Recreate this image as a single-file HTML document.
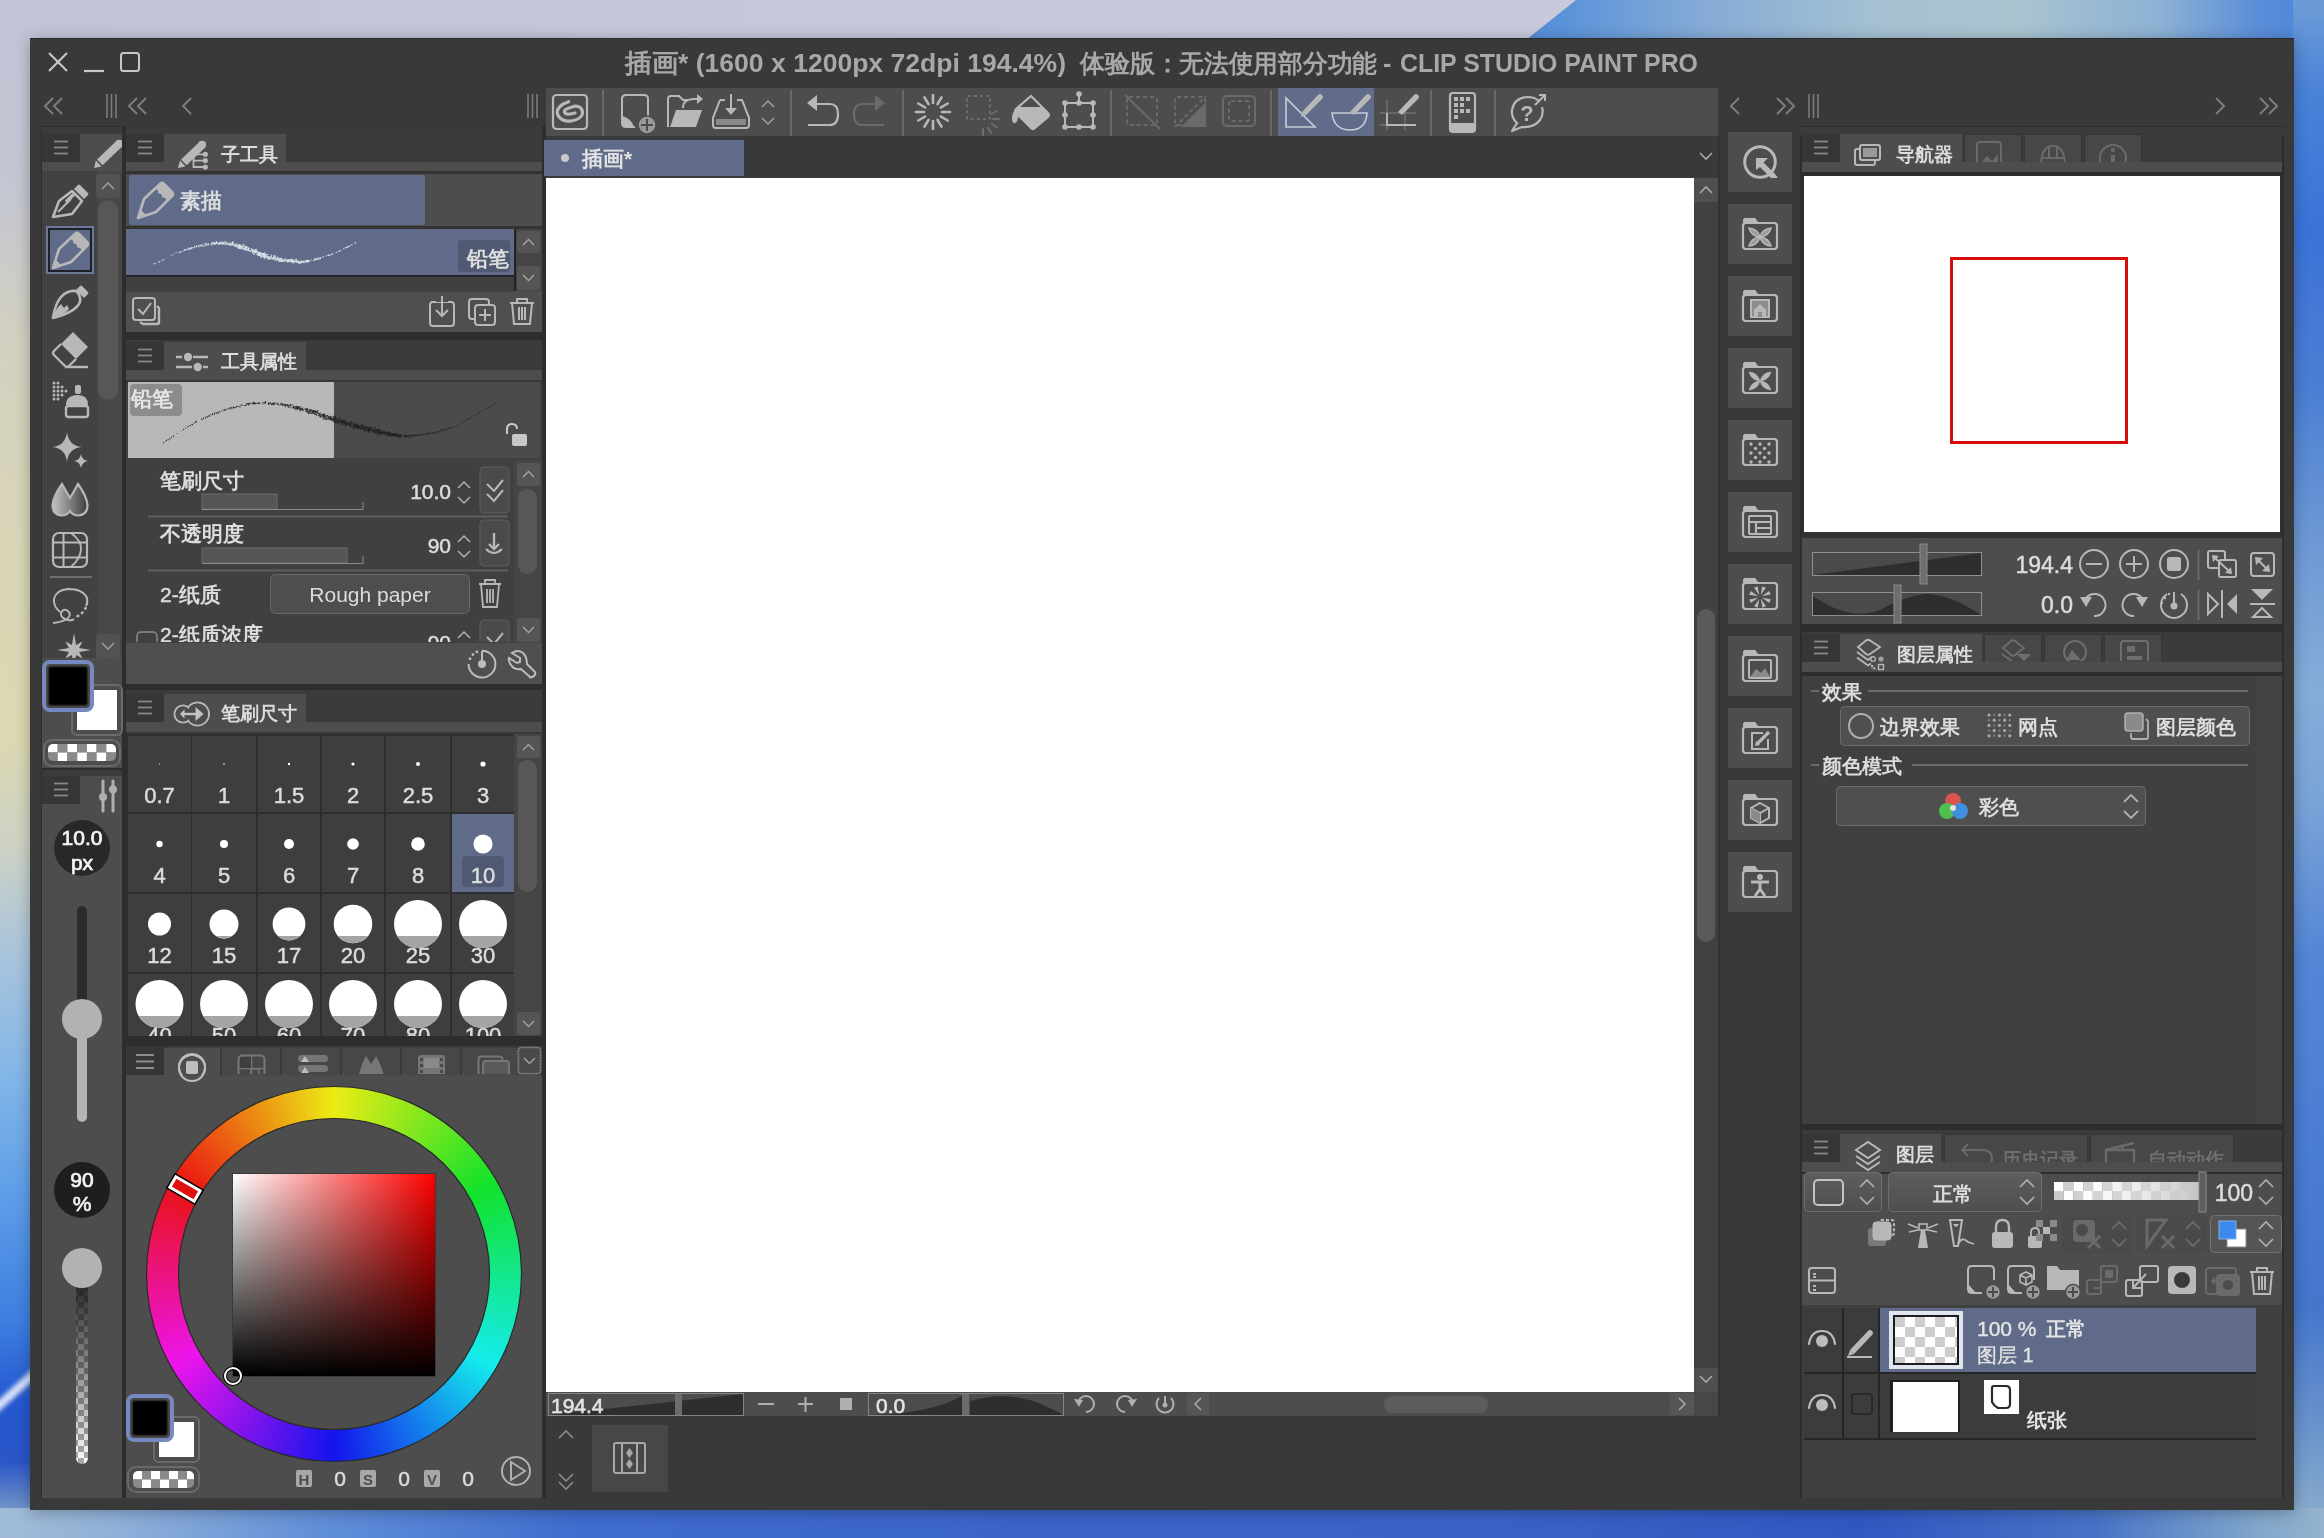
<!DOCTYPE html>
<html><head><meta charset="utf-8"><style>
html,body{margin:0;padding:0;width:2324px;height:1538px;overflow:hidden;background:#c3c7d8}
svg text{font-family:"Liberation Sans",sans-serif}
</style></head><body>

<div style="position:absolute;left:0;top:0;width:2324px;height:1538px;overflow:hidden;background:#c3c7d8">
 <div style="position:absolute;left:0;top:0;width:2324px;height:40px;background:linear-gradient(90deg,#c0c4d6 0%,#c6c9da 40%,#c8cadb 66%)"></div>
 <div style="position:absolute;left:1500px;top:0;width:824px;height:40px;clip-path:polygon(76px 0,824px 0,824px 40px,26px 40px);background:linear-gradient(90deg,#4f8ad8 0%,#5b93da 8%,#86acd6 25%,#a4c0d2 45%,#aac4d0 62%,#8db2d4 80%,#5a8ed8 92%,#4a84dc 100%)"></div>
 <div style="position:absolute;left:0;top:0;width:31px;height:1538px;background:linear-gradient(180deg,#c0c4d6 0%,#c4c6d2 12%,#d2d0c0 22%,#d9d6b8 35%,#dcd8b2 48%,#cdd2c4 55%,#a9c4dc 62%,#82b6e8 70%,#5c9ce8 78%,#3d7ee0 86%,#2658d0 91%,#2a56c8 95%,#6f90c8 98%,#9cb6d0 100%)"></div>
 <div style="position:absolute;left:-20px;top:1382px;width:80px;height:9px;background:rgba(240,244,255,0.85);transform:rotate(-42deg);filter:blur(2px)"></div>
 <div style="position:absolute;left:2293px;top:0;width:31px;height:1538px;background:linear-gradient(180deg,#6c9cd6 0%,#4a82d8 6%,#3c72d8 15%,#4a7ed4 25%,#6c98d4 35%,#86acd8 45%,#7aa4d8 52%,#5486d6 62%,#4a7cd4 75%,#4576cc 85%,#6f98cc 94%,#90b0cc 100%)"></div>
 <div style="position:absolute;left:0;top:1508px;width:2324px;height:30px;background:linear-gradient(90deg,#a2bcd6 0%,#90b0d8 5%,#5f8ed8 14%,#3f6cce 25%,#3a64c8 45%,#3a62c6 65%,#2f58c2 80%,#4672c6 90%,#80a6cc 97%,#94b2cc 100%)"></div>
 <div style="position:absolute;left:30px;top:38px;width:2264px;height:1472px;box-shadow:0 2px 14px rgba(0,0,0,0.28)"></div>
</div>

<svg width="2324" height="1538" style="position:absolute;left:0;top:0;will-change:transform" font-family="Liberation Sans, sans-serif">
<rect x="30" y="38" width="2264" height="1472" fill="#393939" />
<line x1="30" y1="38.5" x2="2294" y2="38.5" stroke="#2a2a2a" stroke-width="1" />
<line x1="49" y1="53" x2="67" y2="71" stroke="#c8c8c8" stroke-width="2.2" />
<line x1="67" y1="53" x2="49" y2="71" stroke="#c8c8c8" stroke-width="2.2" />
<line x1="84" y1="71" x2="104" y2="71" stroke="#c8c8c8" stroke-width="2.2" />
<rect x="121" y="53" width="18" height="18" rx="2.5" fill="none" stroke="#c8c8c8" stroke-width="2" />
<text x="625" y="71.5" font-size="26" fill="#a8a8a8" text-anchor="start" font-weight="bold" textLength="441" lengthAdjust="spacingAndGlyphs">插画* (1600 x 1200px 72dpi 194.4%)</text>
<text x="1080" y="72" font-size="25" fill="#a8a8a8" text-anchor="start" font-weight="bold" >体验版：</text>
<text x="1179" y="72" font-size="25" fill="#a8a8a8" text-anchor="start" font-weight="bold" textLength="198" lengthAdjust="spacingAndGlyphs">无法使用部分功能</text>
<text x="1383" y="71.5" font-size="25" fill="#a8a8a8" text-anchor="start" font-weight="bold" >-</text>
<text x="1400" y="71.5" font-size="25" fill="#a8a8a8" text-anchor="start" font-weight="bold" textLength="298" lengthAdjust="spacingAndGlyphs">CLIP STUDIO PAINT PRO</text>
<path d="M53,98 L45,106 L53,114 M62,98 L54,106 L62,114" fill="none" stroke="#7c7c7c" stroke-width="2" />
<line x1="107.0" y1="94" x2="107.0" y2="118" stroke="#7c7c7c" stroke-width="1.6" />
<line x1="111.5" y1="94" x2="111.5" y2="118" stroke="#7c7c7c" stroke-width="1.6" />
<line x1="116.0" y1="94" x2="116.0" y2="118" stroke="#7c7c7c" stroke-width="1.6" />
<path d="M137,98 L129,106 L137,114 M146,98 L138,106 L146,114" fill="none" stroke="#7c7c7c" stroke-width="2" />
<path d="M191,98 L183,106 L191,114" fill="none" stroke="#7c7c7c" stroke-width="2" />
<line x1="528.0" y1="94" x2="528.0" y2="118" stroke="#7c7c7c" stroke-width="1.6" />
<line x1="532.5" y1="94" x2="532.5" y2="118" stroke="#7c7c7c" stroke-width="1.6" />
<line x1="537.0" y1="94" x2="537.0" y2="118" stroke="#7c7c7c" stroke-width="1.6" />
<path d="M1739,98 L1731,106 L1739,114" fill="none" stroke="#7c7c7c" stroke-width="2" />
<path d="M1777,98 L1785,106 L1777,114 M1786,98 L1794,106 L1786,114" fill="none" stroke="#7c7c7c" stroke-width="2" />
<line x1="1809.0" y1="94" x2="1809.0" y2="118" stroke="#7c7c7c" stroke-width="1.6" />
<line x1="1813.5" y1="94" x2="1813.5" y2="118" stroke="#7c7c7c" stroke-width="1.6" />
<line x1="1818.0" y1="94" x2="1818.0" y2="118" stroke="#7c7c7c" stroke-width="1.6" />
<path d="M2216,98 L2224,106 L2216,114" fill="none" stroke="#7c7c7c" stroke-width="2" />
<path d="M2260,98 L2268,106 L2260,114 M2269,98 L2277,106 L2269,114" fill="none" stroke="#7c7c7c" stroke-width="2" />
<rect x="41" y="126" width="82" height="1372" fill="#2d2d2d" />
<rect x="42" y="127" width="80" height="35" fill="#3b3b3b" />
<rect x="42" y="134" width="38" height="28" fill="#363636" />
<rect x="42" y="162" width="80" height="10" fill="#4d4d4d" />
<line x1="54.0" y1="141.5" x2="68.0" y2="141.5" stroke="#888888" stroke-width="1.8" />
<line x1="54.0" y1="147.5" x2="68.0" y2="147.5" stroke="#888888" stroke-width="1.8" />
<line x1="54.0" y1="153.5" x2="68.0" y2="153.5" stroke="#888888" stroke-width="1.8" />
<rect x="80" y="134" width="42" height="38" fill="#4d4d4d" />
<clipPath id="cstriptab"><rect x="80" y="134" width="42" height="38"/></clipPath><g clip-path="url(#cstriptab)">
<line x1="99.8" y1="162.4" x2="119.1" y2="143.8" stroke="#b8b8b8" stroke-width="8.0"/>
<circle cx="119.1" cy="143.8" r="4.0" fill="#b8b8b8"/>
<path d="M94,168 L101.5,166.4 L95.9,160.6 Z" fill="#b8b8b8"/>
</g>
<rect x="42" y="171" width="80" height="487" fill="#424242" />
<rect x="97" y="171" width="25" height="487" fill="#474747" />
<rect x="96" y="174" width="24" height="24" rx="3" fill="#525252" stroke="none" stroke-width="2" />
<path d="M102,189 L108,183 L114,189" fill="none" stroke="#9a9a9a" stroke-width="1.6" />
<rect x="98" y="200" width="20" height="200" rx="10" fill="#575757" stroke="none" stroke-width="2" />
<rect x="96" y="634" width="24" height="24" rx="3" fill="#525252" stroke="none" stroke-width="2" />
<path d="M102,643 L108,649 L114,643" fill="none" stroke="#9a9a9a" stroke-width="1.6" />
<g transform="translate(52,181)"><path d="M22,8 L26,4 Q27,3 28,4 L36,12 Q37,13 36,14 L32,18 Z" fill="#b8b8b8"/><path d="M1,36 L7,20 L20,10 L30,20 L20,33 Z" fill="none" stroke="#b8b8b8" stroke-width="2.6" stroke-linejoin="round"/><path d="M6,31 L19,18" stroke="#b8b8b8" stroke-width="2"/><path d="M15,20 L21,14" stroke="#b8b8b8" stroke-width="3.5" stroke-linecap="round"/></g>
<rect x="46" y="226" width="48" height="48" fill="#6b7899" />
<rect x="48" y="228" width="44" height="44" fill="#1e2128" />
<rect x="50" y="230" width="40" height="40" fill="#5f6b88" />
<g transform="translate(52,232)"><path d="M1,36 L7,17 L23,2 Q25,0 27,2 L35,10 Q37,12 35,14 L19,30 Z" fill="none" stroke="#b8b8b8" stroke-width="2.6" stroke-linejoin="round"/><path d="M23,2 Q25,0 27,2 L35,10 Q37,12 35,14 L30,19 Q28,14 25,16 Q26,12 21,11 Q22,7 17,7 Z" fill="#b8b8b8"/><path d="M1,36 L4,28 L9,33 Z" fill="#b8b8b8"/></g>
<g transform="translate(52,282)"><path d="M24,8 L28,4 Q29,3 30,4 L36,10 Q37,11 36,12 L32,16 Z" fill="#b8b8b8"/><path d="M1,36 Q3,22 9,15 Q15,8 24,9 Q29,13 28,20 Q24,30 1,36 Z" fill="none" stroke="#b8b8b8" stroke-width="2.6" stroke-linejoin="round"/><path d="M1,36 Q4,26 9,22 L12,26 L15,23 L17,27 Q12,33 1,36 Z" fill="#b8b8b8"/></g>
<g transform="translate(52,332)"><path d="M21,0 L36,15 L24,27 L9,12 Z" fill="#b8b8b8"/><path d="M9,12 L2,19 Q0,21 2,23 L13,34 Q15,36 17,34 L24,27" fill="none" stroke="#b8b8b8" stroke-width="2.4" stroke-linejoin="round"/><path d="M13,35 L36,35" stroke="#b8b8b8" stroke-width="2.4"/></g>
<g transform="translate(52,381)"><circle cx="2" cy="2" r="1.5" fill="#b8b8b8"/><circle cx="6" cy="2" r="1.5" fill="#b8b8b8"/><circle cx="2" cy="6" r="1.5" fill="#b8b8b8"/><circle cx="6" cy="6" r="1.5" fill="#b8b8b8"/><circle cx="10" cy="6" r="1.5" fill="#b8b8b8"/><circle cx="2" cy="10" r="1.5" fill="#b8b8b8"/><circle cx="6" cy="10" r="1.5" fill="#b8b8b8"/><circle cx="10" cy="10" r="1.5" fill="#b8b8b8"/><circle cx="14" cy="10" r="1.5" fill="#b8b8b8"/><circle cx="2" cy="14" r="1.5" fill="#b8b8b8"/><circle cx="6" cy="14" r="1.5" fill="#b8b8b8"/><circle cx="10" cy="14" r="1.5" fill="#b8b8b8"/><circle cx="6" cy="18" r="1.5" fill="#b8b8b8"/><circle cx="2" cy="18" r="1.5" fill="#b8b8b8"/><rect x="23" y="4" width="6" height="9" rx="2" fill="#b8b8b8"/><path d="M14,24 Q14,14 26,14 Q36,14 36,24 Z" fill="#b8b8b8"/><rect x="14" y="25" width="22" height="11" rx="2.5" fill="none" stroke="#b8b8b8" stroke-width="2.4"/></g>
<path d="M67,432 Q68.5,445.5 81.5,447 Q68.5,448.5 67,462 Q65.5,448.5 52.5,447 Q65.5,445.5 67,432 Z" fill="#b8b8b8" stroke="none" stroke-width="2" />
<path d="M81,454 Q82,460 88,461 Q82,462 81,468 Q80,462 74,461 Q80,460 81,454 Z" fill="#b8b8b8" stroke="none" stroke-width="2" />
<defs><linearGradient id="blendg" x1="0" y1="0" x2="1" y2="0"><stop offset="0" stop-color="#c4c4c4"/><stop offset="1" stop-color="#3c3c3c"/></linearGradient></defs>
<path d="M62,484 Q53,497 52.5,505 Q52.5,515 62,515.5 Q67,515.5 70,511 Q73,515.5 78,515.5 Q87.5,515 87.5,505 Q87,497 78,484 Q73,493 70,498 Q67,493 62,484 Z" fill="url(#blendg)" stroke="#b8b8b8" stroke-width="2.2" />
<rect x="53" y="533" width="34" height="34" rx="6" fill="none" stroke="#b8b8b8" stroke-width="2.2" />
<path d="M53,542.5 L87,542.5 M53,557.5 L87,557.5 M63.5,533 L63.5,567 M71,533 Q82,541 81,550 Q80,559 71,567" fill="none" stroke="#b8b8b8" stroke-width="2" />
<line x1="50" y1="577" x2="92" y2="577" stroke="#6e6e6e" stroke-width="2" />
<path d="M53,623 Q62,622 67,619 Q72,615 68,611 Q63,608 61,613 Q60,618 68,620 Q72,621 74,619" fill="none" stroke="#b8b8b8" stroke-width="2" />
<path d="M60,612 Q53,606 54,599 Q56,590 68,589 Q83,589 87,598 Q88,603 86,606" fill="none" stroke="#b8b8b8" stroke-width="2" />
<path d="M86,607 Q84,613 76,617" fill="none" stroke="#b8b8b8" stroke-width="2.4" stroke-dasharray="3,2.5"/>
<clipPath id="clipstar"><rect x="42" y="630" width="55" height="28"/></clipPath>
<g clip-path="url(#clipstar)">
<g transform="translate(56,632)"><path d="M18.0,1.0 L20.1,12.9 L26.5,9.5 L23.1,15.9 L35.0,18.0 L23.1,20.1 L26.5,26.5 L20.1,23.1 L18.0,35.0 L15.9,23.1 L9.5,26.5 L12.9,20.1 L1.0,18.0 L12.9,15.9 L9.5,9.5 L15.9,12.9 Z" fill="#b8b8b8"/></g>
</g>
<rect x="42" y="658" width="80" height="110" fill="#4d4d4d" />
<rect x="72" y="685" width="50" height="50" rx="5" fill="none" stroke="#6a6a6a" stroke-width="2" />
<rect x="77" y="690" width="40" height="40" fill="#ffffff" />
<rect x="44" y="662" width="48" height="48" rx="6" fill="#4a4a4a" stroke="#7589c0" stroke-width="4" />
<rect x="48.5" y="666.5" width="39" height="39" rx="3" fill="#000000" stroke="#2c2c2c" stroke-width="1.5" />
<rect x="44" y="740" width="76" height="26" rx="8" fill="none" stroke="#6a6a6a" stroke-width="2" />
<clipPath id="cliptr1"><rect x="48" y="744" width="68" height="17" rx="5"/></clipPath><g clip-path="url(#cliptr1)">
<rect x="48.0" y="744.0" width="9.72" height="8.5" fill="#ffffff"/>
<rect x="48.0" y="752.5" width="9.72" height="8.5" fill="#8a8a8a"/>
<rect x="57.7" y="744.0" width="9.72" height="8.5" fill="#8a8a8a"/>
<rect x="57.7" y="752.5" width="9.72" height="8.5" fill="#ffffff"/>
<rect x="67.4" y="744.0" width="9.72" height="8.5" fill="#ffffff"/>
<rect x="67.4" y="752.5" width="9.72" height="8.5" fill="#8a8a8a"/>
<rect x="77.2" y="744.0" width="9.72" height="8.5" fill="#8a8a8a"/>
<rect x="77.2" y="752.5" width="9.72" height="8.5" fill="#ffffff"/>
<rect x="86.9" y="744.0" width="9.72" height="8.5" fill="#ffffff"/>
<rect x="86.9" y="752.5" width="9.72" height="8.5" fill="#8a8a8a"/>
<rect x="96.6" y="744.0" width="9.72" height="8.5" fill="#8a8a8a"/>
<rect x="96.6" y="752.5" width="9.72" height="8.5" fill="#ffffff"/>
<rect x="106.3" y="744.0" width="9.72" height="8.5" fill="#ffffff"/>
<rect x="106.3" y="752.5" width="9.72" height="8.5" fill="#8a8a8a"/>
</g>
<rect x="42" y="768" width="80" height="4" fill="#2d2d2d" />
<rect x="42" y="770" width="80" height="34" fill="#3b3b3b" />
<rect x="42" y="776" width="38" height="28" fill="#363636" />
<rect x="42" y="804" width="80" height="10" fill="#4d4d4d" />
<line x1="54.0" y1="783.5" x2="68.0" y2="783.5" stroke="#888888" stroke-width="1.8" />
<line x1="54.0" y1="789.5" x2="68.0" y2="789.5" stroke="#888888" stroke-width="1.8" />
<line x1="54.0" y1="795.5" x2="68.0" y2="795.5" stroke="#888888" stroke-width="1.8" />
<rect x="80" y="776" width="42" height="38" fill="#4d4d4d" />
<path d="M103,781 L103,811 M113,781 L113,811" fill="none" stroke="#b0b0b0" stroke-width="3" stroke-linecap="round"/>
<circle cx="103" cy="797" r="4" fill="#b0b0b0" stroke="none" stroke-width="2" />
<circle cx="113" cy="789.5" r="4" fill="#b0b0b0" stroke="none" stroke-width="2" />
<rect x="42" y="814" width="80" height="684" fill="#4d4d4d" />
<circle cx="82" cy="848" r="28" fill="#282828" stroke="none" stroke-width="2" />
<text x="82" y="845" font-size="21" fill="#f4f4f4" text-anchor="middle" font-weight="normal" stroke="#f4f4f4" stroke-width="0.7">10.0</text>
<text x="82" y="870" font-size="21" fill="#f4f4f4" text-anchor="middle" font-weight="normal" stroke="#f4f4f4" stroke-width="0.7">px</text>
<rect x="77" y="906" width="10" height="112" rx="5" fill="#2b2b2b" stroke="none" stroke-width="2" />
<rect x="77" y="1020" width="10" height="102" rx="5" fill="#b4b4b4" stroke="none" stroke-width="2" />
<circle cx="82" cy="1019" r="20" fill="#b2b2b2" stroke="none" stroke-width="2" />
<circle cx="82" cy="1190" r="28" fill="#1e1e1e" stroke="none" stroke-width="2" />
<text x="82" y="1187" font-size="21" fill="#f4f4f4" text-anchor="middle" font-weight="normal" stroke="#f4f4f4" stroke-width="0.7">90</text>
<text x="82" y="1211" font-size="21" fill="#f4f4f4" text-anchor="middle" font-weight="normal" stroke="#f4f4f4" stroke-width="0.7">%</text>
<defs><pattern id="chk6" width="12" height="12" patternUnits="userSpaceOnUse"><rect width="12" height="12" fill="#ffffff"/><rect width="6" height="6" fill="#aaaaaa"/><rect x="6" y="6" width="6" height="6" fill="#aaaaaa"/></pattern><linearGradient id="fadeblk" x1="0" y1="0" x2="0" y2="1"><stop offset="0" stop-color="#1a1a1a" stop-opacity="1"/><stop offset="1" stop-color="#1a1a1a" stop-opacity="0"/></linearGradient></defs>
<rect x="76" y="1270" width="12" height="194" rx="6" fill="url(#chk6)" stroke="none" stroke-width="2" />
<rect x="76" y="1270" width="12" height="194" rx="6" fill="url(#fadeblk)" stroke="none" stroke-width="2" />
<circle cx="82" cy="1268" r="20" fill="#b2b2b2" stroke="none" stroke-width="2" />
<rect x="123" y="126" width="4" height="1372" fill="#2d2d2d" />
<rect x="542" y="126" width="4" height="1372" fill="#2d2d2d" />
<rect x="126" y="127" width="416" height="35" fill="#3b3b3b" />
<rect x="126" y="134" width="38" height="28" fill="#363636" />
<rect x="126" y="162" width="416" height="10" fill="#4d4d4d" />
<line x1="138.0" y1="141.5" x2="152.0" y2="141.5" stroke="#888888" stroke-width="1.8" />
<line x1="138.0" y1="147.5" x2="152.0" y2="147.5" stroke="#888888" stroke-width="1.8" />
<line x1="138.0" y1="153.5" x2="152.0" y2="153.5" stroke="#888888" stroke-width="1.8" />
<rect x="164" y="134" width="122" height="38" fill="#4d4d4d" />
<line x1="183.8" y1="162.4" x2="202.1" y2="144.8" stroke="#b8b8b8" stroke-width="8.0"/>
<circle cx="202.1" cy="144.8" r="4.0" fill="#b8b8b8"/>
<path d="M178,168 L185.5,166.4 L179.9,160.6 Z" fill="#b8b8b8"/>
<path d="M193.5,155 L193.5,167 L204,167 M193.5,160.6 L204,160.6 M193.5,154.3 L204,154.3" fill="none" stroke="#b8b8b8" stroke-width="1.8" />
<circle cx="205.3" cy="154.3" r="2.6" fill="#b8b8b8" stroke="none" stroke-width="2" />
<circle cx="205.3" cy="160.6" r="2.6" fill="#b8b8b8" stroke="none" stroke-width="2" />
<circle cx="205.3" cy="167" r="2.6" fill="#b8b8b8" stroke="none" stroke-width="2" />
<text x="221" y="161" font-size="19" fill="#dcdcdc" text-anchor="start" font-weight="bold" >子工具</text>
<rect x="126" y="171" width="416" height="121" fill="#4d4d4d" />
<rect x="126" y="171" width="416" height="3" fill="#333333" />
<rect x="129" y="175" width="296" height="50" rx="2" fill="#5f6b88" stroke="none" stroke-width="2" />
<g transform="translate(137,182)"><path d="M1,36 L7,17 L23,2 Q25,0 27,2 L35,10 Q37,12 35,14 L19,30 Z" fill="none" stroke="#b8b8b8" stroke-width="2.6" stroke-linejoin="round"/><path d="M23,2 Q25,0 27,2 L35,10 Q37,12 35,14 L30,19 Q28,14 25,16 Q26,12 21,11 Q22,7 17,7 Z" fill="#b8b8b8"/><path d="M1,36 L4,28 L9,33 Z" fill="#b8b8b8"/></g>
<text x="180" y="208" font-size="21" fill="#dcdcdc" text-anchor="start" font-weight="bold" >素描</text>
<rect x="126" y="226" width="416" height="3" fill="#333333" />
<rect x="126" y="229" width="388" height="47" fill="#5f6b88" />
<rect x="126" y="275" width="388" height="2" fill="#23262e" />
<rect x="514" y="229" width="2" height="62" fill="#222222" />
<rect x="126" y="277" width="388" height="15" fill="#404040" />
<rect x="516" y="229" width="26" height="62" fill="#454545" />
<rect x="517" y="231" width="23" height="22" rx="3" fill="#555555" stroke="none" stroke-width="2" />
<path d="M523,245 L528.5,239.5 L534,245" fill="none" stroke="#a0a0a0" stroke-width="1.5" />
<rect x="517" y="266" width="23" height="24" rx="3" fill="#555555" stroke="none" stroke-width="2" />
<path d="M523,275 L528.5,280.5 L534,275" fill="none" stroke="#a0a0a0" stroke-width="1.5" />
<g fill="#e4e8f0" opacity="0.9"><circle cx="229.7" cy="243.2" r="0.67"/><circle cx="275.0" cy="258.2" r="0.39"/><circle cx="158.2" cy="262.1" r="0.34"/><circle cx="354.9" cy="243.0" r="0.41"/><circle cx="304.8" cy="260.7" r="0.38"/><circle cx="276.2" cy="259.0" r="0.83"/><circle cx="262.9" cy="255.2" r="0.39"/><circle cx="294.2" cy="260.2" r="0.65"/><circle cx="239.6" cy="248.5" r="0.61"/><circle cx="288.8" cy="261.2" r="0.83"/><circle cx="287.6" cy="261.5" r="0.79"/><circle cx="256.3" cy="251.9" r="0.86"/><circle cx="313.9" cy="260.2" r="0.38"/><circle cx="341.3" cy="250.3" r="0.42"/><circle cx="275.0" cy="258.0" r="0.56"/><circle cx="245.8" cy="249.5" r="0.67"/><circle cx="269.4" cy="258.7" r="0.86"/><circle cx="307.8" cy="260.7" r="0.76"/><circle cx="281.3" cy="260.8" r="0.88"/><circle cx="320.7" cy="258.8" r="0.53"/><circle cx="287.7" cy="261.1" r="0.67"/><circle cx="237.1" cy="247.6" r="0.38"/><circle cx="307.9" cy="261.4" r="0.67"/><circle cx="252.3" cy="250.7" r="0.43"/><circle cx="238.8" cy="246.5" r="0.37"/><circle cx="274.1" cy="255.9" r="0.37"/><circle cx="289.0" cy="260.0" r="0.89"/><circle cx="261.0" cy="257.0" r="0.90"/><circle cx="241.0" cy="248.2" r="0.37"/><circle cx="221.0" cy="243.5" r="0.54"/><circle cx="273.6" cy="258.4" r="0.83"/><circle cx="241.3" cy="247.2" r="0.88"/><circle cx="317.6" cy="258.6" r="0.51"/><circle cx="277.4" cy="259.8" r="0.68"/><circle cx="267.9" cy="254.6" r="0.63"/><circle cx="255.0" cy="249.9" r="0.75"/><circle cx="229.7" cy="243.3" r="0.63"/><circle cx="265.3" cy="259.5" r="0.36"/><circle cx="253.3" cy="250.9" r="0.69"/><circle cx="276.3" cy="258.6" r="0.38"/><circle cx="275.3" cy="256.8" r="0.54"/><circle cx="286.5" cy="260.8" r="0.76"/><circle cx="162.6" cy="260.2" r="0.64"/><circle cx="232.2" cy="245.1" r="0.60"/><circle cx="271.1" cy="257.1" r="0.52"/><circle cx="248.0" cy="250.0" r="0.68"/><circle cx="240.5" cy="245.4" r="0.36"/><circle cx="268.2" cy="258.4" r="0.75"/><circle cx="241.3" cy="247.3" r="0.48"/><circle cx="219.5" cy="244.3" r="0.55"/><circle cx="285.2" cy="261.0" r="0.53"/><circle cx="303.9" cy="262.0" r="0.52"/><circle cx="307.9" cy="261.4" r="0.60"/><circle cx="315.2" cy="260.0" r="0.49"/><circle cx="226.6" cy="244.3" r="0.44"/><circle cx="300.3" cy="262.4" r="0.74"/><circle cx="218.0" cy="242.8" r="0.65"/><circle cx="300.3" cy="263.1" r="0.49"/><circle cx="205.1" cy="244.3" r="0.44"/><circle cx="245.6" cy="250.1" r="0.58"/><circle cx="254.2" cy="249.1" r="0.44"/><circle cx="154.9" cy="263.8" r="0.60"/><circle cx="313.9" cy="260.5" r="0.72"/><circle cx="328.6" cy="255.4" r="0.36"/><circle cx="292.0" cy="261.9" r="0.63"/><circle cx="237.9" cy="244.7" r="0.54"/><circle cx="228.0" cy="244.8" r="0.50"/><circle cx="300.3" cy="262.2" r="0.34"/><circle cx="320.3" cy="257.8" r="0.67"/><circle cx="318.8" cy="257.6" r="0.53"/><circle cx="158.2" cy="262.0" r="0.36"/><circle cx="280.3" cy="258.9" r="0.64"/><circle cx="252.6" cy="252.5" r="0.54"/><circle cx="232.4" cy="244.1" r="0.82"/><circle cx="258.8" cy="253.9" r="0.46"/><circle cx="264.2" cy="254.6" r="0.80"/><circle cx="215.0" cy="243.6" r="0.72"/><circle cx="302.0" cy="260.3" r="0.32"/><circle cx="276.2" cy="259.0" r="0.50"/><circle cx="235.0" cy="245.0" r="0.64"/><circle cx="254.1" cy="249.3" r="0.35"/><circle cx="178.2" cy="252.7" r="0.33"/><circle cx="203.7" cy="246.4" r="0.71"/><circle cx="190.1" cy="249.0" r="0.51"/><circle cx="241.5" cy="246.6" r="0.71"/><circle cx="269.5" cy="258.3" r="0.55"/><circle cx="219.5" cy="242.8" r="0.61"/><circle cx="287.7" cy="261.1" r="0.56"/><circle cx="188.3" cy="249.2" r="0.55"/><circle cx="296.8" cy="262.4" r="0.53"/><circle cx="299.4" cy="261.3" r="0.51"/><circle cx="261.1" cy="253.7" r="0.74"/><circle cx="253.4" cy="250.7" r="0.48"/><circle cx="264.3" cy="254.4" r="0.73"/><circle cx="184.9" cy="249.6" r="0.67"/><circle cx="331.3" cy="254.6" r="0.42"/><circle cx="319.1" cy="258.6" r="0.48"/><circle cx="201.7" cy="244.9" r="0.69"/><circle cx="279.9" cy="260.9" r="0.72"/><circle cx="291.2" cy="260.1" r="0.65"/><circle cx="196.6" cy="246.5" r="0.36"/><circle cx="295.9" cy="261.6" r="0.36"/><circle cx="191.8" cy="248.8" r="0.37"/><circle cx="164.2" cy="259.4" r="0.59"/><circle cx="201.9" cy="245.8" r="0.70"/><circle cx="336.1" cy="252.2" r="0.49"/><circle cx="298.5" cy="263.0" r="0.59"/><circle cx="287.7" cy="261.1" r="0.41"/><circle cx="293.1" cy="261.6" r="0.52"/><circle cx="267.4" cy="256.5" r="0.81"/><circle cx="229.5" cy="244.3" r="0.68"/><circle cx="293.0" cy="261.9" r="0.55"/><circle cx="248.6" cy="248.3" r="0.58"/><circle cx="190.0" cy="248.7" r="0.51"/><circle cx="345.0" cy="248.0" r="0.31"/><circle cx="283.9" cy="261.0" r="0.77"/><circle cx="281.7" cy="258.6" r="0.70"/><circle cx="317.7" cy="258.9" r="0.35"/><circle cx="193.2" cy="247.5" r="0.53"/><circle cx="256.2" cy="249.6" r="0.75"/><circle cx="219.5" cy="242.9" r="0.62"/><circle cx="241.2" cy="247.6" r="0.48"/><circle cx="283.9" cy="261.0" r="0.74"/><circle cx="253.4" cy="250.9" r="0.82"/><circle cx="269.8" cy="257.2" r="0.36"/><circle cx="258.5" cy="254.5" r="0.56"/><circle cx="216.5" cy="242.7" r="0.71"/><circle cx="208.5" cy="244.4" r="0.79"/><circle cx="259.3" cy="252.7" r="0.81"/><circle cx="302.0" cy="261.4" r="0.59"/><circle cx="259.0" cy="253.3" r="0.57"/><circle cx="291.3" cy="259.4" r="0.87"/><circle cx="257.9" cy="253.4" r="0.74"/><circle cx="282.7" cy="260.7" r="0.88"/><circle cx="307.9" cy="261.2" r="0.42"/><circle cx="219.5" cy="243.5" r="0.68"/><circle cx="309.1" cy="261.3" r="0.69"/><circle cx="241.5" cy="246.5" r="0.58"/><circle cx="290.0" cy="261.3" r="0.81"/><circle cx="238.8" cy="246.5" r="0.55"/><circle cx="269.8" cy="257.2" r="0.53"/><circle cx="255.2" cy="251.9" r="0.62"/><circle cx="224.1" cy="241.5" r="0.54"/><circle cx="265.4" cy="254.5" r="0.42"/><circle cx="236.4" cy="245.3" r="0.84"/><circle cx="321.8" cy="257.5" r="0.32"/><circle cx="332.4" cy="253.6" r="0.57"/><circle cx="238.6" cy="247.4" r="0.72"/><circle cx="278.8" cy="259.5" r="0.76"/><circle cx="339.9" cy="250.6" r="0.52"/><circle cx="263.6" cy="256.7" r="0.54"/><circle cx="288.8" cy="261.6" r="0.72"/><circle cx="267.1" cy="257.4" r="0.70"/><circle cx="218.0" cy="243.9" r="0.77"/><circle cx="278.6" cy="261.0" r="0.43"/><circle cx="243.4" cy="249.3" r="0.75"/><circle cx="271.4" cy="256.0" r="0.60"/><circle cx="241.5" cy="246.5" r="0.45"/><circle cx="185.0" cy="249.8" r="0.52"/><circle cx="291.2" cy="259.7" r="0.54"/><circle cx="234.0" cy="243.5" r="0.37"/><circle cx="260.2" cy="256.1" r="0.49"/><circle cx="295.0" cy="261.1" r="0.55"/><circle cx="264.8" cy="256.9" r="0.77"/><circle cx="246.1" cy="248.6" r="0.50"/><circle cx="194.9" cy="246.8" r="0.34"/><circle cx="296.8" cy="261.6" r="0.43"/><circle cx="253.6" cy="250.5" r="0.76"/><circle cx="301.2" cy="261.8" r="0.39"/><circle cx="252.0" cy="248.9" r="0.46"/><circle cx="264.1" cy="254.9" r="0.49"/><circle cx="296.8" cy="261.5" r="0.35"/><circle cx="299.4" cy="263.2" r="0.52"/><circle cx="266.6" cy="254.5" r="0.67"/><circle cx="275.9" cy="260.4" r="0.51"/><circle cx="309.0" cy="260.9" r="0.52"/><circle cx="272.3" cy="257.9" r="0.77"/><circle cx="280.2" cy="259.4" r="0.62"/><circle cx="263.1" cy="254.6" r="0.64"/><circle cx="171.0" cy="255.8" r="0.47"/><circle cx="277.8" cy="257.7" r="0.88"/><circle cx="316.5" cy="259.5" r="0.34"/><circle cx="298.6" cy="261.6" r="0.51"/><circle cx="228.2" cy="243.6" r="0.38"/><circle cx="264.7" cy="257.0" r="0.83"/><circle cx="285.4" cy="260.0" r="0.42"/><circle cx="307.7" cy="260.2" r="0.63"/><circle cx="291.2" cy="259.9" r="0.53"/><circle cx="300.3" cy="263.1" r="0.54"/><circle cx="294.1" cy="260.8" r="0.60"/><circle cx="198.4" cy="246.3" r="0.39"/><circle cx="213.4" cy="243.4" r="0.56"/><circle cx="285.4" cy="259.4" r="0.71"/><circle cx="240.2" cy="246.4" r="0.61"/><circle cx="294.1" cy="261.0" r="0.82"/><circle cx="288.8" cy="261.2" r="0.55"/><circle cx="248.8" cy="247.7" r="0.47"/><circle cx="154.8" cy="263.6" r="0.32"/><circle cx="296.8" cy="262.2" r="0.43"/><circle cx="223.8" cy="243.9" r="0.42"/><circle cx="252.3" cy="250.8" r="0.41"/><circle cx="214.9" cy="243.3" r="0.56"/><circle cx="181.8" cy="251.6" r="0.45"/><circle cx="286.5" cy="260.7" r="0.38"/><circle cx="252.4" cy="250.5" r="0.88"/><circle cx="225.3" cy="243.4" r="0.39"/><circle cx="258.5" cy="254.5" r="0.54"/><circle cx="203.6" cy="245.6" r="0.33"/><circle cx="290.0" cy="260.8" r="0.61"/><circle cx="330.2" cy="255.5" r="0.39"/><circle cx="231.0" cy="244.1" r="0.69"/><circle cx="244.4" cy="249.9" r="0.40"/><circle cx="282.6" cy="261.3" r="0.35"/><circle cx="167.4" cy="257.4" r="0.30"/><circle cx="215.0" cy="243.4" r="0.64"/><circle cx="319.1" cy="258.6" r="0.37"/><circle cx="344.9" cy="247.9" r="0.61"/><circle cx="332.6" cy="254.0" r="0.28"/><circle cx="240.7" cy="244.8" r="0.40"/><circle cx="239.3" cy="244.8" r="0.82"/><circle cx="200.0" cy="245.3" r="0.62"/><circle cx="328.7" cy="255.6" r="0.34"/><circle cx="291.1" cy="261.0" r="0.65"/><circle cx="327.0" cy="255.2" r="0.42"/><circle cx="253.2" cy="251.4" r="0.61"/><circle cx="234.6" cy="246.8" r="0.44"/><circle cx="289.0" cy="259.7" r="0.56"/><circle cx="260.3" cy="253.1" r="0.43"/><circle cx="287.6" cy="261.7" r="0.77"/><circle cx="282.8" cy="260.1" r="0.40"/><circle cx="229.4" cy="244.7" r="0.82"/><circle cx="311.2" cy="259.9" r="0.50"/><circle cx="317.7" cy="258.9" r="0.45"/><circle cx="184.9" cy="249.6" r="0.46"/><circle cx="337.6" cy="252.3" r="0.30"/><circle cx="188.4" cy="249.3" r="0.57"/><circle cx="229.5" cy="244.5" r="0.69"/><circle cx="269.7" cy="257.5" r="0.36"/><circle cx="228.1" cy="244.3" r="0.64"/><circle cx="253.3" cy="251.0" r="0.78"/><circle cx="272.2" cy="258.2" r="0.45"/><circle cx="216.4" cy="242.2" r="0.36"/><circle cx="303.0" cy="261.9" r="0.78"/><circle cx="222.4" cy="243.2" r="0.79"/><circle cx="189.8" cy="248.1" r="0.66"/><circle cx="273.6" cy="258.3" r="0.70"/><circle cx="294.0" cy="262.0" r="0.66"/><circle cx="256.4" cy="251.7" r="0.41"/><circle cx="303.8" cy="260.7" r="0.41"/><circle cx="265.4" cy="254.8" r="0.61"/><circle cx="289.9" cy="261.7" r="0.62"/><circle cx="185.1" cy="250.2" r="0.52"/><circle cx="291.2" cy="260.0" r="0.68"/><circle cx="225.3" cy="243.9" r="0.52"/><circle cx="354.9" cy="243.0" r="0.27"/><circle cx="225.2" cy="244.1" r="0.42"/><circle cx="328.6" cy="255.3" r="0.68"/><circle cx="274.1" cy="255.9" r="0.86"/><circle cx="264.7" cy="253.1" r="0.85"/><circle cx="336.4" cy="252.8" r="0.45"/><circle cx="296.1" cy="259.4" r="0.82"/><circle cx="238.4" cy="248.1" r="0.86"/><circle cx="218.0" cy="243.9" r="0.47"/><circle cx="262.5" cy="256.4" r="0.70"/><circle cx="172.8" cy="254.9" r="0.45"/><circle cx="245.2" cy="247.2" r="0.76"/><circle cx="292.1" cy="261.1" r="0.51"/><circle cx="252.1" cy="251.2" r="0.39"/><circle cx="211.8" cy="243.6" r="0.79"/><circle cx="347.5" cy="246.7" r="0.58"/><circle cx="248.2" cy="249.5" r="0.60"/><circle cx="262.5" cy="256.2" r="0.65"/><circle cx="247.1" cy="249.2" r="0.60"/><circle cx="315.0" cy="259.3" r="0.65"/><circle cx="238.9" cy="246.3" r="0.36"/><circle cx="205.3" cy="245.7" r="0.56"/><circle cx="263.8" cy="255.9" r="0.46"/><circle cx="295.0" cy="261.8" r="0.58"/><circle cx="347.7" cy="247.1" r="0.26"/><circle cx="219.5" cy="241.0" r="0.33"/><circle cx="254.3" cy="251.4" r="0.65"/><circle cx="193.3" cy="247.6" r="0.43"/><circle cx="230.9" cy="244.6" r="0.49"/><circle cx="174.4" cy="253.8" r="0.45"/><circle cx="275.2" cy="257.4" r="0.79"/><circle cx="231.3" cy="242.6" r="0.42"/><circle cx="294.0" cy="261.7" r="0.78"/><circle cx="266.5" cy="254.9" r="0.50"/><circle cx="215.0" cy="244.2" r="0.77"/><circle cx="320.5" cy="258.2" r="0.48"/><circle cx="279.9" cy="261.2" r="0.68"/><circle cx="253.7" cy="250.3" r="0.64"/><circle cx="215.0" cy="243.6" r="0.81"/><circle cx="264.5" cy="257.7" r="0.57"/><circle cx="246.7" cy="246.5" r="0.60"/><circle cx="338.8" cy="251.5" r="0.32"/><circle cx="241.7" cy="246.0" r="0.82"/><circle cx="303.0" cy="261.7" r="0.77"/><circle cx="273.3" cy="259.6" r="0.65"/><circle cx="259.7" cy="254.4" r="0.50"/><circle cx="287.7" cy="261.1" r="0.72"/><circle cx="248.4" cy="248.8" r="0.63"/><circle cx="317.9" cy="259.5" r="0.37"/><circle cx="325.9" cy="256.2" r="0.35"/><circle cx="249.2" cy="249.9" r="0.50"/><circle cx="336.1" cy="252.3" r="0.64"/><circle cx="241.6" cy="246.3" r="0.42"/><circle cx="230.9" cy="244.7" r="0.88"/><circle cx="188.3" cy="249.0" r="0.32"/><circle cx="263.7" cy="256.5" r="0.76"/><circle cx="304.8" cy="260.8" r="0.31"/><circle cx="236.6" cy="244.3" r="0.88"/><circle cx="185.0" cy="249.9" r="0.40"/><circle cx="264.6" cy="257.4" r="0.38"/><circle cx="229.5" cy="244.4" r="0.83"/><circle cx="216.5" cy="243.0" r="0.82"/><circle cx="282.8" cy="259.6" r="0.38"/><circle cx="294.1" cy="261.1" r="0.43"/><circle cx="219.5" cy="243.6" r="0.35"/><circle cx="339.8" cy="250.4" r="0.47"/><circle cx="249.0" cy="250.3" r="0.89"/><circle cx="236.2" cy="246.1" r="0.42"/><circle cx="208.5" cy="244.4" r="0.75"/><circle cx="186.7" cy="249.8" r="0.37"/><circle cx="332.9" cy="254.8" r="0.36"/><circle cx="246.2" cy="248.3" r="0.87"/><circle cx="259.9" cy="253.9" r="0.36"/><circle cx="245.3" cy="247.1" r="0.76"/><circle cx="296.9" cy="260.9" r="0.61"/><circle cx="255.4" cy="251.5" r="0.64"/><circle cx="303.9" cy="261.9" r="0.76"/><circle cx="307.0" cy="262.1" r="0.38"/><circle cx="341.3" cy="250.3" r="0.36"/><circle cx="222.5" cy="242.7" r="0.36"/><circle cx="347.4" cy="246.7" r="0.29"/><circle cx="159.6" cy="261.6" r="0.59"/><circle cx="298.5" cy="262.9" r="0.59"/><circle cx="295.0" cy="261.5" r="0.38"/><circle cx="265.2" cy="255.4" r="0.68"/><circle cx="242.6" cy="247.5" r="0.63"/><circle cx="248.5" cy="248.7" r="0.68"/><circle cx="348.9" cy="246.5" r="0.60"/><circle cx="309.0" cy="261.2" r="0.75"/><circle cx="235.2" cy="244.6" r="0.42"/><circle cx="260.8" cy="254.4" r="0.70"/><circle cx="236.5" cy="244.7" r="0.88"/><circle cx="256.7" cy="251.1" r="0.83"/><circle cx="351.1" cy="245.2" r="0.44"/><circle cx="255.3" cy="251.7" r="0.58"/><circle cx="305.8" cy="261.3" r="0.67"/><circle cx="180.0" cy="252.1" r="0.70"/><circle cx="248.6" cy="248.3" r="0.47"/><circle cx="265.9" cy="257.3" r="0.83"/><circle cx="287.8" cy="260.1" r="0.55"/><circle cx="240.4" cy="245.6" r="0.55"/><circle cx="278.9" cy="259.2" r="0.83"/><circle cx="269.7" cy="257.8" r="0.55"/><circle cx="273.5" cy="258.8" r="0.43"/><circle cx="188.2" cy="248.8" r="0.30"/><circle cx="264.7" cy="256.9" r="0.86"/><circle cx="263.9" cy="255.5" r="0.81"/><circle cx="322.9" cy="256.5" r="0.47"/><circle cx="282.5" cy="261.4" r="0.56"/><circle cx="258.2" cy="255.3" r="0.84"/><circle cx="237.4" cy="246.5" r="0.68"/><circle cx="190.1" cy="249.3" r="0.30"/><circle cx="245.5" cy="250.3" r="0.45"/><circle cx="235.0" cy="245.3" r="0.56"/><circle cx="262.3" cy="253.4" r="0.71"/><circle cx="254.8" cy="252.6" r="0.40"/><circle cx="347.6" cy="247.0" r="0.42"/><circle cx="293.1" cy="261.0" r="0.87"/><circle cx="183.5" cy="251.0" r="0.46"/><circle cx="317.8" cy="258.9" r="0.65"/><circle cx="244.1" cy="246.5" r="0.84"/><circle cx="222.4" cy="243.6" r="0.53"/><circle cx="191.5" cy="247.9" r="0.71"/><circle cx="262.9" cy="255.1" r="0.67"/><circle cx="189.9" cy="248.5" r="0.67"/><circle cx="264.6" cy="257.4" r="0.51"/><circle cx="348.8" cy="246.2" r="0.32"/><circle cx="239.2" cy="245.3" r="0.84"/><circle cx="205.0" cy="243.8" r="0.48"/><circle cx="295.0" cy="261.3" r="0.82"/><circle cx="307.9" cy="261.2" r="0.32"/><circle cx="254.5" cy="250.9" r="0.52"/><circle cx="221.0" cy="243.4" r="0.75"/><circle cx="331.2" cy="254.3" r="0.31"/><circle cx="323.1" cy="257.0" r="0.36"/><circle cx="171.0" cy="255.9" r="0.47"/><circle cx="249.9" cy="251.0" r="0.38"/><circle cx="252.1" cy="248.7" r="0.56"/><circle cx="216.5" cy="243.1" r="0.67"/><circle cx="244.8" cy="248.8" r="0.41"/><circle cx="226.9" cy="242.5" r="0.47"/><circle cx="285.2" cy="260.8" r="0.47"/><circle cx="281.6" cy="259.3" r="0.76"/><circle cx="251.5" cy="249.9" r="0.65"/><circle cx="271.2" cy="256.7" r="0.38"/><circle cx="297.7" cy="261.2" r="0.77"/><circle cx="260.1" cy="253.4" r="0.84"/><circle cx="284.1" cy="259.8" r="0.47"/><circle cx="301.2" cy="262.4" r="0.81"/><circle cx="258.9" cy="253.6" r="0.45"/><circle cx="287.8" cy="259.9" r="0.67"/><circle cx="198.5" cy="246.9" r="0.54"/><circle cx="306.7" cy="260.6" r="0.71"/><circle cx="256.0" cy="252.6" r="0.62"/><circle cx="269.7" cy="257.6" r="0.40"/><circle cx="294.1" cy="261.0" r="0.63"/><circle cx="239.7" cy="248.2" r="0.65"/><circle cx="352.0" cy="244.4" r="0.55"/><circle cx="292.1" cy="261.2" r="0.71"/><circle cx="291.1" cy="261.2" r="0.54"/><circle cx="259.2" cy="253.0" r="0.73"/><circle cx="267.4" cy="256.3" r="0.56"/><circle cx="198.2" cy="245.7" r="0.63"/><circle cx="216.5" cy="242.9" r="0.52"/><circle cx="221.0" cy="242.2" r="0.38"/><circle cx="178.3" cy="252.8" r="0.48"/><circle cx="222.5" cy="242.6" r="0.38"/><circle cx="265.0" cy="256.0" r="0.86"/><circle cx="310.0" cy="260.3" r="0.32"/><circle cx="236.3" cy="245.5" r="0.52"/><circle cx="332.7" cy="254.5" r="0.46"/><circle cx="254.3" cy="253.7" r="0.49"/><circle cx="340.1" cy="250.9" r="0.46"/><circle cx="222.4" cy="244.0" r="0.45"/><circle cx="350.0" cy="245.8" r="0.59"/><circle cx="194.7" cy="246.2" r="0.62"/><circle cx="293.1" cy="261.5" r="0.86"/><circle cx="242.3" cy="248.4" r="0.77"/><circle cx="213.3" cy="243.1" r="0.57"/><circle cx="248.6" cy="248.4" r="0.83"/><circle cx="292.3" cy="259.9" r="0.58"/><circle cx="299.4" cy="261.8" r="0.45"/><circle cx="265.3" cy="255.0" r="0.38"/><circle cx="214.9" cy="242.8" r="0.64"/><circle cx="223.9" cy="243.2" r="0.83"/><circle cx="306.7" cy="260.7" r="0.64"/><circle cx="247.9" cy="250.3" r="0.76"/><circle cx="326.0" cy="256.5" r="0.36"/><circle cx="211.9" cy="244.6" r="0.55"/><circle cx="291.1" cy="260.9" r="0.43"/><circle cx="265.2" cy="255.2" r="0.44"/><circle cx="206.7" cy="243.6" r="0.61"/><circle cx="315.1" cy="259.7" r="0.32"/><circle cx="296.8" cy="261.8" r="0.53"/><circle cx="256.3" cy="254.4" r="0.49"/><circle cx="286.5" cy="260.5" r="0.35"/><circle cx="236.4" cy="245.4" r="0.37"/><circle cx="263.1" cy="254.6" r="0.53"/><circle cx="344.0" cy="249.3" r="0.40"/><circle cx="300.3" cy="262.6" r="0.54"/><circle cx="281.6" cy="259.4" r="0.60"/><circle cx="299.4" cy="262.3" r="0.50"/><circle cx="228.2" cy="243.4" r="0.51"/><circle cx="268.5" cy="257.2" r="0.65"/><circle cx="271.1" cy="257.5" r="0.36"/><circle cx="244.9" cy="248.2" r="0.46"/><circle cx="268.6" cy="256.8" r="0.68"/><circle cx="279.9" cy="261.2" r="0.75"/><circle cx="263.1" cy="254.4" r="0.38"/><circle cx="298.6" cy="262.1" r="0.58"/><circle cx="195.1" cy="247.6" r="0.58"/><circle cx="255.4" cy="251.4" r="0.42"/><circle cx="355.7" cy="242.7" r="0.60"/><circle cx="201.9" cy="245.8" r="0.54"/><circle cx="258.8" cy="253.8" r="0.58"/><circle cx="158.4" cy="262.5" r="0.43"/><circle cx="154.8" cy="263.5" r="0.58"/><circle cx="176.1" cy="252.6" r="0.56"/><circle cx="240.4" cy="245.8" r="0.52"/><circle cx="205.2" cy="244.7" r="0.61"/><circle cx="191.6" cy="248.1" r="0.73"/><circle cx="221.0" cy="243.0" r="0.37"/><circle cx="292.3" cy="259.8" r="0.62"/><circle cx="276.3" cy="258.4" r="0.40"/><circle cx="281.9" cy="257.2" r="0.35"/><circle cx="185.0" cy="249.9" r="0.58"/><circle cx="327.1" cy="255.4" r="0.51"/><circle cx="250.0" cy="250.6" r="0.61"/><circle cx="272.1" cy="258.8" r="0.76"/><circle cx="232.3" cy="244.7" r="0.61"/><circle cx="232.5" cy="243.8" r="0.76"/><circle cx="338.9" cy="251.7" r="0.45"/><circle cx="222.5" cy="242.9" r="0.45"/><circle cx="269.7" cy="257.6" r="0.69"/><circle cx="229.5" cy="244.2" r="0.44"/><circle cx="260.6" cy="255.0" r="0.49"/><circle cx="315.0" cy="259.2" r="0.48"/><circle cx="172.7" cy="254.8" r="0.57"/><circle cx="293.2" cy="260.5" r="0.49"/><circle cx="225.2" cy="244.3" r="0.46"/><circle cx="221.0" cy="242.1" r="0.70"/><circle cx="196.5" cy="246.1" r="0.65"/><circle cx="259.3" cy="252.8" r="0.59"/><circle cx="222.4" cy="243.7" r="0.54"/><circle cx="277.7" cy="258.5" r="0.46"/><circle cx="316.1" cy="258.3" r="0.64"/><circle cx="287.7" cy="261.2" r="0.78"/><circle cx="319.1" cy="258.5" r="0.33"/><circle cx="270.8" cy="258.5" r="0.82"/><circle cx="320.4" cy="258.0" r="0.47"/><circle cx="208.5" cy="244.3" r="0.51"/><circle cx="240.9" cy="248.8" r="0.59"/><circle cx="328.6" cy="255.4" r="0.67"/><circle cx="241.3" cy="247.2" r="0.56"/><circle cx="346.4" cy="247.6" r="0.59"/><circle cx="230.9" cy="244.6" r="0.47"/><circle cx="331.3" cy="254.5" r="0.40"/><circle cx="239.6" cy="248.7" r="0.47"/><circle cx="265.3" cy="254.9" r="0.63"/><circle cx="239.0" cy="245.9" r="0.81"/><circle cx="329.9" cy="254.9" r="0.30"/><circle cx="232.7" cy="242.9" r="0.46"/><circle cx="211.9" cy="244.9" r="0.76"/><circle cx="266.3" cy="255.8" r="0.41"/><circle cx="253.2" cy="253.7" r="0.50"/><circle cx="237.4" cy="246.6" r="0.87"/><circle cx="222.4" cy="243.7" r="0.68"/><circle cx="196.6" cy="246.3" r="0.71"/><circle cx="251.7" cy="249.4" r="0.68"/><circle cx="232.1" cy="245.6" r="0.42"/><circle cx="267.9" cy="259.3" r="0.54"/><circle cx="214.9" cy="243.4" r="0.48"/><circle cx="200.0" cy="245.4" r="0.49"/><circle cx="243.5" cy="248.8" r="0.51"/><circle cx="259.7" cy="254.4" r="0.77"/><circle cx="259.4" cy="252.6" r="0.42"/><circle cx="215.0" cy="243.6" r="0.51"/><circle cx="263.2" cy="254.2" r="0.82"/><circle cx="249.6" cy="248.8" r="0.36"/><circle cx="264.7" cy="256.9" r="0.61"/><circle cx="261.3" cy="253.3" r="0.74"/><circle cx="219.5" cy="243.2" r="0.83"/><circle cx="200.1" cy="245.9" r="0.67"/><circle cx="233.8" cy="244.5" r="0.39"/><circle cx="264.6" cy="257.2" r="0.83"/><circle cx="347.5" cy="246.7" r="0.27"/><circle cx="248.8" cy="250.8" r="0.60"/><circle cx="292.0" cy="262.1" r="0.78"/><circle cx="355.6" cy="242.5" r="0.44"/><circle cx="188.0" cy="248.1" r="0.68"/><circle cx="191.8" cy="248.7" r="0.42"/><circle cx="280.0" cy="260.5" r="0.37"/><circle cx="223.9" cy="243.1" r="0.60"/><circle cx="331.2" cy="254.4" r="0.35"/><circle cx="286.5" cy="260.5" r="0.77"/><circle cx="285.5" cy="259.0" r="0.36"/><circle cx="221.1" cy="241.1" r="0.44"/><circle cx="269.9" cy="256.6" r="0.42"/><circle cx="305.7" cy="260.8" r="0.62"/><circle cx="206.9" cy="244.5" r="0.66"/><circle cx="299.4" cy="262.2" r="0.44"/><circle cx="213.3" cy="242.9" r="0.76"/><circle cx="255.6" cy="251.0" r="0.73"/><circle cx="242.4" cy="248.1" r="0.53"/><circle cx="295.0" cy="261.7" r="0.37"/><circle cx="328.5" cy="255.1" r="0.57"/><circle cx="271.6" cy="255.2" r="0.59"/><circle cx="225.2" cy="244.5" r="0.39"/><circle cx="246.4" cy="247.5" r="0.87"/><circle cx="279.0" cy="258.7" r="0.60"/><circle cx="280.4" cy="258.4" r="0.62"/><circle cx="263.2" cy="254.3" r="0.62"/><circle cx="303.9" cy="262.1" r="0.45"/><circle cx="307.0" cy="262.3" r="0.33"/><circle cx="260.5" cy="252.5" r="0.46"/><circle cx="233.5" cy="245.4" r="0.42"/><circle cx="267.3" cy="256.6" r="0.45"/><circle cx="222.4" cy="243.1" r="0.83"/><circle cx="257.4" cy="252.1" r="0.71"/><circle cx="301.2" cy="261.6" r="0.65"/><circle cx="153.9" cy="263.8" r="0.25"/><circle cx="297.7" cy="262.1" r="0.49"/><circle cx="239.1" cy="245.4" r="0.62"/><circle cx="308.9" cy="260.5" r="0.53"/><circle cx="244.6" cy="249.2" r="0.55"/><circle cx="263.7" cy="256.3" r="0.54"/><circle cx="155.9" cy="263.2" r="0.28"/><circle cx="306.9" cy="261.4" r="0.57"/><circle cx="229.6" cy="243.7" r="0.38"/><circle cx="293.2" cy="260.2" r="0.46"/><circle cx="355.0" cy="243.2" r="0.33"/><circle cx="309.1" cy="261.3" r="0.67"/><circle cx="269.6" cy="258.0" r="0.74"/><circle cx="180.1" cy="252.2" r="0.67"/><circle cx="304.9" cy="262.4" r="0.60"/><circle cx="346.3" cy="247.5" r="0.35"/><circle cx="240.0" cy="247.1" r="0.79"/><circle cx="193.3" cy="247.7" r="0.63"/><circle cx="250.8" cy="251.5" r="0.73"/><circle cx="305.7" cy="260.8" r="0.32"/><circle cx="233.8" cy="244.2" r="0.72"/><circle cx="313.9" cy="260.3" r="0.62"/><circle cx="328.6" cy="255.3" r="0.48"/><circle cx="292.2" cy="260.5" r="0.79"/><circle cx="248.7" cy="248.2" r="0.48"/><circle cx="313.9" cy="260.5" r="0.29"/><circle cx="279.0" cy="258.6" r="0.66"/><circle cx="258.8" cy="253.8" r="0.88"/><circle cx="314.9" cy="258.8" r="0.68"/><circle cx="213.3" cy="242.6" r="0.73"/><circle cx="304.0" cy="262.7" r="0.50"/><circle cx="223.9" cy="243.1" r="0.68"/><circle cx="223.9" cy="243.2" r="0.77"/><circle cx="247.7" cy="247.3" r="0.52"/><circle cx="320.4" cy="257.9" r="0.52"/><circle cx="255.5" cy="251.1" r="0.70"/><circle cx="263.1" cy="254.6" r="0.84"/><circle cx="293.9" cy="263.7" r="0.49"/><circle cx="221.0" cy="242.8" r="0.66"/><circle cx="225.5" cy="241.9" r="0.72"/><circle cx="263.2" cy="254.2" r="0.60"/><circle cx="278.7" cy="260.3" r="0.76"/><circle cx="348.9" cy="246.6" r="0.61"/><circle cx="280.0" cy="260.4" r="0.67"/><circle cx="307.0" cy="262.3" r="0.59"/><circle cx="269.7" cy="257.7" r="0.52"/><circle cx="274.7" cy="259.4" r="0.49"/><circle cx="330.1" cy="255.2" r="0.60"/><circle cx="257.9" cy="253.3" r="0.64"/><circle cx="213.3" cy="242.7" r="0.74"/><circle cx="295.0" cy="261.6" r="0.77"/><circle cx="158.1" cy="261.9" r="0.47"/><circle cx="259.4" cy="255.2" r="0.84"/><circle cx="274.8" cy="258.9" r="0.52"/><circle cx="301.2" cy="260.9" r="0.52"/><circle cx="188.5" cy="249.7" r="0.72"/><circle cx="185.0" cy="250.0" r="0.33"/><circle cx="264.4" cy="258.1" r="0.82"/><circle cx="271.3" cy="256.5" r="0.80"/><circle cx="269.4" cy="258.9" r="0.69"/><circle cx="243.4" cy="244.7" r="0.88"/><circle cx="154.1" cy="264.3" r="0.31"/><circle cx="226.7" cy="243.7" r="0.43"/><circle cx="295.1" cy="261.0" r="0.43"/><circle cx="346.2" cy="247.2" r="0.56"/><circle cx="223.8" cy="243.7" r="0.74"/><circle cx="253.2" cy="251.2" r="0.74"/><circle cx="267.2" cy="257.0" r="0.52"/><circle cx="303.9" cy="261.9" r="0.35"/><circle cx="245.8" cy="249.4" r="0.84"/><circle cx="260.6" cy="255.0" r="0.70"/><circle cx="236.2" cy="246.1" r="0.84"/><circle cx="181.8" cy="251.6" r="0.63"/><circle cx="246.5" cy="247.3" r="0.39"/><circle cx="216.5" cy="243.0" r="0.38"/><circle cx="296.8" cy="261.6" r="0.79"/><circle cx="308.0" cy="261.6" r="0.71"/><circle cx="285.5" cy="259.3" r="0.66"/><circle cx="254.0" cy="252.0" r="0.49"/><circle cx="256.9" cy="252.9" r="0.42"/><circle cx="343.7" cy="248.6" r="0.60"/><circle cx="226.9" cy="242.9" r="0.81"/><circle cx="338.7" cy="251.4" r="0.58"/><circle cx="316.5" cy="259.5" r="0.64"/><circle cx="252.5" cy="250.3" r="0.48"/><circle cx="253.4" cy="250.8" r="0.76"/><circle cx="191.6" cy="248.1" r="0.73"/><circle cx="229.6" cy="243.9" r="0.79"/><circle cx="301.2" cy="262.6" r="0.66"/><circle cx="239.0" cy="246.0" r="0.81"/><circle cx="198.5" cy="246.7" r="0.33"/><circle cx="332.4" cy="253.7" r="0.39"/><circle cx="183.4" cy="250.6" r="0.40"/><circle cx="287.7" cy="260.9" r="0.89"/><circle cx="276.0" cy="259.9" r="0.74"/><circle cx="251.0" cy="248.3" r="0.49"/><circle cx="211.7" cy="243.1" r="0.68"/><circle cx="242.7" cy="247.1" r="0.67"/><circle cx="265.1" cy="255.5" r="0.49"/><circle cx="284.1" cy="259.8" r="0.47"/><circle cx="281.3" cy="260.7" r="0.88"/><circle cx="273.7" cy="257.9" r="0.87"/><circle cx="263.9" cy="255.7" r="0.46"/><circle cx="263.4" cy="253.5" r="0.67"/><circle cx="258.5" cy="252.0" r="0.79"/><circle cx="301.1" cy="260.6" r="0.39"/><circle cx="286.7" cy="259.0" r="0.35"/><circle cx="216.4" cy="241.9" r="0.81"/><circle cx="248.5" cy="248.7" r="0.57"/><circle cx="255.8" cy="250.6" r="0.66"/><circle cx="349.8" cy="245.4" r="0.36"/><circle cx="287.8" cy="260.4" r="0.68"/><circle cx="292.1" cy="261.5" r="0.87"/><circle cx="273.7" cy="257.9" r="0.49"/><circle cx="257.6" cy="254.0" r="0.81"/><circle cx="287.7" cy="261.1" r="0.83"/><circle cx="213.4" cy="243.8" r="0.56"/><circle cx="287.6" cy="261.3" r="0.51"/><circle cx="291.1" cy="260.5" r="0.78"/><circle cx="186.6" cy="249.3" r="0.54"/><circle cx="219.5" cy="243.8" r="0.59"/><circle cx="273.5" cy="258.5" r="0.56"/><circle cx="328.6" cy="255.4" r="0.27"/><circle cx="339.9" cy="250.7" r="0.42"/><circle cx="196.7" cy="246.9" r="0.38"/><circle cx="247.8" cy="250.5" r="0.72"/><circle cx="246.6" cy="246.9" r="0.79"/><circle cx="275.4" cy="256.3" r="0.69"/><circle cx="241.6" cy="246.1" r="0.67"/><circle cx="260.3" cy="252.9" r="0.76"/><circle cx="222.5" cy="242.6" r="0.35"/><circle cx="232.9" cy="242.2" r="0.89"/><circle cx="190.0" cy="248.7" r="0.32"/><circle cx="276.5" cy="257.4" r="0.35"/><circle cx="306.8" cy="260.9" r="0.72"/><circle cx="207.0" cy="245.6" r="0.50"/><circle cx="210.1" cy="243.8" r="0.35"/><circle cx="200.0" cy="245.5" r="0.70"/><circle cx="231.0" cy="243.9" r="0.65"/><circle cx="252.8" cy="252.1" r="0.87"/><circle cx="245.6" cy="246.0" r="0.48"/><circle cx="216.5" cy="243.3" r="0.74"/><circle cx="241.0" cy="248.4" r="0.56"/><circle cx="244.1" cy="246.5" r="0.41"/><circle cx="311.2" cy="260.1" r="0.37"/><circle cx="226.7" cy="243.8" r="0.80"/><circle cx="205.0" cy="243.8" r="0.55"/><circle cx="261.0" cy="254.0" r="0.57"/><circle cx="220.9" cy="243.7" r="0.62"/><circle cx="232.7" cy="242.9" r="0.85"/><circle cx="222.4" cy="243.6" r="0.76"/><circle cx="268.2" cy="258.4" r="0.41"/><circle cx="347.7" cy="247.1" r="0.63"/><circle cx="298.6" cy="262.3" r="0.71"/><circle cx="186.7" cy="249.7" r="0.29"/><circle cx="297.7" cy="261.1" r="0.81"/><circle cx="176.1" cy="252.6" r="0.41"/><circle cx="240.0" cy="247.2" r="0.78"/><circle cx="254.1" cy="254.1" r="0.82"/><circle cx="286.5" cy="260.5" r="0.46"/><circle cx="284.2" cy="259.2" r="0.66"/><circle cx="240.3" cy="246.1" r="0.46"/><circle cx="323.1" cy="257.1" r="0.70"/><circle cx="261.6" cy="255.3" r="0.72"/><circle cx="244.8" cy="248.6" r="0.81"/><circle cx="234.8" cy="245.9" r="0.85"/><circle cx="240.0" cy="247.1" r="0.59"/><circle cx="203.4" cy="244.7" r="0.37"/><circle cx="263.2" cy="254.3" r="0.47"/><circle cx="241.1" cy="247.9" r="0.53"/><circle cx="319.2" cy="258.9" r="0.66"/><circle cx="268.4" cy="257.6" r="0.49"/><circle cx="355.0" cy="243.1" r="0.24"/><circle cx="255.0" cy="252.4" r="0.82"/><circle cx="236.4" cy="245.2" r="0.39"/><circle cx="161.2" cy="261.0" r="0.51"/></g>
<rect x="458" y="240" width="52" height="32" rx="4" fill="#4f5a72" stroke="none" stroke-width="2" />
<text x="488" y="266" font-size="21" fill="#dcdcdc" text-anchor="middle" font-weight="bold" >铅笔</text>
<rect x="126" y="292" width="416" height="40" fill="#4f4f4f" />
<rect x="133" y="298" width="22" height="22" rx="3" fill="none" stroke="#b8b8b8" stroke-width="2" />
<path d="M138,309 L143,314 L151,303" fill="none" stroke="#b8b8b8" stroke-width="2" />
<path d="M157,306 L159,308 L159,322 Q159,324 157,324 L143,324 L140,322" fill="none" stroke="#b8b8b8" stroke-width="2.4" />
<rect x="430" y="302" width="24" height="24" rx="3" fill="none" stroke="#b8b8b8" stroke-width="2" />
<path d="M442,296 L442,316 M436,310 L442,316 L448,310" fill="none" stroke="#b8b8b8" stroke-width="2" />
<rect x="436" y="296" width="12" height="6" fill="#4f4f4f" />
<path d="M442,296 L442,316" fill="none" stroke="#b8b8b8" stroke-width="2" />
<rect x="469" y="299" width="20" height="20" rx="3" fill="none" stroke="#b8b8b8" stroke-width="2" />
<rect x="475" y="305" width="20" height="20" rx="3" fill="#4f4f4f" stroke="#b8b8b8" stroke-width="2" />
<path d="M485,309 L485,321 M479,315 L491,315" fill="none" stroke="#b8b8b8" stroke-width="2" />
<path d="M510,303 L534,303 M517,303 L517,299 L527,299 L527,303 M512,303 L514,324 L530,324 L532,303 M519,307 L519,320 M522,307 L522,320 M525,307 L525,320" fill="none" stroke="#b8b8b8" stroke-width="2" />
<rect x="126" y="332" width="416" height="8" fill="#393939" />
<rect x="126" y="332" width="416" height="8" fill="#2d2d2d" />
<rect x="126" y="340" width="416" height="30" fill="#3b3b3b" />
<rect x="126" y="342" width="38" height="28" fill="#363636" />
<rect x="126" y="370" width="416" height="10" fill="#4d4d4d" />
<line x1="138.0" y1="349.5" x2="152.0" y2="349.5" stroke="#888888" stroke-width="1.8" />
<line x1="138.0" y1="355.5" x2="152.0" y2="355.5" stroke="#888888" stroke-width="1.8" />
<line x1="138.0" y1="361.5" x2="152.0" y2="361.5" stroke="#888888" stroke-width="1.8" />
<rect x="164" y="342" width="142" height="38" fill="#4d4d4d" />
<path d="M176,357 L182,357 M193,357 L208,357 M176,367 L192,367 M203,367 L208,367" fill="none" stroke="#b8b8b8" stroke-width="2.4" />
<circle cx="188" cy="357" r="4.2" fill="#b8b8b8" stroke="none" stroke-width="2" />
<circle cx="197.7" cy="367" r="4.2" fill="#b8b8b8" stroke="none" stroke-width="2" />
<text x="221" y="368" font-size="19" fill="#dcdcdc" text-anchor="start" font-weight="bold" >工具属性</text>
<rect x="126" y="384" width="416" height="300" fill="#404040" />
<rect x="128" y="382" width="206" height="76" fill="#b8b8b8" />
<rect x="334" y="382" width="206" height="76" fill="#4b4b4b" />
<g fill="#1c1c1c" opacity="0.85"><circle cx="358.1" cy="426.7" r="0.87"/><circle cx="379.8" cy="429.9" r="0.86"/><circle cx="187.6" cy="426.4" r="0.51"/><circle cx="416.0" cy="435.7" r="0.35"/><circle cx="331.6" cy="418.5" r="0.67"/><circle cx="173.4" cy="436.5" r="0.32"/><circle cx="294.7" cy="408.3" r="0.44"/><circle cx="390.1" cy="433.2" r="0.43"/><circle cx="356.5" cy="426.5" r="0.83"/><circle cx="274.8" cy="403.6" r="0.43"/><circle cx="476.6" cy="414.6" r="0.62"/><circle cx="344.4" cy="421.9" r="0.72"/><circle cx="273.1" cy="404.4" r="0.80"/><circle cx="412.4" cy="435.4" r="0.45"/><circle cx="312.2" cy="412.4" r="0.39"/><circle cx="299.3" cy="408.5" r="0.68"/><circle cx="165.2" cy="441.5" r="0.35"/><circle cx="394.4" cy="434.3" r="0.61"/><circle cx="302.8" cy="407.4" r="0.38"/><circle cx="465.4" cy="420.8" r="0.26"/><circle cx="380.8" cy="432.3" r="0.78"/><circle cx="312.4" cy="411.9" r="0.67"/><circle cx="169.8" cy="438.7" r="0.60"/><circle cx="270.1" cy="403.3" r="0.68"/><circle cx="430.2" cy="433.8" r="0.44"/><circle cx="341.2" cy="421.2" r="0.78"/><circle cx="236.6" cy="406.6" r="0.66"/><circle cx="196.0" cy="421.5" r="0.64"/><circle cx="228.3" cy="408.6" r="0.67"/><circle cx="307.7" cy="411.9" r="0.86"/><circle cx="344.3" cy="422.2" r="0.45"/><circle cx="221.6" cy="411.4" r="0.34"/><circle cx="370.3" cy="430.7" r="0.38"/><circle cx="481.9" cy="411.4" r="0.45"/><circle cx="319.5" cy="414.7" r="0.80"/><circle cx="328.0" cy="419.2" r="0.58"/><circle cx="209.1" cy="415.9" r="0.47"/><circle cx="397.4" cy="435.5" r="0.41"/><circle cx="377.6" cy="433.1" r="0.78"/><circle cx="236.5" cy="406.4" r="0.47"/><circle cx="254.0" cy="403.7" r="0.50"/><circle cx="495.1" cy="403.5" r="0.55"/><circle cx="468.0" cy="418.9" r="0.54"/><circle cx="333.0" cy="419.5" r="0.51"/><circle cx="319.3" cy="415.3" r="0.89"/><circle cx="452.4" cy="427.3" r="0.52"/><circle cx="336.4" cy="419.8" r="0.50"/><circle cx="387.5" cy="433.9" r="0.83"/><circle cx="312.2" cy="412.5" r="0.73"/><circle cx="366.3" cy="426.7" r="0.77"/><circle cx="312.4" cy="411.8" r="0.62"/><circle cx="385.2" cy="432.2" r="0.73"/><circle cx="297.7" cy="408.9" r="0.67"/><circle cx="171.4" cy="437.4" r="0.45"/><circle cx="287.4" cy="405.0" r="0.77"/><circle cx="363.0" cy="426.8" r="0.79"/><circle cx="309.9" cy="410.0" r="0.81"/><circle cx="310.0" cy="409.8" r="0.81"/><circle cx="404.5" cy="435.5" r="0.80"/><circle cx="340.6" cy="417.8" r="0.64"/><circle cx="259.6" cy="403.8" r="0.52"/><circle cx="371.0" cy="427.5" r="0.75"/><circle cx="377.7" cy="432.5" r="0.67"/><circle cx="365.3" cy="430.8" r="0.58"/><circle cx="358.0" cy="427.1" r="0.75"/><circle cx="187.7" cy="426.6" r="0.31"/><circle cx="325.7" cy="415.9" r="0.73"/><circle cx="359.8" cy="426.5" r="0.37"/><circle cx="331.6" cy="418.6" r="0.42"/><circle cx="303.7" cy="409.6" r="0.45"/><circle cx="268.5" cy="403.8" r="0.49"/><circle cx="356.4" cy="426.8" r="0.67"/><circle cx="282.6" cy="404.7" r="0.54"/><circle cx="295.0" cy="407.0" r="0.58"/><circle cx="239.7" cy="406.1" r="0.30"/><circle cx="356.8" cy="425.3" r="0.40"/><circle cx="344.4" cy="421.7" r="0.88"/><circle cx="394.0" cy="436.0" r="0.58"/><circle cx="393.3" cy="434.2" r="0.43"/><circle cx="353.8" cy="424.5" r="0.66"/><circle cx="450.2" cy="428.4" r="0.41"/><circle cx="412.4" cy="435.6" r="0.30"/><circle cx="236.4" cy="406.0" r="0.34"/><circle cx="359.8" cy="426.5" r="0.84"/><circle cx="315.5" cy="412.3" r="0.51"/><circle cx="462.7" cy="422.2" r="0.41"/><circle cx="452.5" cy="427.4" r="0.37"/><circle cx="473.7" cy="415.9" r="0.45"/><circle cx="323.0" cy="414.0" r="0.62"/><circle cx="295.9" cy="409.7" r="0.61"/><circle cx="242.6" cy="404.8" r="0.42"/><circle cx="387.7" cy="432.8" r="0.80"/><circle cx="173.2" cy="436.1" r="0.59"/><circle cx="387.6" cy="433.3" r="0.49"/><circle cx="291.7" cy="407.8" r="0.50"/><circle cx="354.1" cy="429.4" r="0.61"/><circle cx="361.6" cy="425.9" r="0.41"/><circle cx="383.8" cy="431.7" r="0.52"/><circle cx="342.8" cy="421.6" r="0.64"/><circle cx="329.8" cy="418.9" r="0.55"/><circle cx="380.9" cy="431.9" r="0.49"/><circle cx="328.6" cy="417.3" r="0.85"/><circle cx="410.6" cy="435.8" r="0.68"/><circle cx="324.0" cy="415.9" r="0.67"/><circle cx="373.7" cy="429.7" r="0.85"/><circle cx="317.0" cy="412.6" r="0.57"/><circle cx="399.6" cy="436.1" r="0.77"/><circle cx="214.5" cy="413.9" r="0.62"/><circle cx="370.6" cy="429.0" r="0.78"/><circle cx="419.9" cy="435.2" r="0.36"/><circle cx="333.7" cy="417.6" r="0.53"/><circle cx="255.3" cy="403.1" r="0.57"/><circle cx="392.0" cy="435.1" r="0.80"/><circle cx="388.7" cy="434.1" r="0.71"/><circle cx="185.7" cy="428.1" r="0.64"/><circle cx="372.7" cy="427.0" r="0.38"/><circle cx="398.4" cy="436.0" r="0.84"/><circle cx="373.1" cy="432.3" r="0.42"/><circle cx="297.9" cy="408.1" r="0.69"/><circle cx="321.1" cy="414.7" r="0.44"/><circle cx="357.9" cy="427.5" r="0.56"/><circle cx="218.0" cy="412.4" r="0.29"/><circle cx="350.4" cy="424.5" r="0.42"/><circle cx="324.8" cy="413.4" r="0.52"/><circle cx="354.4" cy="422.3" r="0.56"/><circle cx="209.1" cy="415.9" r="0.55"/><circle cx="253.9" cy="403.0" r="0.71"/><circle cx="346.1" cy="422.0" r="0.69"/><circle cx="290.6" cy="405.4" r="0.75"/><circle cx="339.5" cy="420.8" r="0.42"/><circle cx="282.8" cy="403.8" r="0.42"/><circle cx="374.7" cy="432.4" r="0.71"/><circle cx="226.7" cy="409.3" r="0.33"/><circle cx="353.6" cy="425.0" r="0.48"/><circle cx="405.9" cy="435.6" r="0.71"/><circle cx="190.0" cy="425.6" r="0.54"/><circle cx="207.4" cy="417.1" r="0.54"/><circle cx="279.3" cy="405.7" r="0.38"/><circle cx="462.5" cy="421.9" r="0.31"/><circle cx="358.6" cy="424.7" r="0.54"/><circle cx="282.7" cy="404.1" r="0.51"/><circle cx="316.2" cy="415.0" r="0.43"/><circle cx="396.5" cy="434.5" r="0.58"/><circle cx="399.7" cy="434.8" r="0.60"/><circle cx="352.5" cy="423.1" r="0.57"/><circle cx="231.7" cy="407.6" r="0.29"/><circle cx="271.5" cy="404.7" r="0.55"/><circle cx="383.5" cy="433.3" r="0.35"/><circle cx="331.2" cy="419.9" r="0.59"/><circle cx="330.5" cy="416.8" r="0.40"/><circle cx="255.4" cy="403.6" r="0.47"/><circle cx="407.5" cy="436.6" r="0.39"/><circle cx="287.4" cy="405.4" r="0.49"/><circle cx="282.6" cy="405.1" r="0.58"/><circle cx="192.3" cy="424.5" r="0.63"/><circle cx="369.0" cy="429.0" r="0.72"/><circle cx="331.4" cy="419.1" r="0.72"/><circle cx="298.0" cy="407.5" r="0.72"/><circle cx="377.9" cy="432.0" r="0.36"/><circle cx="281.0" cy="404.8" r="0.37"/><circle cx="319.2" cy="415.7" r="0.52"/><circle cx="331.7" cy="418.3" r="0.51"/><circle cx="378.0" cy="431.5" r="0.48"/><circle cx="366.0" cy="428.1" r="0.87"/><circle cx="362.0" cy="424.4" r="0.35"/><circle cx="212.8" cy="414.7" r="0.59"/><circle cx="320.5" cy="416.5" r="0.89"/><circle cx="339.3" cy="421.6" r="0.54"/><circle cx="230.3" cy="409.2" r="0.49"/><circle cx="434.5" cy="433.0" r="0.30"/><circle cx="284.1" cy="405.7" r="0.36"/><circle cx="288.8" cy="406.0" r="0.56"/><circle cx="300.8" cy="408.7" r="0.88"/><circle cx="264.0" cy="403.1" r="0.54"/><circle cx="319.7" cy="414.0" r="0.52"/><circle cx="236.6" cy="406.6" r="0.52"/><circle cx="425.8" cy="433.3" r="0.39"/><circle cx="177.1" cy="433.5" r="0.45"/><circle cx="335.1" cy="418.4" r="0.69"/><circle cx="376.6" cy="430.8" r="0.85"/><circle cx="301.4" cy="406.8" r="0.47"/><circle cx="241.2" cy="405.8" r="0.42"/><circle cx="226.8" cy="409.5" r="0.41"/><circle cx="246.8" cy="403.5" r="0.33"/><circle cx="285.7" cy="405.9" r="0.64"/><circle cx="285.7" cy="405.6" r="0.37"/><circle cx="371.8" cy="431.1" r="0.51"/><circle cx="313.7" cy="412.8" r="0.40"/><circle cx="322.8" cy="414.7" r="0.66"/><circle cx="414.2" cy="436.5" r="0.61"/><circle cx="383.8" cy="431.7" r="0.80"/><circle cx="364.4" cy="427.8" r="0.88"/><circle cx="376.5" cy="431.0" r="0.80"/><circle cx="315.5" cy="412.2" r="0.42"/><circle cx="214.5" cy="413.8" r="0.55"/><circle cx="296.3" cy="407.9" r="0.38"/><circle cx="383.7" cy="432.5" r="0.38"/><circle cx="246.9" cy="404.3" r="0.45"/><circle cx="401.9" cy="437.1" r="0.44"/><circle cx="324.2" cy="415.4" r="0.55"/><circle cx="306.2" cy="411.5" r="0.80"/><circle cx="376.4" cy="431.4" r="0.40"/><circle cx="342.2" cy="423.2" r="0.60"/><circle cx="436.8" cy="432.7" r="0.63"/><circle cx="241.1" cy="405.1" r="0.49"/><circle cx="324.7" cy="419.1" r="0.59"/><circle cx="384.8" cy="434.2" r="0.88"/><circle cx="353.7" cy="424.9" r="0.41"/><circle cx="393.2" cy="434.5" r="0.89"/><circle cx="192.2" cy="424.4" r="0.48"/><circle cx="332.9" cy="420.0" r="0.47"/><circle cx="293.6" cy="406.1" r="0.46"/><circle cx="347.7" cy="422.3" r="0.48"/><circle cx="309.0" cy="412.5" r="0.49"/><circle cx="476.7" cy="414.7" r="0.49"/><circle cx="320.2" cy="412.5" r="0.43"/><circle cx="396.4" cy="435.2" r="0.43"/><circle cx="233.4" cy="407.4" r="0.59"/><circle cx="416.0" cy="435.7" r="0.45"/><circle cx="368.4" cy="431.7" r="0.82"/><circle cx="358.0" cy="427.2" r="0.36"/><circle cx="339.8" cy="419.9" r="0.67"/><circle cx="265.5" cy="402.6" r="0.32"/><circle cx="302.2" cy="409.4" r="0.56"/><circle cx="331.8" cy="418.1" r="0.89"/><circle cx="393.4" cy="433.9" r="0.86"/><circle cx="370.6" cy="429.2" r="0.79"/><circle cx="312.8" cy="410.9" r="0.68"/><circle cx="367.6" cy="428.2" r="0.39"/><circle cx="226.7" cy="409.3" r="0.43"/><circle cx="350.3" cy="424.8" r="0.52"/><circle cx="430.0" cy="432.7" r="0.41"/><circle cx="374.6" cy="432.7" r="0.72"/><circle cx="450.1" cy="428.2" r="0.64"/><circle cx="368.7" cy="430.7" r="0.69"/><circle cx="274.9" cy="402.6" r="0.58"/><circle cx="414.2" cy="435.7" r="0.56"/><circle cx="317.0" cy="417.3" r="0.35"/><circle cx="316.4" cy="414.3" r="0.84"/><circle cx="419.9" cy="435.7" r="0.58"/><circle cx="316.2" cy="414.9" r="0.65"/><circle cx="374.7" cy="432.1" r="0.56"/><circle cx="410.7" cy="436.0" r="0.43"/><circle cx="357.8" cy="428.0" r="0.84"/><circle cx="259.6" cy="402.4" r="0.40"/><circle cx="212.5" cy="413.9" r="0.50"/><circle cx="395.1" cy="436.2" r="0.57"/><circle cx="324.5" cy="414.6" r="0.64"/><circle cx="417.9" cy="435.0" r="0.58"/><circle cx="457.4" cy="425.1" r="0.34"/><circle cx="190.2" cy="425.8" r="0.49"/><circle cx="265.5" cy="403.5" r="0.39"/><circle cx="353.8" cy="424.3" r="0.75"/><circle cx="212.5" cy="413.9" r="0.47"/><circle cx="396.2" cy="436.1" r="0.80"/><circle cx="361.2" cy="427.3" r="0.86"/><circle cx="281.1" cy="403.9" r="0.57"/><circle cx="233.2" cy="406.7" r="0.36"/><circle cx="256.8" cy="403.5" r="0.58"/><circle cx="236.6" cy="406.7" r="0.62"/><circle cx="379.2" cy="432.7" r="0.74"/><circle cx="427.9" cy="433.0" r="0.72"/><circle cx="357.9" cy="427.5" r="0.41"/><circle cx="214.4" cy="413.6" r="0.35"/><circle cx="314.3" cy="410.9" r="0.76"/><circle cx="225.1" cy="410.1" r="0.45"/><circle cx="344.3" cy="422.2" r="0.68"/><circle cx="313.6" cy="413.0" r="0.73"/><circle cx="335.3" cy="423.1" r="0.39"/><circle cx="383.7" cy="432.1" r="0.75"/><circle cx="297.8" cy="408.5" r="0.54"/><circle cx="379.2" cy="432.8" r="0.86"/><circle cx="315.3" cy="412.7" r="0.73"/><circle cx="388.5" cy="434.9" r="0.67"/><circle cx="298.2" cy="406.8" r="0.64"/><circle cx="205.6" cy="417.9" r="0.44"/><circle cx="282.7" cy="404.5" r="0.47"/><circle cx="231.7" cy="407.7" r="0.49"/><circle cx="479.2" cy="412.7" r="0.61"/><circle cx="230.1" cy="408.3" r="0.43"/><circle cx="391.7" cy="436.1" r="0.55"/><circle cx="177.2" cy="433.7" r="0.34"/><circle cx="328.9" cy="416.3" r="0.38"/><circle cx="277.8" cy="404.6" r="0.82"/><circle cx="327.2" cy="416.4" r="0.50"/><circle cx="447.8" cy="428.8" r="0.56"/><circle cx="337.5" cy="421.8" r="0.78"/><circle cx="325.4" cy="416.9" r="0.68"/><circle cx="415.9" cy="434.9" r="0.32"/><circle cx="183.4" cy="429.4" r="0.55"/><circle cx="320.5" cy="416.7" r="0.85"/><circle cx="315.7" cy="411.5" r="0.90"/><circle cx="382.2" cy="433.0" r="0.78"/><circle cx="322.7" cy="415.1" r="0.88"/><circle cx="489.2" cy="407.1" r="0.34"/><circle cx="331.2" cy="419.8" r="0.51"/><circle cx="365.7" cy="429.4" r="0.60"/><circle cx="219.8" cy="411.8" r="0.43"/><circle cx="414.2" cy="435.9" r="0.31"/><circle cx="395.3" cy="434.9" r="0.87"/><circle cx="353.3" cy="426.2" r="0.86"/><circle cx="436.7" cy="432.3" r="0.29"/><circle cx="265.5" cy="402.6" r="0.66"/><circle cx="313.7" cy="413.0" r="0.78"/><circle cx="253.8" cy="402.0" r="0.62"/><circle cx="228.4" cy="408.7" r="0.32"/><circle cx="361.4" cy="426.8" r="0.61"/><circle cx="350.1" cy="425.6" r="0.88"/><circle cx="284.3" cy="404.4" r="0.62"/><circle cx="378.0" cy="431.2" r="0.42"/><circle cx="333.2" cy="419.0" r="0.77"/><circle cx="322.6" cy="415.4" r="0.63"/><circle cx="355.0" cy="426.1" r="0.63"/><circle cx="196.2" cy="421.9" r="0.41"/><circle cx="309.2" cy="412.0" r="0.60"/><circle cx="362.7" cy="428.2" r="0.86"/><circle cx="314.4" cy="410.8" r="0.87"/><circle cx="443.3" cy="430.2" r="0.70"/><circle cx="299.1" cy="409.2" r="0.39"/><circle cx="326.2" cy="419.6" r="0.75"/><circle cx="341.8" cy="419.3" r="0.51"/><circle cx="345.1" cy="425.2" r="0.81"/><circle cx="249.7" cy="403.6" r="0.55"/><circle cx="273.2" cy="404.1" r="0.54"/><circle cx="210.9" cy="415.3" r="0.33"/><circle cx="457.3" cy="425.0" r="0.37"/><circle cx="293.4" cy="407.0" r="0.49"/><circle cx="395.5" cy="433.8" r="0.69"/><circle cx="316.9" cy="413.0" r="0.49"/><circle cx="405.9" cy="435.8" r="0.53"/><circle cx="414.2" cy="435.7" r="0.33"/><circle cx="379.3" cy="432.5" r="0.66"/><circle cx="169.9" cy="438.9" r="0.42"/><circle cx="404.5" cy="436.5" r="0.34"/><circle cx="351.5" cy="426.7" r="0.69"/><circle cx="356.1" cy="427.9" r="0.47"/><circle cx="443.3" cy="430.4" r="0.57"/><circle cx="230.1" cy="408.5" r="0.31"/><circle cx="330.6" cy="416.4" r="0.75"/><circle cx="216.0" cy="412.4" r="0.54"/><circle cx="398.3" cy="436.8" r="0.47"/><circle cx="299.1" cy="409.1" r="0.35"/><circle cx="382.7" cy="430.1" r="0.61"/><circle cx="255.3" cy="403.2" r="0.39"/><circle cx="290.3" cy="406.6" r="0.39"/><circle cx="311.0" cy="411.4" r="0.39"/><circle cx="324.4" cy="414.7" r="0.45"/><circle cx="249.7" cy="403.4" r="0.51"/><circle cx="369.3" cy="428.0" r="0.85"/><circle cx="252.6" cy="403.8" r="0.42"/><circle cx="335.7" cy="416.8" r="0.66"/><circle cx="364.4" cy="427.8" r="0.58"/><circle cx="387.5" cy="433.9" r="0.41"/><circle cx="289.0" cy="405.2" r="0.53"/><circle cx="410.7" cy="435.8" r="0.61"/><circle cx="448.0" cy="429.3" r="0.32"/><circle cx="385.0" cy="432.7" r="0.70"/><circle cx="398.4" cy="436.1" r="0.64"/><circle cx="205.5" cy="417.7" r="0.52"/><circle cx="376.5" cy="431.1" r="0.49"/><circle cx="321.1" cy="414.8" r="0.39"/><circle cx="374.9" cy="431.4" r="0.58"/><circle cx="404.5" cy="436.7" r="0.41"/><circle cx="438.9" cy="431.7" r="0.62"/><circle cx="414.1" cy="435.3" r="0.50"/><circle cx="279.5" cy="404.2" r="0.34"/><circle cx="347.3" cy="423.5" r="0.63"/><circle cx="432.3" cy="433.2" r="0.70"/><circle cx="329.5" cy="419.8" r="0.41"/><circle cx="342.1" cy="423.5" r="0.40"/><circle cx="481.8" cy="411.2" r="0.35"/><circle cx="345.8" cy="422.8" r="0.89"/><circle cx="323.9" cy="416.4" r="0.86"/><circle cx="314.8" cy="414.4" r="0.70"/><circle cx="423.8" cy="434.0" r="0.53"/><circle cx="249.9" cy="404.8" r="0.31"/><circle cx="436.5" cy="431.6" r="0.68"/><circle cx="348.7" cy="424.5" r="0.63"/><circle cx="295.0" cy="407.0" r="0.61"/><circle cx="383.8" cy="431.9" r="0.68"/><circle cx="248.4" cy="404.4" r="0.62"/><circle cx="235.2" cy="407.6" r="0.72"/><circle cx="247.0" cy="404.5" r="0.49"/><circle cx="356.4" cy="426.9" r="0.82"/><circle cx="258.2" cy="403.1" r="0.57"/><circle cx="287.4" cy="405.1" r="0.53"/><circle cx="207.2" cy="416.6" r="0.58"/><circle cx="306.8" cy="409.7" r="0.68"/><circle cx="361.9" cy="425.0" r="0.86"/><circle cx="295.0" cy="407.1" r="0.53"/><circle cx="406.0" cy="436.6" r="0.52"/><circle cx="468.3" cy="419.4" r="0.30"/><circle cx="362.7" cy="428.1" r="0.35"/><circle cx="438.7" cy="430.9" r="0.41"/><circle cx="400.8" cy="435.6" r="0.76"/><circle cx="367.6" cy="428.1" r="0.54"/><circle cx="378.3" cy="429.8" r="0.69"/><circle cx="389.9" cy="434.0" r="0.44"/><circle cx="335.5" cy="422.4" r="0.77"/><circle cx="397.4" cy="435.6" r="0.36"/><circle cx="342.8" cy="421.5" r="0.46"/><circle cx="465.4" cy="420.7" r="0.60"/><circle cx="282.6" cy="405.2" r="0.53"/><circle cx="361.6" cy="426.0" r="0.48"/><circle cx="293.2" cy="407.9" r="0.67"/><circle cx="379.4" cy="432.0" r="0.63"/><circle cx="325.7" cy="415.8" r="0.56"/><circle cx="352.9" cy="427.7" r="0.77"/><circle cx="327.1" cy="416.8" r="0.49"/><circle cx="397.4" cy="435.4" r="0.42"/><circle cx="209.3" cy="416.4" r="0.31"/><circle cx="328.5" cy="417.7" r="0.59"/><circle cx="391.3" cy="433.2" r="0.36"/><circle cx="389.9" cy="434.2" r="0.77"/><circle cx="357.8" cy="427.8" r="0.74"/><circle cx="399.7" cy="435.0" r="0.66"/><circle cx="181.7" cy="431.4" r="0.32"/><circle cx="214.2" cy="413.0" r="0.41"/><circle cx="233.4" cy="407.3" r="0.38"/><circle cx="165.2" cy="441.6" r="0.39"/><circle cx="299.5" cy="407.9" r="0.44"/><circle cx="445.4" cy="429.2" r="0.65"/><circle cx="370.4" cy="430.2" r="0.60"/><circle cx="320.6" cy="416.3" r="0.36"/><circle cx="328.5" cy="417.7" r="0.82"/><circle cx="369.3" cy="427.7" r="0.77"/><circle cx="404.6" cy="437.3" r="0.53"/><circle cx="364.5" cy="427.3" r="0.71"/><circle cx="409.0" cy="435.8" r="0.40"/><circle cx="305.6" cy="408.7" r="0.49"/><circle cx="368.9" cy="429.7" r="0.64"/><circle cx="397.5" cy="435.1" r="0.53"/><circle cx="231.7" cy="407.6" r="0.34"/><circle cx="296.6" cy="406.8" r="0.35"/><circle cx="253.9" cy="403.2" r="0.30"/><circle cx="345.6" cy="423.5" r="0.88"/><circle cx="396.5" cy="434.6" r="0.39"/><circle cx="254.0" cy="404.5" r="0.30"/><circle cx="210.7" cy="414.6" r="0.46"/><circle cx="391.2" cy="433.3" r="0.60"/><circle cx="423.8" cy="434.0" r="0.37"/><circle cx="324.3" cy="415.0" r="0.59"/><circle cx="394.2" cy="435.1" r="0.80"/><circle cx="218.1" cy="412.6" r="0.50"/><circle cx="278.0" cy="403.5" r="0.37"/><circle cx="378.2" cy="430.3" r="0.57"/><circle cx="303.5" cy="410.4" r="0.52"/><circle cx="367.8" cy="427.5" r="0.42"/><circle cx="338.9" cy="422.8" r="0.85"/><circle cx="359.4" cy="428.2" r="0.37"/><circle cx="339.9" cy="419.7" r="0.43"/><circle cx="293.5" cy="406.9" r="0.59"/><circle cx="218.0" cy="412.2" r="0.39"/><circle cx="228.3" cy="408.6" r="0.41"/><circle cx="432.3" cy="433.0" r="0.44"/><circle cx="441.1" cy="431.1" r="0.31"/><circle cx="307.9" cy="411.1" r="0.60"/><circle cx="233.6" cy="408.1" r="0.66"/><circle cx="305.4" cy="409.3" r="0.83"/><circle cx="210.7" cy="414.7" r="0.36"/><circle cx="296.5" cy="407.2" r="0.63"/><circle cx="308.8" cy="413.1" r="0.63"/><circle cx="398.6" cy="435.0" r="0.68"/><circle cx="356.7" cy="425.8" r="0.57"/><circle cx="323.7" cy="416.9" r="0.83"/><circle cx="300.7" cy="409.2" r="0.55"/><circle cx="355.2" cy="425.3" r="0.60"/><circle cx="378.0" cy="431.2" r="0.37"/><circle cx="238.1" cy="406.2" r="0.31"/><circle cx="223.0" cy="409.7" r="0.54"/><circle cx="296.5" cy="407.2" r="0.60"/><circle cx="258.2" cy="403.0" r="0.45"/><circle cx="371.0" cy="427.5" r="0.81"/><circle cx="356.6" cy="426.3" r="0.82"/><circle cx="264.0" cy="402.5" r="0.60"/><circle cx="238.1" cy="406.3" r="0.67"/><circle cx="313.6" cy="413.1" r="0.87"/><circle cx="317.6" cy="410.8" r="0.82"/><circle cx="493.4" cy="404.8" r="0.51"/><circle cx="328.0" cy="419.0" r="0.50"/><circle cx="262.5" cy="401.9" r="0.49"/><circle cx="288.7" cy="406.8" r="0.67"/><circle cx="325.9" cy="415.4" r="0.51"/><circle cx="194.1" cy="422.9" r="0.58"/><circle cx="364.2" cy="428.5" r="0.67"/><circle cx="337.3" cy="422.1" r="0.85"/><circle cx="386.4" cy="432.9" r="0.69"/><circle cx="258.2" cy="403.6" r="0.73"/><circle cx="201.7" cy="418.9" r="0.48"/><circle cx="201.8" cy="419.1" r="0.35"/><circle cx="484.5" cy="409.9" r="0.42"/><circle cx="192.0" cy="424.2" r="0.30"/><circle cx="268.5" cy="403.7" r="0.43"/><circle cx="214.4" cy="413.6" r="0.31"/><circle cx="491.3" cy="405.8" r="0.55"/><circle cx="388.1" cy="431.2" r="0.49"/><circle cx="261.0" cy="403.0" r="0.38"/><circle cx="374.9" cy="431.4" r="0.62"/><circle cx="171.4" cy="437.4" r="0.56"/><circle cx="377.5" cy="433.7" r="0.75"/><circle cx="421.7" cy="434.2" r="0.56"/><circle cx="295.1" cy="406.7" r="0.37"/><circle cx="289.0" cy="405.4" r="0.38"/><circle cx="285.8" cy="405.3" r="0.53"/><circle cx="449.7" cy="427.4" r="0.58"/><circle cx="351.9" cy="425.3" r="0.53"/><circle cx="318.3" cy="413.4" r="0.82"/><circle cx="388.5" cy="435.0" r="0.51"/><circle cx="254.0" cy="404.2" r="0.40"/><circle cx="166.6" cy="440.7" r="0.35"/><circle cx="281.0" cy="404.7" r="0.63"/><circle cx="294.7" cy="408.2" r="0.75"/><circle cx="273.2" cy="403.8" r="0.61"/><circle cx="372.0" cy="430.0" r="0.75"/><circle cx="334.3" cy="420.8" r="0.73"/><circle cx="223.1" cy="410.1" r="0.35"/><circle cx="330.3" cy="417.4" r="0.76"/><circle cx="309.5" cy="411.0" r="0.61"/><circle cx="340.8" cy="422.2" r="0.66"/><circle cx="355.3" cy="425.0" r="0.71"/><circle cx="302.4" cy="408.7" r="0.68"/><circle cx="360.8" cy="429.1" r="0.42"/><circle cx="327.3" cy="416.2" r="0.41"/><circle cx="430.1" cy="433.3" r="0.29"/><circle cx="336.3" cy="420.0" r="0.50"/><circle cx="258.2" cy="403.3" r="0.48"/><circle cx="419.9" cy="435.4" r="0.62"/><circle cx="357.9" cy="427.4" r="0.36"/><circle cx="281.1" cy="404.1" r="0.56"/><circle cx="288.6" cy="407.5" r="0.60"/><circle cx="334.4" cy="420.7" r="0.75"/><circle cx="332.7" cy="420.6" r="0.65"/><circle cx="384.7" cy="434.4" r="0.37"/><circle cx="338.0" cy="420.1" r="0.71"/><circle cx="306.8" cy="409.8" r="0.69"/><circle cx="356.9" cy="425.2" r="0.72"/><circle cx="428.0" cy="433.6" r="0.60"/><circle cx="281.2" cy="403.3" r="0.64"/><circle cx="357.5" cy="428.9" r="0.47"/><circle cx="334.5" cy="420.4" r="0.64"/><circle cx="376.4" cy="431.4" r="0.87"/><circle cx="327.5" cy="415.5" r="0.66"/><circle cx="486.8" cy="408.3" r="0.60"/><circle cx="225.2" cy="410.5" r="0.61"/><circle cx="363.3" cy="425.8" r="0.82"/><circle cx="252.5" cy="403.4" r="0.52"/><circle cx="356.8" cy="425.3" r="0.79"/><circle cx="395.7" cy="433.2" r="0.38"/><circle cx="323.2" cy="418.7" r="0.77"/><circle cx="307.1" cy="408.9" r="0.77"/><circle cx="342.9" cy="421.2" r="0.83"/><circle cx="375.3" cy="429.5" r="0.88"/><circle cx="335.4" cy="417.6" r="0.66"/><circle cx="203.6" cy="418.3" r="0.65"/><circle cx="303.9" cy="409.0" r="0.45"/><circle cx="430.1" cy="433.4" r="0.41"/><circle cx="299.4" cy="408.3" r="0.72"/><circle cx="349.1" cy="423.2" r="0.84"/><circle cx="333.3" cy="418.5" r="0.55"/><circle cx="163.0" cy="443.1" r="0.27"/><circle cx="253.9" cy="403.1" r="0.73"/><circle cx="310.3" cy="413.3" r="0.49"/><circle cx="298.2" cy="407.0" r="0.41"/><circle cx="341.4" cy="420.5" r="0.50"/><circle cx="251.2" cy="403.8" r="0.49"/><circle cx="385.1" cy="432.5" r="0.65"/><circle cx="405.9" cy="435.5" r="0.34"/><circle cx="412.5" cy="437.1" r="0.51"/><circle cx="164.0" cy="442.3" r="0.49"/><circle cx="378.7" cy="435.3" r="0.80"/><circle cx="166.5" cy="440.6" r="0.57"/><circle cx="419.9" cy="435.5" r="0.36"/><circle cx="481.8" cy="411.2" r="0.28"/><circle cx="324.1" cy="415.6" r="0.64"/><circle cx="328.9" cy="416.3" r="0.61"/><circle cx="300.3" cy="410.6" r="0.78"/><circle cx="285.8" cy="404.9" r="0.46"/><circle cx="493.4" cy="404.7" r="0.47"/><circle cx="341.3" cy="420.7" r="0.64"/><circle cx="312.9" cy="410.6" r="0.43"/><circle cx="190.1" cy="425.8" r="0.26"/><circle cx="367.1" cy="430.1" r="0.54"/><circle cx="282.7" cy="404.3" r="0.44"/><circle cx="399.5" cy="436.8" r="0.58"/><circle cx="216.5" cy="413.6" r="0.51"/><circle cx="297.7" cy="408.7" r="0.74"/><circle cx="202.1" cy="419.6" r="0.53"/><circle cx="205.2" cy="417.0" r="0.44"/><circle cx="397.4" cy="435.2" r="0.46"/><circle cx="214.4" cy="413.5" r="0.49"/><circle cx="265.5" cy="401.8" r="0.73"/><circle cx="334.4" cy="420.5" r="0.78"/><circle cx="248.5" cy="405.1" r="0.51"/><circle cx="409.0" cy="435.6" r="0.45"/><circle cx="473.7" cy="415.9" r="0.58"/><circle cx="434.7" cy="433.5" r="0.60"/><circle cx="219.7" cy="411.6" r="0.66"/><circle cx="368.5" cy="431.4" r="0.37"/><circle cx="309.6" cy="410.8" r="0.47"/><circle cx="339.2" cy="421.8" r="0.56"/><circle cx="292.3" cy="404.6" r="0.67"/><circle cx="382.0" cy="433.9" r="0.86"/><circle cx="190.1" cy="425.7" r="0.33"/><circle cx="379.5" cy="431.6" r="0.76"/><circle cx="357.1" cy="424.3" r="0.59"/><circle cx="270.1" cy="403.4" r="0.42"/><circle cx="239.9" cy="406.9" r="0.71"/><circle cx="309.3" cy="411.7" r="0.58"/><circle cx="295.0" cy="407.2" r="0.44"/><circle cx="408.9" cy="435.3" r="0.76"/><circle cx="201.7" cy="418.9" r="0.52"/><circle cx="310.9" cy="411.8" r="0.51"/><circle cx="299.7" cy="407.2" r="0.62"/><circle cx="367.6" cy="428.3" r="0.61"/><circle cx="440.9" cy="430.3" r="0.68"/><circle cx="357.8" cy="427.7" r="0.67"/><circle cx="388.8" cy="433.6" r="0.58"/><circle cx="256.7" cy="402.9" r="0.31"/><circle cx="369.0" cy="429.1" r="0.36"/><circle cx="183.7" cy="429.7" r="0.51"/><circle cx="311.4" cy="410.1" r="0.85"/><circle cx="371.8" cy="431.0" r="0.47"/><circle cx="484.5" cy="410.0" r="0.49"/><circle cx="296.2" cy="408.4" r="0.84"/><circle cx="355.1" cy="425.8" r="0.81"/><circle cx="296.6" cy="406.9" r="0.69"/><circle cx="379.5" cy="431.5" r="0.53"/><circle cx="471.1" cy="417.8" r="0.51"/><circle cx="332.2" cy="416.7" r="0.49"/><circle cx="221.5" cy="410.9" r="0.32"/><circle cx="351.3" cy="421.6" r="0.69"/><circle cx="400.8" cy="434.8" r="0.84"/><circle cx="336.7" cy="418.8" r="0.55"/><circle cx="383.5" cy="433.3" r="0.67"/><circle cx="244.2" cy="405.5" r="0.62"/><circle cx="345.9" cy="422.7" r="0.67"/><circle cx="350.2" cy="425.2" r="0.75"/><circle cx="309.4" cy="411.5" r="0.42"/><circle cx="393.2" cy="434.8" r="0.56"/><circle cx="246.8" cy="403.5" r="0.63"/><circle cx="276.4" cy="403.2" r="0.46"/><circle cx="163.9" cy="442.2" r="0.45"/><circle cx="389.3" cy="431.4" r="0.48"/><circle cx="378.3" cy="429.9" r="0.59"/><circle cx="350.5" cy="424.3" r="0.65"/><circle cx="354.7" cy="427.0" r="0.85"/><circle cx="355.6" cy="424.0" r="0.70"/><circle cx="321.0" cy="415.0" r="0.50"/><circle cx="369.0" cy="429.3" r="0.44"/><circle cx="310.9" cy="411.8" r="0.73"/><circle cx="364.9" cy="426.1" r="0.53"/><circle cx="309.5" cy="411.2" r="0.76"/><circle cx="367.9" cy="426.8" r="0.36"/><circle cx="342.2" cy="423.4" r="0.82"/><circle cx="407.5" cy="436.5" r="0.57"/><circle cx="434.6" cy="433.3" r="0.43"/><circle cx="366.4" cy="426.4" r="0.54"/><circle cx="317.6" cy="410.8" r="0.42"/><circle cx="368.4" cy="431.8" r="0.43"/><circle cx="268.5" cy="403.6" r="0.77"/><circle cx="336.3" cy="420.1" r="0.48"/><circle cx="314.1" cy="411.5" r="0.89"/><circle cx="268.5" cy="404.2" r="0.64"/><circle cx="290.6" cy="405.1" r="0.74"/><circle cx="417.9" cy="434.9" r="0.58"/><circle cx="449.9" cy="427.9" r="0.51"/><circle cx="254.0" cy="403.7" r="0.32"/><circle cx="163.1" cy="443.2" r="0.37"/><circle cx="289.0" cy="405.4" r="0.64"/><circle cx="367.4" cy="429.2" r="0.52"/><circle cx="351.1" cy="422.3" r="0.67"/><circle cx="361.3" cy="427.3" r="0.66"/><circle cx="394.1" cy="435.4" r="0.83"/><circle cx="396.3" cy="435.7" r="0.35"/><circle cx="412.3" cy="434.8" r="0.64"/><circle cx="315.7" cy="411.6" r="0.41"/><circle cx="383.7" cy="432.4" r="0.50"/><circle cx="312.8" cy="410.9" r="0.86"/><circle cx="329.8" cy="418.9" r="0.89"/><circle cx="262.5" cy="404.6" r="0.39"/><circle cx="378.1" cy="430.6" r="0.73"/><circle cx="293.4" cy="407.3" r="0.67"/><circle cx="273.2" cy="403.6" r="0.53"/><circle cx="412.4" cy="436.5" r="0.37"/><circle cx="423.8" cy="434.4" r="0.34"/><circle cx="302.1" cy="409.8" r="0.89"/><circle cx="311.8" cy="413.6" r="0.73"/><circle cx="265.5" cy="401.6" r="0.51"/><circle cx="259.6" cy="403.1" r="0.38"/><circle cx="367.1" cy="430.3" r="0.64"/><circle cx="298.0" cy="407.7" r="0.41"/><circle cx="325.3" cy="417.2" r="0.39"/><circle cx="341.0" cy="421.6" r="0.50"/><circle cx="400.6" cy="437.3" r="0.82"/><circle cx="430.2" cy="433.6" r="0.50"/><circle cx="409.1" cy="437.4" r="0.53"/><circle cx="344.2" cy="422.6" r="0.55"/><circle cx="409.1" cy="437.1" r="0.65"/><circle cx="323.7" cy="417.0" r="0.58"/><circle cx="313.7" cy="412.8" r="0.67"/><circle cx="166.4" cy="440.4" r="0.59"/><circle cx="368.8" cy="430.1" r="0.73"/><circle cx="354.3" cy="428.5" r="0.60"/><circle cx="336.3" cy="420.1" r="0.87"/><circle cx="346.0" cy="422.2" r="0.72"/><circle cx="335.0" cy="418.9" r="0.87"/><circle cx="495.3" cy="404.0" r="0.25"/><circle cx="219.8" cy="411.7" r="0.41"/><circle cx="395.4" cy="434.6" r="0.40"/><circle cx="287.4" cy="405.2" r="0.41"/><circle cx="251.1" cy="403.7" r="0.37"/><circle cx="356.8" cy="425.5" r="0.42"/><circle cx="396.5" cy="434.4" r="0.73"/><circle cx="378.3" cy="429.7" r="0.50"/><circle cx="322.8" cy="414.6" r="0.85"/><circle cx="325.2" cy="417.4" r="0.79"/><circle cx="359.4" cy="428.1" r="0.67"/><circle cx="388.7" cy="434.1" r="0.48"/><circle cx="287.5" cy="404.8" r="0.56"/><circle cx="428.1" cy="434.2" r="0.56"/><circle cx="293.6" cy="406.1" r="0.44"/><circle cx="317.7" cy="415.2" r="0.39"/><circle cx="363.8" cy="430.3" r="0.68"/><circle cx="317.3" cy="411.7" r="0.66"/><circle cx="345.5" cy="423.9" r="0.62"/><circle cx="270.1" cy="403.9" r="0.53"/><circle cx="396.4" cy="435.0" r="0.47"/><circle cx="359.9" cy="426.3" r="0.65"/><circle cx="299.7" cy="407.1" r="0.69"/><circle cx="407.4" cy="436.2" r="0.49"/><circle cx="343.2" cy="420.3" r="0.48"/><circle cx="285.9" cy="404.7" r="0.82"/><circle cx="252.5" cy="403.4" r="0.52"/><circle cx="328.9" cy="416.6" r="0.48"/><circle cx="262.5" cy="403.2" r="0.37"/><circle cx="379.4" cy="431.8" r="0.55"/><circle cx="270.1" cy="403.5" r="0.41"/><circle cx="374.2" cy="427.3" r="0.57"/><circle cx="493.2" cy="404.4" r="0.48"/><circle cx="246.8" cy="403.8" r="0.49"/><circle cx="373.4" cy="430.9" r="0.89"/><circle cx="428.0" cy="434.0" r="0.58"/><circle cx="212.5" cy="414.0" r="0.59"/><circle cx="375.7" cy="427.6" r="0.59"/><circle cx="359.2" cy="428.7" r="0.39"/><circle cx="252.5" cy="403.3" r="0.73"/><circle cx="373.3" cy="431.3" r="0.41"/><circle cx="369.0" cy="429.3" r="0.59"/><circle cx="330.0" cy="418.2" r="0.78"/><circle cx="376.1" cy="433.2" r="0.59"/><circle cx="335.1" cy="418.4" r="0.53"/><circle cx="331.3" cy="419.4" r="0.88"/><circle cx="390.8" cy="435.2" r="0.80"/><circle cx="309.1" cy="412.3" r="0.84"/><circle cx="436.8" cy="432.6" r="0.45"/><circle cx="329.8" cy="418.8" r="0.65"/><circle cx="402.0" cy="435.1" r="0.45"/><circle cx="390.3" cy="432.6" r="0.57"/><circle cx="265.5" cy="403.3" r="0.41"/><circle cx="412.3" cy="435.0" r="0.54"/><circle cx="367.1" cy="430.3" r="0.65"/><circle cx="344.2" cy="422.6" r="0.51"/><circle cx="341.9" cy="424.2" r="0.50"/><circle cx="369.0" cy="429.2" r="0.69"/><circle cx="314.0" cy="412.1" r="0.78"/><circle cx="317.0" cy="412.6" r="0.80"/><circle cx="299.3" cy="408.5" r="0.42"/><circle cx="406.0" cy="436.7" r="0.81"/><circle cx="322.5" cy="415.7" r="0.82"/><circle cx="285.5" cy="406.8" r="0.50"/><circle cx="336.1" cy="420.7" r="0.57"/><circle cx="242.7" cy="405.4" r="0.35"/><circle cx="355.3" cy="425.0" r="0.88"/><circle cx="365.2" cy="431.5" r="0.50"/><circle cx="383.9" cy="431.6" r="0.58"/><circle cx="370.0" cy="432.0" r="0.76"/><circle cx="372.0" cy="430.3" r="0.43"/><circle cx="314.1" cy="411.5" r="0.88"/><circle cx="196.2" cy="422.0" r="0.43"/><circle cx="404.5" cy="436.8" r="0.40"/><circle cx="235.1" cy="407.4" r="0.60"/><circle cx="328.5" cy="417.6" r="0.71"/><circle cx="339.7" cy="420.3" r="0.37"/><circle cx="445.6" cy="429.9" r="0.58"/><circle cx="231.8" cy="408.1" r="0.50"/><circle cx="380.5" cy="434.1" r="0.76"/><circle cx="252.6" cy="403.7" r="0.36"/><circle cx="381.0" cy="431.5" r="0.80"/><circle cx="299.7" cy="406.9" r="0.51"/><circle cx="326.6" cy="418.4" r="0.90"/><circle cx="245.7" cy="405.6" r="0.74"/><circle cx="285.9" cy="404.6" r="0.44"/><circle cx="325.1" cy="417.9" r="0.66"/><circle cx="398.3" cy="437.4" r="0.60"/><circle cx="336.1" cy="420.7" r="0.47"/><circle cx="400.7" cy="435.9" r="0.63"/><circle cx="387.2" cy="435.2" r="0.69"/><circle cx="382.3" cy="432.4" r="0.64"/><circle cx="278.0" cy="403.2" r="0.59"/><circle cx="192.4" cy="424.8" r="0.51"/><circle cx="489.1" cy="407.0" r="0.41"/><circle cx="359.9" cy="426.1" r="0.69"/><circle cx="334.0" cy="421.8" r="0.78"/><circle cx="376.8" cy="429.9" r="0.75"/><circle cx="270.1" cy="402.7" r="0.41"/><circle cx="443.3" cy="430.3" r="0.37"/><circle cx="393.1" cy="435.2" r="0.36"/><circle cx="264.0" cy="402.5" r="0.61"/><circle cx="373.7" cy="429.6" r="0.44"/><circle cx="363.9" cy="429.8" r="0.78"/><circle cx="387.8" cy="432.3" r="0.35"/><circle cx="290.5" cy="405.6" r="0.56"/><circle cx="218.3" cy="413.1" r="0.56"/><circle cx="346.8" cy="425.2" r="0.73"/><circle cx="404.5" cy="435.7" r="0.51"/><circle cx="462.5" cy="421.9" r="0.64"/><circle cx="254.0" cy="403.8" r="0.45"/><circle cx="370.8" cy="428.3" r="0.50"/><circle cx="381.1" cy="430.8" r="0.38"/><circle cx="416.0" cy="435.1" r="0.75"/><circle cx="383.7" cy="432.3" r="0.41"/><circle cx="343.5" cy="424.7" r="0.54"/><circle cx="331.7" cy="418.4" r="0.59"/><circle cx="282.6" cy="404.9" r="0.42"/><circle cx="306.6" cy="410.3" r="0.89"/><circle cx="209.1" cy="415.9" r="0.64"/><circle cx="322.2" cy="416.5" r="0.63"/><circle cx="209.1" cy="416.1" r="0.49"/><circle cx="168.0" cy="439.6" r="0.55"/><circle cx="264.0" cy="403.9" r="0.49"/><circle cx="443.3" cy="430.2" r="0.38"/><circle cx="403.2" cy="436.5" r="0.50"/><circle cx="365.4" cy="430.5" r="0.46"/><circle cx="333.4" cy="418.3" r="0.53"/><circle cx="334.1" cy="416.3" r="0.73"/><circle cx="338.7" cy="418.2" r="0.80"/><circle cx="337.6" cy="421.3" r="0.50"/><circle cx="274.7" cy="404.6" r="0.51"/><circle cx="332.8" cy="420.2" r="0.88"/><circle cx="337.8" cy="420.8" r="0.55"/><circle cx="328.7" cy="417.0" r="0.57"/><circle cx="350.8" cy="423.1" r="0.50"/><circle cx="369.3" cy="427.8" r="0.54"/><circle cx="360.9" cy="428.6" r="0.46"/><circle cx="334.8" cy="419.3" r="0.42"/><circle cx="330.1" cy="418.0" r="0.77"/><circle cx="391.9" cy="435.5" r="0.88"/><circle cx="270.2" cy="402.2" r="0.38"/><circle cx="249.8" cy="404.0" r="0.44"/><circle cx="249.7" cy="403.6" r="0.71"/><circle cx="274.8" cy="403.7" r="0.67"/><circle cx="196.4" cy="422.3" r="0.49"/><circle cx="343.1" cy="420.7" r="0.79"/><circle cx="394.3" cy="434.7" r="0.82"/><circle cx="306.3" cy="411.3" r="0.36"/><circle cx="359.5" cy="427.6" r="0.61"/><circle cx="380.7" cy="433.1" r="0.73"/><circle cx="307.1" cy="408.7" r="0.75"/><circle cx="361.0" cy="428.2" r="0.61"/><circle cx="341.7" cy="424.8" r="0.46"/><circle cx="396.5" cy="434.1" r="0.80"/><circle cx="339.3" cy="421.5" r="0.67"/><circle cx="330.0" cy="418.2" r="0.86"/><circle cx="194.5" cy="423.6" r="0.27"/><circle cx="331.2" cy="419.7" r="0.54"/><circle cx="284.1" cy="405.3" r="0.74"/><circle cx="350.1" cy="425.4" r="0.56"/><circle cx="356.6" cy="426.0" r="0.78"/><circle cx="323.8" cy="416.5" r="0.66"/><circle cx="457.4" cy="425.1" r="0.53"/><circle cx="398.4" cy="436.2" r="0.60"/><circle cx="396.4" cy="434.7" r="0.73"/><circle cx="319.3" cy="415.3" r="0.51"/><circle cx="290.2" cy="407.3" r="0.48"/><circle cx="369.3" cy="427.8" r="0.67"/><circle cx="334.0" cy="416.6" r="0.84"/><circle cx="249.6" cy="402.7" r="0.44"/><circle cx="253.9" cy="402.6" r="0.35"/><circle cx="187.9" cy="426.9" r="0.57"/><circle cx="396.5" cy="434.6" r="0.36"/><circle cx="300.9" cy="408.4" r="0.37"/><circle cx="287.2" cy="406.1" r="0.52"/><circle cx="329.8" cy="413.8" r="0.41"/><circle cx="248.3" cy="403.9" r="0.70"/><circle cx="296.7" cy="406.6" r="0.84"/><circle cx="434.4" cy="432.5" r="0.53"/><circle cx="230.0" cy="407.9" r="0.52"/><circle cx="294.8" cy="408.0" r="0.57"/><circle cx="212.4" cy="413.8" r="0.43"/><circle cx="329.6" cy="419.4" r="0.44"/><circle cx="373.7" cy="429.6" r="0.78"/><circle cx="297.9" cy="408.1" r="0.39"/><circle cx="361.2" cy="427.6" r="0.54"/><circle cx="409.0" cy="435.8" r="0.55"/><circle cx="320.8" cy="415.7" r="0.67"/><circle cx="421.9" cy="435.0" r="0.60"/><circle cx="459.9" cy="423.4" r="0.40"/><circle cx="312.3" cy="412.3" r="0.38"/><circle cx="223.5" cy="411.2" r="0.33"/><circle cx="224.9" cy="409.5" r="0.70"/><circle cx="259.6" cy="403.0" r="0.40"/><circle cx="190.1" cy="425.7" r="0.43"/><circle cx="386.1" cy="434.3" r="0.42"/><circle cx="388.7" cy="434.3" r="0.85"/><circle cx="405.9" cy="435.8" r="0.67"/><circle cx="218.0" cy="412.3" r="0.60"/><circle cx="299.3" cy="408.7" r="0.76"/><circle cx="336.5" cy="419.4" r="0.48"/><circle cx="335.0" cy="418.9" r="0.65"/><circle cx="342.5" cy="422.5" r="0.73"/><circle cx="308.2" cy="410.1" r="0.64"/><circle cx="284.3" cy="404.6" r="0.74"/><circle cx="268.6" cy="403.1" r="0.45"/><circle cx="344.0" cy="423.2" r="0.48"/><circle cx="242.7" cy="405.5" r="0.38"/><circle cx="319.8" cy="413.9" r="0.81"/><circle cx="380.6" cy="433.3" r="0.53"/><circle cx="336.6" cy="419.1" r="0.38"/><circle cx="368.6" cy="431.0" r="0.81"/><circle cx="363.3" cy="425.6" r="0.79"/><circle cx="298.1" cy="407.2" r="0.86"/><circle cx="339.5" cy="420.8" r="0.45"/><circle cx="476.5" cy="414.4" r="0.58"/><circle cx="358.2" cy="426.2" r="0.69"/><circle cx="407.4" cy="435.9" r="0.59"/><circle cx="271.6" cy="403.8" r="0.66"/><circle cx="333.1" cy="419.2" r="0.44"/><circle cx="350.2" cy="425.3" r="0.85"/><circle cx="389.7" cy="434.8" r="0.79"/><circle cx="307.0" cy="409.1" r="0.55"/><circle cx="416.0" cy="435.3" r="0.57"/><circle cx="205.6" cy="417.8" r="0.50"/><circle cx="389.7" cy="434.8" r="0.84"/><circle cx="196.1" cy="421.8" r="0.62"/><circle cx="368.8" cy="430.1" r="0.67"/><circle cx="395.4" cy="434.4" r="0.47"/><circle cx="265.5" cy="403.0" r="0.41"/><circle cx="345.0" cy="419.9" r="0.63"/><circle cx="302.2" cy="409.3" r="0.78"/><circle cx="321.3" cy="414.2" r="0.43"/><circle cx="452.3" cy="427.2" r="0.28"/><circle cx="309.4" cy="411.5" r="0.36"/><circle cx="255.4" cy="403.7" r="0.63"/><circle cx="276.4" cy="403.6" r="0.33"/><circle cx="168.2" cy="440.0" r="0.41"/><circle cx="287.1" cy="406.8" r="0.36"/><circle cx="361.2" cy="427.3" r="0.59"/><circle cx="373.3" cy="431.3" r="0.54"/><circle cx="347.1" cy="424.3" r="0.37"/><circle cx="426.0" cy="434.7" r="0.71"/><circle cx="350.8" cy="423.3" r="0.76"/><circle cx="350.3" cy="424.9" r="0.74"/><circle cx="327.6" cy="415.3" r="0.45"/><circle cx="307.7" cy="411.6" r="0.48"/><circle cx="273.2" cy="403.8" r="0.68"/><circle cx="203.5" cy="418.1" r="0.64"/><circle cx="331.6" cy="418.5" r="0.68"/><circle cx="392.2" cy="434.1" r="0.51"/><circle cx="229.9" cy="407.8" r="0.61"/><circle cx="214.6" cy="414.0" r="0.40"/><circle cx="421.8" cy="434.7" r="0.69"/><circle cx="394.1" cy="435.4" r="0.60"/><circle cx="370.4" cy="430.0" r="0.45"/><circle cx="378.4" cy="429.4" r="0.86"/><circle cx="389.0" cy="432.8" r="0.89"/><circle cx="489.2" cy="407.1" r="0.54"/><circle cx="337.2" cy="422.7" r="0.63"/><circle cx="246.8" cy="403.7" r="0.57"/><circle cx="248.3" cy="403.8" r="0.52"/><circle cx="360.8" cy="429.1" r="0.80"/><circle cx="443.2" cy="429.9" r="0.41"/><circle cx="308.7" cy="413.6" r="0.77"/><circle cx="468.0" cy="418.8" r="0.58"/><circle cx="302.4" cy="408.8" r="0.69"/><circle cx="436.7" cy="432.3" r="0.66"/><circle cx="348.8" cy="424.3" r="0.58"/><circle cx="390.0" cy="433.5" r="0.54"/><circle cx="383.6" cy="432.9" r="0.70"/><circle cx="334.8" cy="424.5" r="0.39"/><circle cx="293.4" cy="406.9" r="0.78"/><circle cx="436.6" cy="431.9" r="0.61"/><circle cx="366.1" cy="427.7" r="0.67"/><circle cx="387.8" cy="432.3" r="0.49"/><circle cx="386.4" cy="432.8" r="0.41"/><circle cx="231.7" cy="407.8" r="0.66"/><circle cx="268.6" cy="403.0" r="0.53"/><circle cx="289.1" cy="404.6" r="0.45"/><circle cx="344.1" cy="422.9" r="0.89"/><circle cx="253.9" cy="403.5" r="0.34"/><circle cx="173.4" cy="436.4" r="0.60"/><circle cx="455.0" cy="426.6" r="0.50"/><circle cx="273.2" cy="403.8" r="0.75"/><circle cx="241.1" cy="405.1" r="0.60"/><circle cx="282.8" cy="403.8" r="0.41"/><circle cx="359.7" cy="426.8" r="0.76"/><circle cx="192.3" cy="424.6" r="0.54"/><circle cx="470.9" cy="417.4" r="0.38"/><circle cx="407.5" cy="436.6" r="0.42"/><circle cx="233.3" cy="407.0" r="0.53"/><circle cx="273.2" cy="403.4" r="0.78"/></g>
<rect x="130" y="384" width="52" height="32" rx="4" fill="#8c8c8c" stroke="none" stroke-width="2" />
<text x="152" y="406" font-size="21" fill="#e4e4e4" text-anchor="middle" font-weight="bold" >铅笔</text>
<path d="M507,434 L507,429 Q507,424 512,424 Q517,424 517,429" fill="none" stroke="#c8c8c8" stroke-width="2" />
<rect x="512" y="434" width="15" height="12" rx="2" fill="#c8c8c8" stroke="none" stroke-width="2" />
<rect x="128" y="460" width="386" height="184" fill="#404040" />
<text x="160" y="488" font-size="21" fill="#dcdcdc" text-anchor="start" font-weight="bold" >笔刷尺寸</text>
<rect x="202" y="494" width="75" height="15" fill="#555555" stroke="#6a6a6a" stroke-width="1"/>
<path d="M202,509.5 L363,509.5 L363,502" fill="none" stroke="#8a8a8a" stroke-width="1" />
<text x="451" y="499" font-size="21" fill="#dcdcdc" text-anchor="end" font-weight="normal" stroke="#dcdcdc" stroke-width="0.5">10.0</text>
<path d="M458,488 L464,482 L470,488 M458,497 L464,503 L470,497" fill="none" stroke="#b0b0b0" stroke-width="1.5" />
<rect x="480" y="467" width="29" height="46" rx="4" fill="#4a4a4a" stroke="#5e5e5e" stroke-width="1" />
<path d="M487,484 L494,491 L503,480 M487,494 L494,501 L503,490" fill="none" stroke="#b8b8b8" stroke-width="2" />
<line x1="148" y1="516.5" x2="508" y2="516.5" stroke="#5e5e5e" stroke-width="2" />
<text x="160" y="541" font-size="21" fill="#dcdcdc" text-anchor="start" font-weight="bold" >不透明度</text>
<rect x="202" y="548" width="145" height="15" fill="#555555" stroke="#6a6a6a" stroke-width="1"/>
<path d="M202,563.5 L363,563.5 L363,556" fill="none" stroke="#8a8a8a" stroke-width="1" />
<text x="451" y="553" font-size="21" fill="#dcdcdc" text-anchor="end" font-weight="normal" stroke="#dcdcdc" stroke-width="0.5">90</text>
<path d="M458,542 L464,536 L470,542 M458,551 L464,557 L470,551" fill="none" stroke="#b0b0b0" stroke-width="1.5" />
<rect x="480" y="520" width="29" height="46" rx="4" fill="#4a4a4a" stroke="#5e5e5e" stroke-width="1" />
<path d="M494,533 L494,549 M489,544 L494,549 L499,544" fill="none" stroke="#b8b8b8" stroke-width="2.4" />
<path d="M486,549 Q494,557 502,549" fill="none" stroke="#b8b8b8" stroke-width="2" />
<line x1="148" y1="570.5" x2="508" y2="570.5" stroke="#5e5e5e" stroke-width="2" />
<text x="160" y="602" font-size="21" fill="#dcdcdc" text-anchor="start" font-weight="bold" ><tspan font-weight="normal" stroke="#dcdcdc" stroke-width="0.5">2-</tspan>纸质</text>
<rect x="270.5" y="574.5" width="199" height="39" rx="5" fill="#4e4e4e" stroke="#676767" stroke-width="1" />
<text x="370" y="602" font-size="21" fill="#dcdcdc" text-anchor="middle" font-weight="normal" >Rough paper</text>
<path d="M479,584 L501,584 M485,584 L485,580 L495,580 L495,584 M481,584 L483,607 L497,607 L499,584 M487,589 L487,603 M490,589 L490,603 M493,589 L493,603" fill="none" stroke="#b8b8b8" stroke-width="1.8" />
<clipPath id="cliprow4"><rect x="128" y="616" width="386" height="26"/></clipPath><g clip-path="url(#cliprow4)">
<text x="160" y="642" font-size="21" fill="#dcdcdc" text-anchor="start" font-weight="bold" ><tspan font-weight="normal" stroke="#dcdcdc" stroke-width="0.5">2-</tspan>纸质浓度</text>
<rect x="137" y="632" width="20" height="20" rx="4" fill="none" stroke="#8a8a8a" stroke-width="1.5" />
<text x="451" y="650" font-size="21" fill="#dcdcdc" text-anchor="end" font-weight="normal" stroke="#dcdcdc" stroke-width="0.5">90</text>
<path d="M458,638 L464,632 L470,638" fill="none" stroke="#b0b0b0" stroke-width="1.5" />
<rect x="480" y="620" width="29" height="46" rx="4" fill="#4a4a4a" stroke="#5e5e5e" stroke-width="1" />
<path d="M487,637 L494,644 L503,633" fill="none" stroke="#b8b8b8" stroke-width="2" />
</g>
<rect x="514" y="460" width="28" height="184" fill="#454545" />
<rect x="517" y="463" width="23" height="23" rx="3" fill="#555555" stroke="none" stroke-width="2" />
<path d="M523,477 L528.5,471.5 L534,477" fill="none" stroke="#a0a0a0" stroke-width="1.5" />
<rect x="518" y="489" width="19" height="85" rx="9.5" fill="#575757" stroke="none" stroke-width="2" />
<rect x="517" y="618" width="23" height="24" rx="3" fill="#555555" stroke="none" stroke-width="2" />
<path d="M523,627 L528.5,632.5 L534,627" fill="none" stroke="#a0a0a0" stroke-width="1.5" />
<rect x="126" y="643" width="416" height="41" fill="#4f4f4f" />
<path d="M482,650.7 A13.4,13.4 0 1 1 468.6,664" fill="none" stroke="#bdbdbd" stroke-width="2" />
<circle cx="470" cy="658.8" r="1.4" fill="#bdbdbd" stroke="none" stroke-width="2" />
<circle cx="472.9" cy="654.6" r="1.4" fill="#bdbdbd" stroke="none" stroke-width="2" />
<circle cx="476.9" cy="651.9" r="1.4" fill="#bdbdbd" stroke="none" stroke-width="2" />
<line x1="482" y1="651" x2="482" y2="662" stroke="#bdbdbd" stroke-width="2" />
<circle cx="482" cy="664" r="4" fill="#bdbdbd" stroke="none" stroke-width="2" />
<path d="M512,653 Q518,649 523,653 Q527,657 527,664 L535,672 Q536,674 534,676 L532,677 Q530,678 529,676 L521,669 Q514,670 511,665 Q508,661 509,658 L517,663 L520,662 L520,658 Z" fill="none" stroke="#bdbdbd" stroke-width="2" />
<rect x="126" y="684" width="416" height="6" fill="#2d2d2d" />
<rect x="126" y="690" width="416" height="32" fill="#3b3b3b" />
<rect x="126" y="694" width="38" height="28" fill="#363636" />
<rect x="126" y="722" width="416" height="10" fill="#4d4d4d" />
<line x1="138.0" y1="701.5" x2="152.0" y2="701.5" stroke="#888888" stroke-width="1.8" />
<line x1="138.0" y1="707.5" x2="152.0" y2="707.5" stroke="#888888" stroke-width="1.8" />
<line x1="138.0" y1="713.5" x2="152.0" y2="713.5" stroke="#888888" stroke-width="1.8" />
<rect x="164" y="694" width="142" height="38" fill="#4d4d4d" />
<circle cx="183" cy="714" r="8.5" fill="none" stroke="#b8b8b8" stroke-width="2" />
<circle cx="197.5" cy="714" r="11.5" fill="none" stroke="#b8b8b8" stroke-width="2" />
<circle cx="183" cy="714" r="7.5" fill="#4d4d4d" stroke="none" stroke-width="2" />
<circle cx="197.5" cy="714" r="10.5" fill="#4d4d4d" stroke="none" stroke-width="2" />
<line x1="182" y1="714" x2="197" y2="714" stroke="#c4c4c4" stroke-width="2.4" />
<path d="M180,714 L184.5,709.5 L184.5,718.5 Z" fill="#c4c4c4" stroke="none" stroke-width="2" />
<path d="M203.5,714 L195.5,707 L195.5,721 Z" fill="#c4c4c4" stroke="none" stroke-width="2" />
<text x="221" y="720" font-size="19" fill="#dcdcdc" text-anchor="start" font-weight="bold" >笔刷尺寸</text>
<rect x="126" y="734" width="416" height="302" fill="#2e2e2e" />
<clipPath id="clipbs"><rect x="126" y="734" width="390" height="302"/></clipPath><g clip-path="url(#clipbs)">
<rect x="128" y="736" width="63" height="76" fill="#3e3e3e" />
<circle cx="159.5" cy="764" r="0.6" fill="#ffffff" stroke="none" stroke-width="2" />
<text x="159.5" y="803" font-size="22" fill="#dcdcdc" text-anchor="middle" font-weight="normal" stroke="#dcdcdc" stroke-width="0.5">0.7</text>
<rect x="192" y="736" width="64" height="76" fill="#3e3e3e" />
<circle cx="224.0" cy="764" r="0.8" fill="#ffffff" stroke="none" stroke-width="2" />
<text x="224.0" y="803" font-size="22" fill="#dcdcdc" text-anchor="middle" font-weight="normal" stroke="#dcdcdc" stroke-width="0.5">1</text>
<rect x="258" y="736" width="62" height="76" fill="#3e3e3e" />
<circle cx="289.0" cy="764" r="1.2" fill="#ffffff" stroke="none" stroke-width="2" />
<text x="289.0" y="803" font-size="22" fill="#dcdcdc" text-anchor="middle" font-weight="normal" stroke="#dcdcdc" stroke-width="0.5">1.5</text>
<rect x="322" y="736" width="62" height="76" fill="#3e3e3e" />
<circle cx="353.0" cy="764" r="1.6" fill="#ffffff" stroke="none" stroke-width="2" />
<text x="353.0" y="803" font-size="22" fill="#dcdcdc" text-anchor="middle" font-weight="normal" stroke="#dcdcdc" stroke-width="0.5">2</text>
<rect x="386" y="736" width="64" height="76" fill="#3e3e3e" />
<circle cx="418.0" cy="764" r="2" fill="#ffffff" stroke="none" stroke-width="2" />
<text x="418.0" y="803" font-size="22" fill="#dcdcdc" text-anchor="middle" font-weight="normal" stroke="#dcdcdc" stroke-width="0.5">2.5</text>
<rect x="452" y="736" width="62" height="76" fill="#3e3e3e" />
<circle cx="483.0" cy="764" r="2.6" fill="#ffffff" stroke="none" stroke-width="2" />
<text x="483.0" y="803" font-size="22" fill="#dcdcdc" text-anchor="middle" font-weight="normal" stroke="#dcdcdc" stroke-width="0.5">3</text>
<rect x="128" y="814" width="63" height="78" fill="#3e3e3e" />
<circle cx="159.5" cy="844" r="3.2" fill="#ffffff" stroke="none" stroke-width="2" />
<text x="159.5" y="883" font-size="22" fill="#dcdcdc" text-anchor="middle" font-weight="normal" stroke="#dcdcdc" stroke-width="0.5">4</text>
<rect x="192" y="814" width="64" height="78" fill="#3e3e3e" />
<circle cx="224.0" cy="844" r="4" fill="#ffffff" stroke="none" stroke-width="2" />
<text x="224.0" y="883" font-size="22" fill="#dcdcdc" text-anchor="middle" font-weight="normal" stroke="#dcdcdc" stroke-width="0.5">5</text>
<rect x="258" y="814" width="62" height="78" fill="#3e3e3e" />
<circle cx="289.0" cy="844" r="5" fill="#ffffff" stroke="none" stroke-width="2" />
<text x="289.0" y="883" font-size="22" fill="#dcdcdc" text-anchor="middle" font-weight="normal" stroke="#dcdcdc" stroke-width="0.5">6</text>
<rect x="322" y="814" width="62" height="78" fill="#3e3e3e" />
<circle cx="353.0" cy="844" r="5.8" fill="#ffffff" stroke="none" stroke-width="2" />
<text x="353.0" y="883" font-size="22" fill="#dcdcdc" text-anchor="middle" font-weight="normal" stroke="#dcdcdc" stroke-width="0.5">7</text>
<rect x="386" y="814" width="64" height="78" fill="#3e3e3e" />
<circle cx="418.0" cy="844" r="6.8" fill="#ffffff" stroke="none" stroke-width="2" />
<text x="418.0" y="883" font-size="22" fill="#dcdcdc" text-anchor="middle" font-weight="normal" stroke="#dcdcdc" stroke-width="0.5">8</text>
<rect x="452" y="814" width="62" height="78" fill="#5f6b88" />
<circle cx="483.0" cy="844" r="9.6" fill="#ffffff" stroke="none" stroke-width="2" />
<rect x="462.0" y="856" width="42" height="31" rx="4" fill="#4f5a72" stroke="none" stroke-width="2" />
<text x="483.0" y="883" font-size="22" fill="#dcdcdc" text-anchor="middle" font-weight="normal" stroke="#dcdcdc" stroke-width="0.5">10</text>
<rect x="128" y="894" width="63" height="78" fill="#3e3e3e" />
<circle cx="159.5" cy="924" r="11.5" fill="#ffffff" stroke="none" stroke-width="2" />
<clipPath id="cg20"><rect x="128" y="936" width="63" height="40"/></clipPath>
<circle cx="159.5" cy="924" r="11.5" fill="#a4a4a4" stroke="none" stroke-width="0" clip-path="url(#cg20)"/>
<text x="159.5" y="963" font-size="22" fill="#dcdcdc" text-anchor="middle" font-weight="normal" stroke="#dcdcdc" stroke-width="0.5">12</text>
<rect x="192" y="894" width="64" height="78" fill="#3e3e3e" />
<circle cx="224.0" cy="924" r="14.5" fill="#ffffff" stroke="none" stroke-width="2" />
<clipPath id="cg21"><rect x="192" y="936" width="64" height="40"/></clipPath>
<circle cx="224.0" cy="924" r="14.5" fill="#a4a4a4" stroke="none" stroke-width="0" clip-path="url(#cg21)"/>
<text x="224.0" y="963" font-size="22" fill="#dcdcdc" text-anchor="middle" font-weight="normal" stroke="#dcdcdc" stroke-width="0.5">15</text>
<rect x="258" y="894" width="62" height="78" fill="#3e3e3e" />
<circle cx="289.0" cy="924" r="16.4" fill="#ffffff" stroke="none" stroke-width="2" />
<clipPath id="cg22"><rect x="258" y="936" width="62" height="40"/></clipPath>
<circle cx="289.0" cy="924" r="16.4" fill="#a4a4a4" stroke="none" stroke-width="0" clip-path="url(#cg22)"/>
<text x="289.0" y="963" font-size="22" fill="#dcdcdc" text-anchor="middle" font-weight="normal" stroke="#dcdcdc" stroke-width="0.5">17</text>
<rect x="322" y="894" width="62" height="78" fill="#3e3e3e" />
<circle cx="353.0" cy="924" r="19.3" fill="#ffffff" stroke="none" stroke-width="2" />
<clipPath id="cg23"><rect x="322" y="936" width="62" height="40"/></clipPath>
<circle cx="353.0" cy="924" r="19.3" fill="#a4a4a4" stroke="none" stroke-width="0" clip-path="url(#cg23)"/>
<text x="353.0" y="963" font-size="22" fill="#dcdcdc" text-anchor="middle" font-weight="normal" stroke="#dcdcdc" stroke-width="0.5">20</text>
<rect x="386" y="894" width="64" height="78" fill="#3e3e3e" />
<circle cx="418.0" cy="924" r="24" fill="#ffffff" stroke="none" stroke-width="2" />
<clipPath id="cg24"><rect x="386" y="936" width="64" height="40"/></clipPath>
<circle cx="418.0" cy="924" r="24" fill="#a4a4a4" stroke="none" stroke-width="0" clip-path="url(#cg24)"/>
<text x="418.0" y="963" font-size="22" fill="#dcdcdc" text-anchor="middle" font-weight="normal" stroke="#dcdcdc" stroke-width="0.5">25</text>
<rect x="452" y="894" width="62" height="78" fill="#3e3e3e" />
<circle cx="483.0" cy="924" r="24" fill="#ffffff" stroke="none" stroke-width="2" />
<clipPath id="cg25"><rect x="452" y="936" width="62" height="40"/></clipPath>
<circle cx="483.0" cy="924" r="24" fill="#a4a4a4" stroke="none" stroke-width="0" clip-path="url(#cg25)"/>
<text x="483.0" y="963" font-size="22" fill="#dcdcdc" text-anchor="middle" font-weight="normal" stroke="#dcdcdc" stroke-width="0.5">30</text>
<rect x="128" y="974" width="63" height="62" fill="#3e3e3e" />
<circle cx="159.5" cy="1004" r="24" fill="#ffffff" stroke="none" stroke-width="2" />
<clipPath id="cg30"><rect x="128" y="1016" width="63" height="40"/></clipPath>
<circle cx="159.5" cy="1004" r="24" fill="#a4a4a4" stroke="none" stroke-width="0" clip-path="url(#cg30)"/>
<text x="159.5" y="1043" font-size="22" fill="#dcdcdc" text-anchor="middle" font-weight="normal" stroke="#dcdcdc" stroke-width="0.5">40</text>
<rect x="192" y="974" width="64" height="62" fill="#3e3e3e" />
<circle cx="224.0" cy="1004" r="24" fill="#ffffff" stroke="none" stroke-width="2" />
<clipPath id="cg31"><rect x="192" y="1016" width="64" height="40"/></clipPath>
<circle cx="224.0" cy="1004" r="24" fill="#a4a4a4" stroke="none" stroke-width="0" clip-path="url(#cg31)"/>
<text x="224.0" y="1043" font-size="22" fill="#dcdcdc" text-anchor="middle" font-weight="normal" stroke="#dcdcdc" stroke-width="0.5">50</text>
<rect x="258" y="974" width="62" height="62" fill="#3e3e3e" />
<circle cx="289.0" cy="1004" r="24" fill="#ffffff" stroke="none" stroke-width="2" />
<clipPath id="cg32"><rect x="258" y="1016" width="62" height="40"/></clipPath>
<circle cx="289.0" cy="1004" r="24" fill="#a4a4a4" stroke="none" stroke-width="0" clip-path="url(#cg32)"/>
<text x="289.0" y="1043" font-size="22" fill="#dcdcdc" text-anchor="middle" font-weight="normal" stroke="#dcdcdc" stroke-width="0.5">60</text>
<rect x="322" y="974" width="62" height="62" fill="#3e3e3e" />
<circle cx="353.0" cy="1004" r="24" fill="#ffffff" stroke="none" stroke-width="2" />
<clipPath id="cg33"><rect x="322" y="1016" width="62" height="40"/></clipPath>
<circle cx="353.0" cy="1004" r="24" fill="#a4a4a4" stroke="none" stroke-width="0" clip-path="url(#cg33)"/>
<text x="353.0" y="1043" font-size="22" fill="#dcdcdc" text-anchor="middle" font-weight="normal" stroke="#dcdcdc" stroke-width="0.5">70</text>
<rect x="386" y="974" width="64" height="62" fill="#3e3e3e" />
<circle cx="418.0" cy="1004" r="24" fill="#ffffff" stroke="none" stroke-width="2" />
<clipPath id="cg34"><rect x="386" y="1016" width="64" height="40"/></clipPath>
<circle cx="418.0" cy="1004" r="24" fill="#a4a4a4" stroke="none" stroke-width="0" clip-path="url(#cg34)"/>
<text x="418.0" y="1043" font-size="22" fill="#dcdcdc" text-anchor="middle" font-weight="normal" stroke="#dcdcdc" stroke-width="0.5">80</text>
<rect x="452" y="974" width="62" height="62" fill="#3e3e3e" />
<circle cx="483.0" cy="1004" r="24" fill="#ffffff" stroke="none" stroke-width="2" />
<clipPath id="cg35"><rect x="452" y="1016" width="62" height="40"/></clipPath>
<circle cx="483.0" cy="1004" r="24" fill="#a4a4a4" stroke="none" stroke-width="0" clip-path="url(#cg35)"/>
<text x="483.0" y="1043" font-size="22" fill="#dcdcdc" text-anchor="middle" font-weight="normal" stroke="#dcdcdc" stroke-width="0.5">100</text>
</g>
<rect x="514" y="734" width="28" height="302" fill="#454545" />
<rect x="517" y="736" width="23" height="22" rx="3" fill="#555555" stroke="none" stroke-width="2" />
<path d="M523,750 L528.5,744.5 L534,750" fill="none" stroke="#a0a0a0" stroke-width="1.5" />
<rect x="518" y="760" width="19" height="132" rx="9.5" fill="#575757" stroke="none" stroke-width="2" />
<rect x="517" y="1012" width="23" height="23" rx="3" fill="#555555" stroke="none" stroke-width="2" />
<path d="M523,1021 L528.5,1026.5 L534,1021" fill="none" stroke="#a0a0a0" stroke-width="1.5" />
<rect x="126" y="1036" width="416" height="10" fill="#2d2d2d" />
<rect x="126" y="1046" width="416" height="30" fill="#3b3b3b" />
<rect x="126" y="1046" width="38" height="30" fill="#363636" />
<line x1="136" y1="1055.0" x2="154" y2="1055.0" stroke="#8c8c8c" stroke-width="2" />
<line x1="136" y1="1061.5" x2="154" y2="1061.5" stroke="#8c8c8c" stroke-width="2" />
<line x1="136" y1="1068.0" x2="154" y2="1068.0" stroke="#8c8c8c" stroke-width="2" />
<rect x="164" y="1048" width="56" height="40" fill="#4d4d4d" />
<rect x="222" y="1048" width="58" height="27" fill="#474747" />
<rect x="282" y="1048" width="58" height="27" fill="#474747" />
<rect x="342" y="1048" width="58" height="27" fill="#474747" />
<rect x="402" y="1048" width="58" height="27" fill="#474747" />
<rect x="462" y="1048" width="58" height="27" fill="#474747" />
<rect x="518.5" y="1047.5" width="22" height="26" rx="3" fill="none" stroke="#7a7a7a" stroke-width="1.5" />
<path d="M524,1058 L529.5,1063.5 L535,1058" fill="none" stroke="#a0a0a0" stroke-width="1.5" />
<circle cx="192" cy="1067" r="13" fill="none" stroke="#b8b8b8" stroke-width="2" />
<rect x="186" y="1061" width="12" height="12" rx="2" fill="#b8b8b8" stroke="none" stroke-width="2" />
<rect x="126" y="1075" width="416" height="423" fill="#4d4d4d" />
<clipPath id="cliptabs"><rect x="126" y="1046" width="392" height="28"/></clipPath><g clip-path="url(#cliptabs)">
<rect x="238.5" y="1055.5" width="26" height="26" rx="4" fill="none" stroke="#767676" stroke-width="2" />
<line x1="251.5" y1="1056" x2="251.5" y2="1080" stroke="#767676" stroke-width="1.5" />
<line x1="239" y1="1068.5" x2="264" y2="1068.5" stroke="#767676" stroke-width="1.5" />
<rect x="240" y="1057" width="11" height="11" fill="#3e3e3e" />
<rect x="251" y="1069" width="8" height="8" fill="none" stroke="#767676" stroke-width="1.5"/>
<rect x="298" y="1055" width="30" height="7" rx="3.5" fill="#767676" stroke="none" stroke-width="2" />
<rect x="298" y="1065" width="30" height="7" rx="3.5" fill="#767676" stroke="none" stroke-width="2" />
<path d="M301,1062 L305,1056 L309,1062 Z M301,1073 L305,1067 L309,1073 Z" fill="#bdbdbd" stroke="none" stroke-width="2" />
<path d="M358,1078 Q362,1062 366,1056 L371,1064 L376,1056 Q380,1062 385,1078 Z" fill="#767676" stroke="none" stroke-width="2" />
<rect x="418" y="1055" width="27" height="24" rx="3" fill="#767676" stroke="none" stroke-width="2" />
<rect x="424" y="1058" width="15" height="10" fill="#8a8a8a" />
<rect x="420" y="1058" width="3" height="3" fill="#474747" />
<rect x="440" y="1058" width="3" height="3" fill="#474747" />
<rect x="420" y="1064" width="3" height="3" fill="#474747" />
<rect x="440" y="1064" width="3" height="3" fill="#474747" />
<rect x="420" y="1070" width="3" height="3" fill="#474747" />
<rect x="440" y="1070" width="3" height="3" fill="#474747" />
<rect x="478.5" y="1056.5" width="24" height="22" rx="3" fill="none" stroke="#767676" stroke-width="2" />
<rect x="483" y="1061" width="26" height="22" rx="3" fill="#5a5a5a" stroke="#767676" stroke-width="2" />
</g>
<rect x="518.5" y="1047.5" width="22" height="26" rx="3" fill="#4a4a4a" stroke="#7a7a7a" stroke-width="1.5" stroke-dasharray="2,1"/>
<path d="M524,1058 L529.5,1063.5 L535,1058" fill="none" stroke="#a0a0a0" stroke-width="1.5" />
<circle cx="192" cy="1068" r="13" fill="none" stroke="#bdbdbd" stroke-width="2" />
<rect x="186" y="1062" width="12" height="12" rx="2.5" fill="#bdbdbd" stroke="none" stroke-width="2" />
<foreignObject x="146" y="1086" width="376" height="376"><div style="width:376px;height:376px;border-radius:50%;background:conic-gradient(from -60deg,#ea1212,#ecec14,#12e22a,#14ecec,#1414ec,#ec14ec,#ea1212);-webkit-mask:radial-gradient(circle at center,transparent 155px,#000 156px,#000 187px,transparent 188px)"></div></foreignObject>
<circle cx="334" cy="1274" r="187.5" fill="none" stroke="#2a2a2a" stroke-width="1.2" />
<circle cx="334" cy="1274" r="155.5" fill="none" stroke="#2a2a2a" stroke-width="1.2" />
<rect x="232" y="1173" width="204" height="204" fill="#3a3a3a" />
<foreignObject x="233" y="1174" width="202" height="202"><div style="width:202px;height:202px;background:linear-gradient(to bottom,rgba(0,0,0,0),#000),linear-gradient(to right,#fff,#f00)"></div></foreignObject>
<g transform="translate(185,1189) rotate(30)"><rect x="-17" y="-9" width="34" height="18" fill="#000"/><rect x="-14" y="-6" width="28" height="12" fill="#e01010" stroke="#fff" stroke-width="3"/></g>
<circle cx="233" cy="1376" r="8" fill="none" stroke="#000" stroke-width="4" />
<circle cx="233" cy="1376" r="8" fill="none" stroke="#fff" stroke-width="2" />
<rect x="154" y="1417" width="45" height="45" rx="5" fill="none" stroke="#6a6a6a" stroke-width="2" />
<rect x="159" y="1422" width="35" height="35" fill="#ffffff" />
<rect x="128" y="1396" width="44" height="44" rx="6" fill="#4a4a4a" stroke="#7589c0" stroke-width="4" />
<rect x="132.5" y="1400.5" width="35" height="35" rx="3" fill="#000000" stroke="#2c2c2c" stroke-width="1.5" />
<rect x="128" y="1467" width="71" height="25" rx="8" fill="none" stroke="#6a6a6a" stroke-width="2" />
<clipPath id="cliptr2"><rect x="133" y="1471" width="61" height="17" rx="5"/></clipPath><g clip-path="url(#cliptr2)">
<rect x="133" y="1471.0" width="9" height="8.5" fill="#ffffff"/>
<rect x="133" y="1479.5" width="9" height="8.5" fill="#8a8a8a"/>
<rect x="142" y="1471.0" width="9" height="8.5" fill="#8a8a8a"/>
<rect x="142" y="1479.5" width="9" height="8.5" fill="#ffffff"/>
<rect x="151" y="1471.0" width="9" height="8.5" fill="#ffffff"/>
<rect x="151" y="1479.5" width="9" height="8.5" fill="#8a8a8a"/>
<rect x="160" y="1471.0" width="9" height="8.5" fill="#8a8a8a"/>
<rect x="160" y="1479.5" width="9" height="8.5" fill="#ffffff"/>
<rect x="169" y="1471.0" width="9" height="8.5" fill="#ffffff"/>
<rect x="169" y="1479.5" width="9" height="8.5" fill="#8a8a8a"/>
<rect x="178" y="1471.0" width="9" height="8.5" fill="#8a8a8a"/>
<rect x="178" y="1479.5" width="9" height="8.5" fill="#ffffff"/>
<rect x="187" y="1471.0" width="9" height="8.5" fill="#ffffff"/>
<rect x="187" y="1479.5" width="9" height="8.5" fill="#8a8a8a"/>
</g>
<rect x="296" y="1470" width="16" height="17" rx="2" fill="#a8a8a8" stroke="none" stroke-width="2" />
<text x="304" y="1485" font-size="15" fill="#4d4d4d" text-anchor="middle" font-weight="bold" >H</text>
<text x="340" y="1486" font-size="21" fill="#dcdcdc" text-anchor="middle" font-weight="normal" stroke="#dcdcdc" stroke-width="0.5">0</text>
<rect x="360" y="1470" width="16" height="17" rx="2" fill="#a8a8a8" stroke="none" stroke-width="2" />
<text x="368" y="1485" font-size="15" fill="#4d4d4d" text-anchor="middle" font-weight="bold" >S</text>
<text x="404" y="1486" font-size="21" fill="#dcdcdc" text-anchor="middle" font-weight="normal" stroke="#dcdcdc" stroke-width="0.5">0</text>
<rect x="424" y="1470" width="16" height="17" rx="2" fill="#a8a8a8" stroke="none" stroke-width="2" />
<text x="432" y="1485" font-size="15" fill="#4d4d4d" text-anchor="middle" font-weight="bold" >V</text>
<text x="468" y="1486" font-size="21" fill="#dcdcdc" text-anchor="middle" font-weight="normal" stroke="#dcdcdc" stroke-width="0.5">0</text>
<circle cx="516" cy="1471" r="14" fill="none" stroke="#b0b0b0" stroke-width="2" />
<path d="M511,1462 L525,1471 L511,1480 Z" fill="none" stroke="#b0b0b0" stroke-width="2" />
<rect x="546" y="88" width="1172" height="48" fill="#4d4d4d" />
<rect x="553" y="95" width="34" height="34" rx="3.5" fill="none" stroke="#b8b8b8" stroke-width="2.2" />
<path d="M568.6,101.7 C561,104 556,109 557.5,114 C559,119 565,122 571,121 C577,120 583,117 582.5,112 C582,107 577,105 572,107 C567,108.5 563,110 565,113 C566,115 570,114 575,113" fill="none" stroke="#b8b8b8" stroke-width="3.2" stroke-linecap="round"/>
<line x1="603" y1="90" x2="603" y2="136" stroke="#696969" stroke-width="2" />
<path d="M630,95 L644,95 Q648,95 648,99 L648,116 M635,127 L626,127 Q622,127 622,123 L622,99 Q622,95 626,95 L630,95" fill="none" stroke="#b8b8b8" stroke-width="2" />
<path d="M622,116 L622,123 Q622,127 626,127 L634,127 Q631,118 622,116 Z" fill="#b8b8b8" stroke="none" stroke-width="2" />
<circle cx="647" cy="125" r="9" fill="#9a9a9a" stroke="#4d4d4d" stroke-width="1.5" />
<path d="M641,125 L653,125 M647,119 L647,131" fill="none" stroke="#4d4d4d" stroke-width="2" />
<path d="M668,127 L668,99 Q668,96 671,96 L679,96 L683,100 L688,100" fill="none" stroke="#b8b8b8" stroke-width="2" />
<path d="M670,127 L676,110 L702,110 L696,127 Z" fill="#b8b8b8" stroke="none" stroke-width="2" />
<path d="M683,108 Q683,99 694,99 L698,99" fill="none" stroke="#b8b8b8" stroke-width="2" />
<path d="M697,94 L703,99 L697,104 Z" fill="#b8b8b8" stroke="none" stroke-width="2" />
<path d="M720,100 L713,118 L713,125 Q713,128 716,128 L746,128 Q749,128 749,125 L749,118 L742,100 L737,100" fill="none" stroke="#b8b8b8" stroke-width="2" />
<path d="M725,100 L720,100" fill="none" stroke="#b8b8b8" stroke-width="2" />
<rect x="716" y="119" width="30" height="6" fill="#8a8a8a" />
<path d="M731,94 L731,112" fill="none" stroke="#b8b8b8" stroke-width="2" />
<path d="M725,108 L731,115 L737,108 Z" fill="#b8b8b8" stroke="none" stroke-width="2" />
<path d="M762,107 L768,101 L774,107 M762,118 L768,124 L774,118" fill="none" stroke="#a0a0a0" stroke-width="1.5" />
<line x1="791" y1="90" x2="791" y2="136" stroke="#696969" stroke-width="2" />
<path d="M815,104 L830,104 Q838,104 838,114 Q838,125 830,125 L808,125" fill="none" stroke="#b8b8b8" stroke-width="2.2" />
<path d="M807,103 L817,95 L817,111 Z" fill="#b8b8b8" stroke="none" stroke-width="2" />
<path d="M877,104 L862,104 Q854,104 854,114 Q854,125 862,125 L884,125" fill="none" stroke="#6a6a6a" stroke-width="2.2" />
<path d="M885,103 L875,95 L875,111 Z" fill="#6a6a6a" stroke="none" stroke-width="2" />
<line x1="903" y1="90" x2="903" y2="136" stroke="#696969" stroke-width="2" />
<line x1="942.0" y1="112.0" x2="950.0" y2="112.0" stroke="#b8b8b8" stroke-width="2.6" stroke-linecap="round"/>
<line x1="940.8" y1="116.5" x2="947.7" y2="120.5" stroke="#b8b8b8" stroke-width="2.6" stroke-linecap="round"/>
<line x1="937.5" y1="119.8" x2="941.5" y2="126.7" stroke="#b8b8b8" stroke-width="2.6" stroke-linecap="round"/>
<line x1="933.0" y1="121.0" x2="933.0" y2="129.0" stroke="#b8b8b8" stroke-width="2.6" stroke-linecap="round"/>
<line x1="928.5" y1="119.8" x2="924.5" y2="126.7" stroke="#b8b8b8" stroke-width="2.6" stroke-linecap="round"/>
<line x1="925.2" y1="116.5" x2="918.3" y2="120.5" stroke="#b8b8b8" stroke-width="2.6" stroke-linecap="round"/>
<line x1="924.0" y1="112.0" x2="916.0" y2="112.0" stroke="#b8b8b8" stroke-width="2.6" stroke-linecap="round"/>
<line x1="925.2" y1="107.5" x2="918.3" y2="103.5" stroke="#b8b8b8" stroke-width="2.6" stroke-linecap="round"/>
<line x1="928.5" y1="104.2" x2="924.5" y2="97.3" stroke="#b8b8b8" stroke-width="2.6" stroke-linecap="round"/>
<line x1="933.0" y1="103.0" x2="933.0" y2="95.0" stroke="#b8b8b8" stroke-width="2.6" stroke-linecap="round"/>
<line x1="937.5" y1="104.2" x2="941.5" y2="97.3" stroke="#b8b8b8" stroke-width="2.6" stroke-linecap="round"/>
<line x1="940.8" y1="107.5" x2="947.7" y2="103.5" stroke="#b8b8b8" stroke-width="2.6" stroke-linecap="round"/>
<rect x="967" y="96" width="23" height="23" rx="1" fill="none" stroke="#6e6e6e" stroke-width="2" stroke-dasharray="3,3"/>
<line x1="991.7" y1="114.0" x2="996.9" y2="111.0" stroke="#6e6e6e" stroke-width="2" stroke-linecap="round"/>
<line x1="993.0" y1="119.0" x2="999.0" y2="119.0" stroke="#6e6e6e" stroke-width="2" stroke-linecap="round"/>
<line x1="991.7" y1="124.0" x2="996.9" y2="127.0" stroke="#6e6e6e" stroke-width="2" stroke-linecap="round"/>
<line x1="988.0" y1="127.7" x2="991.0" y2="132.9" stroke="#6e6e6e" stroke-width="2" stroke-linecap="round"/>
<line x1="983.0" y1="129.0" x2="983.0" y2="135.0" stroke="#6e6e6e" stroke-width="2" stroke-linecap="round"/>
<path d="M1031,96 L1048,113 Q1050,115 1048,117 L1035,128 Q1033,130 1031,128 L1016,113 Q1014,111 1016,109 Z" fill="none" stroke="#b8b8b8" stroke-width="2.2" />
<path d="M1020,107 L1043,107 L1048,113 Q1050,115 1048,117 L1035,128 Q1033,130 1031,128 L1018,115 Z" fill="#b8b8b8" stroke="none" stroke-width="2" />
<path d="M1021,106 Q1012,110 1012,118 Q1012,124 1015,123 Q1018,122 1018,116 L1019,114 Z" fill="#b8b8b8" stroke="none" stroke-width="2" />
<rect x="1065" y="103" width="28" height="24" rx="0" fill="none" stroke="#b8b8b8" stroke-width="2" />
<circle cx="1065" cy="103" r="2.8" fill="#b8b8b8" stroke="none" stroke-width="2" />
<circle cx="1093" cy="103" r="2.8" fill="#b8b8b8" stroke="none" stroke-width="2" />
<circle cx="1065" cy="127" r="2.8" fill="#b8b8b8" stroke="none" stroke-width="2" />
<circle cx="1093" cy="127" r="2.8" fill="#b8b8b8" stroke="none" stroke-width="2" />
<circle cx="1065" cy="115" r="2.8" fill="#b8b8b8" stroke="none" stroke-width="2" />
<circle cx="1093" cy="115" r="2.8" fill="#b8b8b8" stroke="none" stroke-width="2" />
<circle cx="1079" cy="103" r="2.8" fill="#b8b8b8" stroke="none" stroke-width="2" />
<circle cx="1079" cy="127" r="2.8" fill="#b8b8b8" stroke="none" stroke-width="2" />
<circle cx="1079" cy="94" r="2.8" fill="#b8b8b8" stroke="none" stroke-width="2" />
<line x1="1079" y1="94" x2="1079" y2="103" stroke="#b8b8b8" stroke-width="2" />
<line x1="1111" y1="90" x2="1111" y2="136" stroke="#696969" stroke-width="2" />
<rect x="1127" y="97" width="30" height="28" rx="2" fill="none" stroke="#6a6a6a" stroke-width="2" stroke-dasharray="4,3"/>
<line x1="1125" y1="95" x2="1160" y2="129" stroke="#6a6a6a" stroke-width="2" />
<rect x="1175" y="97" width="30" height="28" rx="2" fill="none" stroke="#6a6a6a" stroke-width="2" stroke-dasharray="4,3"/>
<path d="M1206,102 L1206,127 L1181,127 Z" fill="#6a6a6a" stroke="none" stroke-width="2" />
<line x1="1175" y1="127" x2="1206" y2="96" stroke="#6a6a6a" stroke-width="2" stroke-dasharray="4,3"/>
<rect x="1223" y="96" width="32" height="30" rx="4" fill="none" stroke="#6a6a6a" stroke-width="2" />
<rect x="1229" y="101" width="20" height="20" rx="2" fill="none" stroke="#6a6a6a" stroke-width="2" stroke-dasharray="4,3"/>
<line x1="1271" y1="90" x2="1271" y2="136" stroke="#696969" stroke-width="2" />
<rect x="1278" y="88" width="96" height="48" fill="#606c8a" />
<path d="M1286,98 L1286,127 L1315,127 Z" fill="none" stroke="#c8ccd6" stroke-width="1.6" />
<path d="M1302,112 L1318,95 Q1320,93 1322,95 Q1324,97 1322,99 L1306,115 Z" fill="#b8b8b8" stroke="none" stroke-width="2" />
<path d="M1302,112 L1301,117 L1306,115" fill="#b8b8b8" stroke="none" stroke-width="2" />
<path d="M1332,113 L1367,113 Q1366,130 1350,130 Q1334,130 1332,113 Z" fill="none" stroke="#c8ccd6" stroke-width="1.6" />
<path d="M1350,112 L1366,95 Q1368,93 1370,95 Q1372,97 1370,99 L1354,115 Z" fill="#b8b8b8" stroke="none" stroke-width="2" />
<path d="M1380,113 L1416,113 M1380,125 L1416,125 M1387,100 L1387,130 M1405,105 L1405,130" fill="none" stroke="#707070" stroke-width="1.5" />
<path d="M1387,113 L1387,125 L1416,125" fill="none" stroke="#b8b8b8" stroke-width="2" />
<path d="M1398,112 L1414,95 Q1416,93 1418,95 Q1420,97 1418,99 L1402,115 Z" fill="#b8b8b8" stroke="none" stroke-width="2" />
<line x1="1431" y1="90" x2="1431" y2="136" stroke="#696969" stroke-width="2" />
<rect x="1450" y="93" width="25" height="39" rx="3" fill="none" stroke="#b8b8b8" stroke-width="2.2" />
<rect x="1450" y="123" width="25" height="9" fill="#b8b8b8" />
<rect x="1454" y="97" width="4" height="4" fill="#b8b8b8" />
<rect x="1460" y="97" width="4" height="4" fill="#b8b8b8" />
<rect x="1466" y="97" width="4" height="4" fill="#b8b8b8" />
<rect x="1454" y="103" width="4" height="4" fill="#b8b8b8" />
<rect x="1460" y="103" width="4" height="4" fill="#b8b8b8" />
<rect x="1454" y="109" width="4" height="4" fill="#b8b8b8" />
<rect x="1460" y="109" width="4" height="4" fill="#b8b8b8" />
<rect x="1466" y="109" width="4" height="4" fill="#b8b8b8" />
<rect x="1454" y="115" width="4" height="4" fill="#b8b8b8" />
<line x1="1495" y1="90" x2="1495" y2="136" stroke="#696969" stroke-width="2" />
<path d="M1518,124 Q1511,118 1512,110 Q1514,98 1527,97 Q1535,97 1539,101" fill="none" stroke="#b8b8b8" stroke-width="2.2" />
<path d="M1542,107 Q1544,114 1540,120 Q1534,128 1522,127 L1512,131 L1517,123" fill="none" stroke="#b8b8b8" stroke-width="2.2" stroke-linejoin="round"/>
<path d="M1535,105 L1545,95 M1539,95 L1545,95 L1545,101" fill="none" stroke="#b8b8b8" stroke-width="2" />
<text x="1527" y="121" font-size="22" fill="#b8b8b8" text-anchor="middle" font-weight="bold" >?</text>
<rect x="546" y="136" width="1172" height="42" fill="#393939" />
<rect x="544" y="140" width="200" height="36" fill="#5f6b88" />
<circle cx="565" cy="158" r="4" fill="#c8c8c8" stroke="none" stroke-width="2" />
<text x="582" y="166" font-size="21" fill="#e4e4e4" text-anchor="start" font-weight="bold" >插画*</text>
<path d="M1700,153 L1706,159 L1712,153" fill="none" stroke="#a8a8a8" stroke-width="1.6" />
<rect x="546" y="178" width="1148" height="1214" fill="#ffffff" />
<rect x="1694" y="178" width="24" height="1214" fill="#414141" />
<rect x="1694" y="178" width="24" height="24" fill="#4f4f4f" />
<path d="M1700,193 L1706,187 L1712,193" fill="none" stroke="#a8a8a8" stroke-width="1.6" />
<rect x="1697" y="609" width="18" height="333" rx="9" fill="#5a5a5a" stroke="none" stroke-width="2" />
<rect x="1694" y="1368" width="24" height="24" fill="#4f4f4f" />
<path d="M1700,1376 L1706,1382 L1712,1376" fill="none" stroke="#a8a8a8" stroke-width="1.6" />
<rect x="546" y="1392" width="1172" height="24" fill="#4d4d4d" />
<defs><linearGradient id="zg" x1="0" y1="1" x2="1" y2="0"><stop offset="0" stop-color="#2c2c2c"/><stop offset="1" stop-color="#555"/></linearGradient></defs>
<rect x="548.5" y="1393.5" width="195" height="22" fill="#4d4d4d" stroke="#858585" stroke-width="1"/>
<path d="M549,1415 L743,1394 L743,1415 Z" fill="#2e2e2e" stroke="none" stroke-width="2" />
<rect x="675" y="1394" width="7" height="21" fill="#6c6c6c" />
<text x="551" y="1413" font-size="21" fill="#e4e4e4" text-anchor="start" font-weight="normal" stroke="#e4e4e4" stroke-width="0.6">194.4</text>
<line x1="758" y1="1404" x2="774" y2="1404" stroke="#b0b0b0" stroke-width="2" />
<line x1="798" y1="1404" x2="813" y2="1404" stroke="#b0b0b0" stroke-width="2" />
<line x1="805.5" y1="1397" x2="805.5" y2="1412" stroke="#b0b0b0" stroke-width="2" />
<rect x="840" y="1398" width="12" height="12" fill="#b0b0b0" />
<rect x="868.5" y="1393.5" width="195" height="22" fill="#4d4d4d" stroke="#858585" stroke-width="1"/>
<path d="M869,1415 Q930,1414 962,1396 L962,1415 Z" fill="#2e2e2e" stroke="none" stroke-width="2" />
<path d="M970,1415 L970,1401 Q1000,1392 1030,1400 Q1050,1407 1063,1415 Z" fill="#2e2e2e" stroke="none" stroke-width="2" />
<rect x="962" y="1394" width="7" height="21" fill="#6c6c6c" />
<text x="876" y="1413" font-size="21" fill="#e4e4e4" text-anchor="start" font-weight="normal" stroke="#e4e4e4" stroke-width="0.6">0.0</text>
<path d="M1078,1404 A8,8 0 1 1 1086,1412" fill="none" stroke="#b0b0b0" stroke-width="2" />
<path d="M1074,1399 L1079,1407 L1083,1400 Z" fill="#b0b0b0" stroke="none" stroke-width="2" />
<path d="M1133,1404 A8,8 0 1 0 1125,1412" fill="none" stroke="#b0b0b0" stroke-width="2" />
<path d="M1137,1399 L1132,1407 L1128,1400 Z" fill="#b0b0b0" stroke="none" stroke-width="2" />
<path d="M1159,1398 A8.5,8.5 0 1 0 1171,1398" fill="none" stroke="#b0b0b0" stroke-width="2"/>
<circle cx="1165" cy="1405" r="2.5" fill="#b0b0b0" stroke="none" stroke-width="2" />
<line x1="1165" y1="1405" x2="1165" y2="1396" stroke="#b0b0b0" stroke-width="2" />
<rect x="1187" y="1393" width="22" height="22" fill="#565656" />
<path d="M1201,1398 L1195,1404 L1201,1410" fill="none" stroke="#a8a8a8" stroke-width="1.6" />
<rect x="1384" y="1396" width="104" height="17" rx="8.5" fill="#5c5c5c" stroke="none" stroke-width="2" />
<rect x="1670" y="1393" width="24" height="22" fill="#565656" />
<path d="M1679,1398 L1685,1404 L1679,1410" fill="none" stroke="#a8a8a8" stroke-width="1.6" />
<rect x="1694" y="1392" width="24" height="24" fill="#474747" />
<rect x="546" y="1416" width="1172" height="82" fill="#393939" />
<path d="M559,1438 L566,1431 L573,1438" fill="none" stroke="#8a8a8a" stroke-width="1.6" />
<path d="M559,1474 L566,1481 L573,1474 M559,1482 L566,1489 L573,1482" fill="none" stroke="#8a8a8a" stroke-width="1.6" />
<rect x="592" y="1425" width="76" height="67" fill="#474747" />
<rect x="614" y="1443" width="31" height="30" rx="2" fill="none" stroke="#a8a8a8" stroke-width="2" />
<line x1="622" y1="1443" x2="622" y2="1473" stroke="#a8a8a8" stroke-width="2" />
<line x1="637" y1="1443" x2="637" y2="1473" stroke="#a8a8a8" stroke-width="2" />
<path d="M629.5,1448 L633,1453 L629.5,1458 L626,1453 Z M629.5,1459 L633,1464 L629.5,1469 L626,1464 Z" fill="#a8a8a8" stroke="none" stroke-width="2" />
<rect x="1718" y="126" width="82" height="1372" fill="#393939" />
<rect x="1718" y="136" width="2.5" height="1282" fill="#323232" />
<rect x="1728" y="132" width="64" height="60" fill="#4d4d4d" />
<circle cx="1760" cy="162" r="15.3" fill="none" stroke="#b8b8b8" stroke-width="3" />
<path d="M1756,158 L1768,158 L1763.5,162.5 L1775.5,174.5 L1778,178 L1771,178 L1760,167 L1756,170 Z" fill="#b8b8b8" stroke="none" stroke-width="2" />
<rect x="1728" y="204" width="64" height="60" fill="#4d4d4d" />
<path d="M1743,224 L1743,220 Q1743,218 1745,218 L1755,218 L1758,222 L1762,222" fill="#b8b8b8" stroke="none" stroke-width="2" />
<rect x="1743" y="223" width="34" height="26" rx="3" fill="none" stroke="#b8b8b8" stroke-width="2.2" />
<path d="M1760,237 Q1757.7,228.7 1749,228 Q1751.3,236.3 1760,237 Z" fill="#9a9a9a" stroke="#b8b8b8" stroke-width="1.5" />
<path d="M1760,237 Q1768.7,236.3 1771,228 Q1762.3,228.7 1760,237 Z" fill="#9a9a9a" stroke="#b8b8b8" stroke-width="1.5" />
<path d="M1760,237 Q1762.3,245.3 1771,246 Q1768.7,237.7 1760,237 Z" fill="#9a9a9a" stroke="#b8b8b8" stroke-width="1.5" />
<path d="M1760,237 Q1751.3,237.7 1749,246 Q1757.7,245.3 1760,237 Z" fill="#9a9a9a" stroke="#b8b8b8" stroke-width="1.5" />
<rect x="1728" y="276" width="64" height="60" fill="#4d4d4d" />
<path d="M1743,296 L1743,292 Q1743,290 1745,290 L1755,290 L1758,294 L1762,294" fill="#b8b8b8" stroke="none" stroke-width="2" />
<rect x="1743" y="295" width="34" height="26" rx="3" fill="none" stroke="#b8b8b8" stroke-width="2.2" />
<rect x="1751" y="300" width="18" height="17" fill="#8c8c8c" stroke="#b8b8b8" stroke-width="2"/>
<path d="M1754,310 L1760,304 L1766,310 L1766,317 L1754,317 Z" fill="#b8b8b8" stroke="none" stroke-width="2" />
<rect x="1758" y="312" width="4" height="5" fill="#8c8c8c" />
<rect x="1728" y="348" width="64" height="60" fill="#4d4d4d" />
<path d="M1743,368 L1743,364 Q1743,362 1745,362 L1755,362 L1758,366 L1762,366" fill="#b8b8b8" stroke="none" stroke-width="2" />
<rect x="1743" y="367" width="34" height="26" rx="3" fill="none" stroke="#b8b8b8" stroke-width="2.2" />
<path d="M1760,381 Q1757.7,372.6 1749,372 Q1751.3,380.4 1760,381 Z" fill="#b8b8b8" stroke="#b8b8b8" stroke-width="0.5" />
<path d="M1760,381 Q1768.7,380.4 1771,372 Q1762.3,372.6 1760,381 Z" fill="#b8b8b8" stroke="#b8b8b8" stroke-width="0.5" />
<path d="M1760,381 Q1762.3,389.4 1771,390 Q1768.7,381.6 1760,381 Z" fill="#b8b8b8" stroke="#b8b8b8" stroke-width="0.5" />
<path d="M1760,381 Q1751.3,381.6 1749,390 Q1757.7,389.4 1760,381 Z" fill="#b8b8b8" stroke="#b8b8b8" stroke-width="0.5" />
<rect x="1728" y="420" width="64" height="60" fill="#4d4d4d" />
<path d="M1743,440 L1743,436 Q1743,434 1745,434 L1755,434 L1758,438 L1762,438" fill="#b8b8b8" stroke="none" stroke-width="2" />
<rect x="1743" y="439" width="34" height="26" rx="3" fill="none" stroke="#b8b8b8" stroke-width="2.2" />
<circle cx="1751.0" cy="444.0" r="1.7" fill="#b8b8b8" stroke="none" stroke-width="2" />
<circle cx="1751.0" cy="453.0" r="1.7" fill="#b8b8b8" stroke="none" stroke-width="2" />
<circle cx="1751.0" cy="462.0" r="1.7" fill="#b8b8b8" stroke="none" stroke-width="2" />
<circle cx="1755.5" cy="448.5" r="1.7" fill="#b8b8b8" stroke="none" stroke-width="2" />
<circle cx="1755.5" cy="457.5" r="1.7" fill="#b8b8b8" stroke="none" stroke-width="2" />
<circle cx="1760.0" cy="444.0" r="1.7" fill="#b8b8b8" stroke="none" stroke-width="2" />
<circle cx="1760.0" cy="453.0" r="1.7" fill="#b8b8b8" stroke="none" stroke-width="2" />
<circle cx="1760.0" cy="462.0" r="1.7" fill="#b8b8b8" stroke="none" stroke-width="2" />
<circle cx="1764.5" cy="448.5" r="1.7" fill="#b8b8b8" stroke="none" stroke-width="2" />
<circle cx="1764.5" cy="457.5" r="1.7" fill="#b8b8b8" stroke="none" stroke-width="2" />
<circle cx="1769.0" cy="444.0" r="1.7" fill="#b8b8b8" stroke="none" stroke-width="2" />
<circle cx="1769.0" cy="453.0" r="1.7" fill="#b8b8b8" stroke="none" stroke-width="2" />
<circle cx="1769.0" cy="462.0" r="1.7" fill="#b8b8b8" stroke="none" stroke-width="2" />
<rect x="1728" y="492" width="64" height="60" fill="#4d4d4d" />
<path d="M1743,512 L1743,508 Q1743,506 1745,506 L1755,506 L1758,510 L1762,510" fill="#b8b8b8" stroke="none" stroke-width="2" />
<rect x="1743" y="511" width="34" height="26" rx="3" fill="none" stroke="#b8b8b8" stroke-width="2.2" />
<rect x="1749" y="516" width="22" height="18" rx="1" fill="none" stroke="#b8b8b8" stroke-width="2" />
<path d="M1749,522 L1771,522 M1756,522 L1756,534 M1756,528 L1771,528" fill="none" stroke="#b8b8b8" stroke-width="2" />
<rect x="1728" y="564" width="64" height="60" fill="#4d4d4d" />
<path d="M1743,584 L1743,580 Q1743,578 1745,578 L1755,578 L1758,582 L1762,582" fill="#b8b8b8" stroke="none" stroke-width="2" />
<rect x="1743" y="583" width="34" height="26" rx="3" fill="none" stroke="#b8b8b8" stroke-width="2.2" />
<path d="M1761.9,597.7 L1769.3,602.9 L1770.8,599.2 Z" fill="#b8b8b8" stroke="none" stroke-width="2" />
<path d="M1760.8,598.8 L1762.4,607.7 L1766.0,606.2 Z" fill="#b8b8b8" stroke="none" stroke-width="2" />
<path d="M1759.3,598.9 L1754.1,606.3 L1757.8,607.8 Z" fill="#b8b8b8" stroke="none" stroke-width="2" />
<path d="M1758.2,597.8 L1749.3,599.4 L1750.8,603.0 Z" fill="#b8b8b8" stroke="none" stroke-width="2" />
<path d="M1758.1,596.3 L1750.7,591.1 L1749.2,594.8 Z" fill="#b8b8b8" stroke="none" stroke-width="2" />
<path d="M1759.2,595.2 L1757.6,586.3 L1754.0,587.8 Z" fill="#b8b8b8" stroke="none" stroke-width="2" />
<path d="M1760.7,595.1 L1765.9,587.7 L1762.2,586.2 Z" fill="#b8b8b8" stroke="none" stroke-width="2" />
<path d="M1761.8,596.2 L1770.7,594.6 L1769.2,591.0 Z" fill="#b8b8b8" stroke="none" stroke-width="2" />
<rect x="1728" y="636" width="64" height="60" fill="#4d4d4d" />
<path d="M1743,656 L1743,652 Q1743,650 1745,650 L1755,650 L1758,654 L1762,654" fill="#b8b8b8" stroke="none" stroke-width="2" />
<rect x="1743" y="655" width="34" height="26" rx="3" fill="none" stroke="#b8b8b8" stroke-width="2.2" />
<rect x="1749" y="660" width="22" height="18" rx="1" fill="none" stroke="#b8b8b8" stroke-width="2" />
<path d="M1750,677 L1756,669 L1761,673 L1765,668 L1770,677 Z" fill="#8a8a8a" stroke="none" stroke-width="2" />
<rect x="1728" y="708" width="64" height="60" fill="#4d4d4d" />
<path d="M1743,728 L1743,724 Q1743,722 1745,722 L1755,722 L1758,726 L1762,726" fill="#b8b8b8" stroke="none" stroke-width="2" />
<rect x="1743" y="727" width="34" height="26" rx="3" fill="none" stroke="#b8b8b8" stroke-width="2.2" />
<path d="M1763,733 L1752,733 L1752,749 L1768,749 L1768,739" fill="none" stroke="#b8b8b8" stroke-width="2" />
<path d="M1757,744 L1769,732" fill="none" stroke="#b8b8b8" stroke-width="3.2" />
<path d="M1755,746 L1756,741 L1760,745 Z" fill="#b8b8b8" stroke="none" stroke-width="2" />
<rect x="1728" y="780" width="64" height="60" fill="#4d4d4d" />
<path d="M1743,800 L1743,796 Q1743,794 1745,794 L1755,794 L1758,798 L1762,798" fill="#b8b8b8" stroke="none" stroke-width="2" />
<rect x="1743" y="799" width="34" height="26" rx="3" fill="none" stroke="#b8b8b8" stroke-width="2.2" />
<path d="M1760,803 L1769,808 L1769,818 L1760,823 L1751,818 L1751,808 Z M1751,808 L1760,813 L1769,808 M1760,813 L1760,823" fill="none" stroke="#b8b8b8" stroke-width="2" />
<path d="M1751,808 L1760,813 L1760,823 L1751,818 Z" fill="#8a8a8a" stroke="none" stroke-width="2" />
<rect x="1728" y="852" width="64" height="60" fill="#4d4d4d" />
<path d="M1743,872 L1743,868 Q1743,866 1745,866 L1755,866 L1758,870 L1762,870" fill="#b8b8b8" stroke="none" stroke-width="2" />
<rect x="1743" y="871" width="34" height="26" rx="3" fill="none" stroke="#b8b8b8" stroke-width="2.2" />
<circle cx="1760" cy="877" r="3" fill="#b8b8b8" stroke="none" stroke-width="2" />
<path d="M1751,882 L1769,882 M1760,882 L1760,889 L1755,896 M1760,889 L1765,896" fill="none" stroke="#b8b8b8" stroke-width="3" />
<rect x="1800" y="126" width="484" height="1372" fill="#2d2d2d" />
<rect x="1800" y="127" width="484" height="9" fill="#393939" />
<rect x="1802" y="128" width="480" height="34" fill="#3b3b3b" />
<rect x="1802" y="134" width="38" height="28" fill="#363636" />
<rect x="1802" y="162" width="480" height="10" fill="#4d4d4d" />
<line x1="1814.0" y1="141.5" x2="1828.0" y2="141.5" stroke="#888888" stroke-width="1.8" />
<line x1="1814.0" y1="147.5" x2="1828.0" y2="147.5" stroke="#888888" stroke-width="1.8" />
<line x1="1814.0" y1="153.5" x2="1828.0" y2="153.5" stroke="#888888" stroke-width="1.8" />
<rect x="1840" y="134" width="122" height="38" fill="#4d4d4d" />
<rect x="1964" y="134" width="58" height="28" fill="#363636" />
<rect x="1965" y="135" width="56" height="27" fill="#474747" />
<rect x="2024" y="134" width="58" height="28" fill="#363636" />
<rect x="2025" y="135" width="56" height="27" fill="#474747" />
<rect x="2084" y="134" width="58" height="28" fill="#363636" />
<rect x="2085" y="135" width="56" height="27" fill="#474747" />
<rect x="1855" y="149" width="20" height="16" rx="2" fill="none" stroke="#b8b8b8" stroke-width="2" />
<rect x="1860" y="145" width="20" height="15" rx="2" fill="#4d4d4d" stroke="#b8b8b8" stroke-width="2" />
<rect x="1863" y="148" width="14" height="9" fill="#9a9a9a" />
<text x="1896" y="161" font-size="19" fill="#dcdcdc" text-anchor="start" font-weight="bold" >导航器</text>
<clipPath id="cnav"><rect x="1964" y="134" width="180" height="28"/></clipPath><g clip-path="url(#cnav)">
<rect x="1977" y="142" width="24" height="26" rx="3" fill="none" stroke="#6a6a6a" stroke-width="2" />
<path d="M1980,164 L1987,156 L1992,161 L1998,154 L1998,166 L1980,166 Z" fill="#6a6a6a" stroke="none" stroke-width="2" />
<path d="M2041,166 Q2041,146 2053,146 Q2065,146 2065,166 M2041,158 L2065,158 M2049,146 L2049,158 M2057,146 L2057,158" fill="none" stroke="#6a6a6a" stroke-width="2" />
<circle cx="2113" cy="158" r="13" fill="none" stroke="#6a6a6a" stroke-width="2" />
<rect x="2111" y="155" width="4" height="12" fill="#6a6a6a" />
<circle cx="2113" cy="150" r="2.2" fill="#6a6a6a" stroke="none" stroke-width="2" />
</g>
<rect x="1802" y="176" width="480" height="356" fill="#2e2e2e" />
<rect x="1804" y="176" width="476" height="356" fill="#ffffff" />
<rect x="1951.5" y="258.5" width="175" height="184" rx="0" fill="none" stroke="#d50d0d" stroke-width="3" />
<rect x="1802" y="532" width="480" height="6" fill="#333333" />
<rect x="1802" y="538" width="480" height="86" fill="#4d4d4d" />
<rect x="1812.5" y="552.5" width="169" height="23" fill="#4a4a4a" stroke="#909090" stroke-width="1"/>
<path d="M1813,575 L1981,553 L1981,575 Z" fill="#2e2e2e" stroke="none" stroke-width="2" />
<rect x="1920" y="544" width="7" height="40" fill="#6e6e6e" stroke="#8c8c8c" stroke-width="1"/>
<text x="2073" y="573" font-size="23" fill="#dcdcdc" text-anchor="end" font-weight="normal" stroke="#dcdcdc" stroke-width="0.5">194.4</text>
<circle cx="2094" cy="564" r="14" fill="none" stroke="#b8b8b8" stroke-width="2" />
<circle cx="2134" cy="564" r="14" fill="none" stroke="#b8b8b8" stroke-width="2" />
<circle cx="2174" cy="564" r="14" fill="none" stroke="#b8b8b8" stroke-width="2" />
<line x1="2086" y1="564" x2="2102" y2="564" stroke="#b8b8b8" stroke-width="2" />
<line x1="2126" y1="564" x2="2142" y2="564" stroke="#b8b8b8" stroke-width="2" />
<line x1="2134" y1="556" x2="2134" y2="572" stroke="#b8b8b8" stroke-width="2" />
<rect x="2167" y="557" width="14" height="14" rx="2" fill="#b8b8b8" stroke="none" stroke-width="2" />
<line x1="2198.5" y1="550" x2="2198.5" y2="580" stroke="#6a6a6a" stroke-width="2" />
<rect x="2208" y="551" width="17" height="17" rx="2" fill="none" stroke="#b8b8b8" stroke-width="2" />
<rect x="2219" y="560" width="17" height="17" rx="2" fill="#4d4d4d" stroke="#b8b8b8" stroke-width="2" />
<path d="M2213,556 L2231,573" fill="none" stroke="#b8b8b8" stroke-width="2" />
<path d="M2212,555 L2219,556 L2213,562 Z M2232,574 L2225,573 L2231,567 Z" fill="#b8b8b8" stroke="none" stroke-width="2" />
<rect x="2251" y="553" width="23" height="23" rx="3" fill="none" stroke="#b8b8b8" stroke-width="2" />
<path d="M2256,558 L2269,571" fill="none" stroke="#b8b8b8" stroke-width="2" />
<path d="M2255,557 L2263,558 L2256,565 Z M2270,572 L2262,571 L2269,564 Z" fill="#b8b8b8" stroke="none" stroke-width="2" />
<rect x="1812.5" y="592.5" width="169" height="23" fill="#4a4a4a" stroke="#909090" stroke-width="1"/>
<path d="M1813,596 Q1850,622 1880,610 Q1905,596 1925,594 Q1950,594 1981,615 L1813,615 Z" fill="#2e2e2e" stroke="none" stroke-width="2" />
<rect x="1894" y="585" width="7" height="38" fill="#6e6e6e" stroke="#8c8c8c" stroke-width="1"/>
<text x="2073" y="613" font-size="23" fill="#dcdcdc" text-anchor="end" font-weight="normal" stroke="#dcdcdc" stroke-width="0.5">0.0</text>
<path d="M2086,598 A11,11 0 1 1 2094,616" fill="none" stroke="#b8b8b8" stroke-width="2" />
<path d="M2080,597 L2092,597 L2086,607 Z" fill="#b8b8b8" stroke="none" stroke-width="2" />
<path d="M2142,598 A11,11 0 1 0 2134,616" fill="none" stroke="#b8b8b8" stroke-width="2" />
<path d="M2148,597 L2136,597 L2142,607 Z" fill="#b8b8b8" stroke="none" stroke-width="2" />
<path d="M2181,594 A13,13 0 1 1 2167,594" fill="none" stroke="#b8b8b8" stroke-width="2"/>
<circle cx="2165" cy="598" r="1.2" fill="#b8b8b8" stroke="none" stroke-width="2" />
<circle cx="2169" cy="594" r="1.2" fill="#b8b8b8" stroke="none" stroke-width="2" />
<circle cx="2162" cy="603" r="1.2" fill="#b8b8b8" stroke="none" stroke-width="2" />
<circle cx="2174" cy="606" r="3.5" fill="#b8b8b8" stroke="none" stroke-width="2" />
<line x1="2174" y1="606" x2="2174" y2="592" stroke="#b8b8b8" stroke-width="2" />
<line x1="2198.5" y1="590" x2="2198.5" y2="620" stroke="#6a6a6a" stroke-width="2" />
<path d="M2208,594 L2218,604 L2208,614 Z" fill="none" stroke="#b8b8b8" stroke-width="2" />
<path d="M2237,594 L2227,604 L2237,614 Z" fill="#b8b8b8" stroke="none" stroke-width="2" />
<line x1="2222" y1="590" x2="2222" y2="618" stroke="#b8b8b8" stroke-width="2" />
<path d="M2251,589 L2273,589 L2262,600 Z" fill="#b8b8b8" stroke="none" stroke-width="2" />
<line x1="2250" y1="604" x2="2275" y2="604" stroke="#b8b8b8" stroke-width="2" />
<path d="M2253,617 L2271,617 L2262,608 Z" fill="none" stroke="#b8b8b8" stroke-width="2" />
<rect x="1802" y="624" width="480" height="8" fill="#2d2d2d" />
<rect x="1802" y="632" width="480" height="30" fill="#3b3b3b" />
<rect x="1802" y="634" width="38" height="28" fill="#363636" />
<rect x="1802" y="662" width="480" height="10" fill="#4d4d4d" />
<line x1="1814.0" y1="641.5" x2="1828.0" y2="641.5" stroke="#888888" stroke-width="1.8" />
<line x1="1814.0" y1="647.5" x2="1828.0" y2="647.5" stroke="#888888" stroke-width="1.8" />
<line x1="1814.0" y1="653.5" x2="1828.0" y2="653.5" stroke="#888888" stroke-width="1.8" />
<rect x="1840" y="634" width="142" height="38" fill="#4d4d4d" />
<rect x="1984" y="634" width="58" height="28" fill="#363636" />
<rect x="1985" y="635" width="56" height="27" fill="#474747" />
<rect x="2044" y="634" width="58" height="28" fill="#363636" />
<rect x="2045" y="635" width="56" height="27" fill="#474747" />
<rect x="2104" y="634" width="58" height="28" fill="#363636" />
<rect x="2105" y="635" width="56" height="27" fill="#474747" />
<path d="M1858,647 L1866,640.5 Q1868,639 1870,640.5 L1880,647 L1870,654 Q1868,655.5 1866,654 Z" fill="none" stroke="#b8b8b8" stroke-width="1.8" />
<path d="M1857,652 L1868,660 L1872,657 M1857,657.5 L1868,665.5 L1871,663.5" fill="none" stroke="#b8b8b8" stroke-width="1.8" />
<circle cx="1873" cy="659" r="2.3" fill="none" stroke="#b8b8b8" stroke-width="1.3" />
<circle cx="1881" cy="659" r="2.6" fill="#a0a0a0" stroke="none" stroke-width="2" />
<rect x="1871" y="665" width="2.2" height="2.2" fill="#b8b8b8" />
<rect x="1873.2" y="667.2" width="2.2" height="2.2" fill="#b8b8b8" />
<rect x="1871" y="667.2" width="2.2" height="2.2" fill="#6a6a6a" />
<rect x="1878.5" y="664.5" width="5" height="5" fill="none" stroke="#b8b8b8" stroke-width="1.4"/>
<text x="1897" y="661" font-size="19" fill="#dcdcdc" text-anchor="start" font-weight="bold" >图层属性</text>
<clipPath id="clprop"><rect x="1984" y="634" width="178" height="27"/></clipPath><g clip-path="url(#clprop)">
<path d="M2003,648 L2011,641 Q2013,639.5 2015,641 L2024,648 L2015,655 Q2013,656.5 2011,655 Z" fill="none" stroke="#6e6e6e" stroke-width="1.8" />
<path d="M2002,654 L2013,662" fill="none" stroke="#6e6e6e" stroke-width="1.8" />
<path d="M2017,654 L2031,654 L2024,661 Z" fill="#6e6e6e" stroke="none" stroke-width="2" />
<circle cx="2075" cy="652" r="11" fill="none" stroke="#6e6e6e" stroke-width="2" />
<path d="M2066,660 L2072,650 L2081,660 Z" fill="#6e6e6e" stroke="none" stroke-width="2" />
<rect x="2121" y="641" width="27" height="24" rx="3" fill="none" stroke="#6e6e6e" stroke-width="2" />
<rect x="2127" y="646" width="8" height="6" fill="#6e6e6e" />
<rect x="2127" y="656" width="15" height="4" fill="#6e6e6e" />
</g>
<rect x="1802" y="676" width="480" height="448" fill="#404040" />
<rect x="2256" y="676" width="26" height="448" fill="#434343" />
<line x1="1811" y1="691" x2="1819" y2="691" stroke="#7a7a7a" stroke-width="1.5" />
<line x1="1868" y1="691" x2="2248" y2="691" stroke="#7a7a7a" stroke-width="1.5" />
<text x="1822" y="699" font-size="20" fill="#dcdcdc" text-anchor="start" font-weight="bold" >效果</text>
<rect x="1840.5" y="706.5" width="409" height="39" rx="4" fill="#4f4f4f" stroke="#6c6c6c" stroke-width="1" />
<circle cx="1861" cy="726" r="12" fill="none" stroke="#b0b0b0" stroke-width="2" />
<text x="1880" y="734" font-size="20" fill="#dcdcdc" text-anchor="start" font-weight="bold" >边界效果</text>
<circle cx="1989.0" cy="715.0" r="1.6" fill="#a8a8a8" stroke="none" stroke-width="2" />
<circle cx="1989.0" cy="720.2" r="1.2" fill="#7a7a7a" stroke="none" stroke-width="2" />
<circle cx="1989.0" cy="725.4" r="1.6" fill="#a8a8a8" stroke="none" stroke-width="2" />
<circle cx="1989.0" cy="730.6" r="1.2" fill="#7a7a7a" stroke="none" stroke-width="2" />
<circle cx="1989.0" cy="735.8" r="1.6" fill="#a8a8a8" stroke="none" stroke-width="2" />
<circle cx="1994.2" cy="715.0" r="1.2" fill="#7a7a7a" stroke="none" stroke-width="2" />
<circle cx="1994.2" cy="720.2" r="1.6" fill="#a8a8a8" stroke="none" stroke-width="2" />
<circle cx="1994.2" cy="725.4" r="1.2" fill="#7a7a7a" stroke="none" stroke-width="2" />
<circle cx="1994.2" cy="730.6" r="1.6" fill="#a8a8a8" stroke="none" stroke-width="2" />
<circle cx="1994.2" cy="735.8" r="1.2" fill="#7a7a7a" stroke="none" stroke-width="2" />
<circle cx="1999.4" cy="715.0" r="1.6" fill="#a8a8a8" stroke="none" stroke-width="2" />
<circle cx="1999.4" cy="720.2" r="1.2" fill="#7a7a7a" stroke="none" stroke-width="2" />
<circle cx="1999.4" cy="725.4" r="1.6" fill="#a8a8a8" stroke="none" stroke-width="2" />
<circle cx="1999.4" cy="730.6" r="1.2" fill="#7a7a7a" stroke="none" stroke-width="2" />
<circle cx="1999.4" cy="735.8" r="1.6" fill="#a8a8a8" stroke="none" stroke-width="2" />
<circle cx="2004.6" cy="715.0" r="1.2" fill="#7a7a7a" stroke="none" stroke-width="2" />
<circle cx="2004.6" cy="720.2" r="1.6" fill="#a8a8a8" stroke="none" stroke-width="2" />
<circle cx="2004.6" cy="725.4" r="1.2" fill="#7a7a7a" stroke="none" stroke-width="2" />
<circle cx="2004.6" cy="730.6" r="1.6" fill="#a8a8a8" stroke="none" stroke-width="2" />
<circle cx="2004.6" cy="735.8" r="1.2" fill="#7a7a7a" stroke="none" stroke-width="2" />
<circle cx="2009.8" cy="715.0" r="1.6" fill="#a8a8a8" stroke="none" stroke-width="2" />
<circle cx="2009.8" cy="720.2" r="1.2" fill="#7a7a7a" stroke="none" stroke-width="2" />
<circle cx="2009.8" cy="725.4" r="1.6" fill="#a8a8a8" stroke="none" stroke-width="2" />
<circle cx="2009.8" cy="730.6" r="1.2" fill="#7a7a7a" stroke="none" stroke-width="2" />
<circle cx="2009.8" cy="735.8" r="1.6" fill="#a8a8a8" stroke="none" stroke-width="2" />
<text x="2018" y="734" font-size="20" fill="#dcdcdc" text-anchor="start" font-weight="bold" >网点</text>
<rect x="2125" y="713" width="18" height="18" rx="3" fill="#8a8a8a" stroke="#b0b0b0" stroke-width="1.5" />
<path d="M2146,719 L2148,721 L2148,737 Q2148,739 2146,739 L2133,739 Q2131,739 2131,737 L2131,733" fill="none" stroke="#b0b0b0" stroke-width="1.8" />
<text x="2156" y="734" font-size="20" fill="#dcdcdc" text-anchor="start" font-weight="bold" >图层颜色</text>
<line x1="1811" y1="765" x2="1819" y2="765" stroke="#7a7a7a" stroke-width="1.5" />
<line x1="1912" y1="765" x2="2248" y2="765" stroke="#7a7a7a" stroke-width="1.5" />
<text x="1822" y="773" font-size="20" fill="#dcdcdc" text-anchor="start" font-weight="bold" >颜色模式</text>
<rect x="1836.5" y="786.5" width="309" height="39" rx="4" fill="#4f4f4f" stroke="#6c6c6c" stroke-width="1" />
<circle cx="1953" cy="801" r="8" fill="#d9534f" stroke="none" stroke-width="2" />
<circle cx="1947" cy="811" r="8" fill="#4fbf4f" stroke="none" stroke-width="2" />
<circle cx="1960" cy="811" r="8" fill="#3f8fdf" stroke="none" stroke-width="2" />
<circle cx="1953" cy="808" r="3" fill="#e8e0e0" stroke="none" stroke-width="2" />
<text x="1979" y="814" font-size="20" fill="#dcdcdc" text-anchor="start" font-weight="bold" >彩色</text>
<path d="M2124,802 L2131,795 L2138,802 M2124,811 L2131,818 L2138,811" fill="none" stroke="#b0b0b0" stroke-width="1.8" />
<rect x="1802" y="1124" width="480" height="6" fill="#2d2d2d" />
<rect x="1802" y="1130" width="480" height="32" fill="#3b3b3b" />
<rect x="1802" y="1134" width="38" height="28" fill="#363636" />
<rect x="1802" y="1162" width="480" height="10" fill="#4d4d4d" />
<line x1="1814.0" y1="1141.5" x2="1828.0" y2="1141.5" stroke="#888888" stroke-width="1.8" />
<line x1="1814.0" y1="1147.5" x2="1828.0" y2="1147.5" stroke="#888888" stroke-width="1.8" />
<line x1="1814.0" y1="1153.5" x2="1828.0" y2="1153.5" stroke="#888888" stroke-width="1.8" />
<rect x="1840" y="1134" width="101" height="38" fill="#4d4d4d" />
<rect x="1944" y="1134" width="144" height="28" fill="#363636" />
<rect x="1945" y="1135" width="142" height="27" fill="#474747" />
<rect x="2090" y="1134" width="144" height="28" fill="#363636" />
<rect x="2091" y="1135" width="142" height="27" fill="#474747" />
<path d="M1856,1150 L1868,1142 L1880,1150 L1868,1158 Z" fill="none" stroke="#b8b8b8" stroke-width="2" />
<path d="M1856,1156 L1868,1164 L1880,1156 M1856,1162 L1868,1170 L1880,1162" fill="none" stroke="#b8b8b8" stroke-width="2" />
<text x="1896" y="1161" font-size="19" fill="#dcdcdc" text-anchor="start" font-weight="bold" >图层</text>
<clipPath id="clay"><rect x="1944" y="1134" width="292" height="28"/></clipPath><g clip-path="url(#clay)">
<path d="M1962,1150 L1982,1150 Q1992,1150 1992,1158 Q1992,1166 1982,1166 L1972,1166 M1962,1150 L1968,1144 M1962,1150 L1968,1156" fill="none" stroke="#6a6a6a" stroke-width="2.2" />
<text x="2002" y="1166" font-size="19" fill="#6e6e6e" text-anchor="start" font-weight="bold" >历史记录</text>
<path d="M2106,1168 L2106,1150 L2134,1150 L2134,1168 M2106,1150 L2134,1143" fill="none" stroke="#6a6a6a" stroke-width="2.5" />
<path d="M2112,1147 L2116,1150 M2120,1145 L2124,1150" fill="none" stroke="#6a6a6a" stroke-width="2" />
<text x="2148" y="1166" font-size="19" fill="#6e6e6e" text-anchor="start" font-weight="bold" >自动动作</text>
</g>
<rect x="1802" y="1174" width="480" height="131" fill="#4d4d4d" />
<defs><linearGradient id="btng" x1="0" y1="0" x2="0" y2="1"><stop offset="0" stop-color="#5e5e5e"/><stop offset="1" stop-color="#4e4e4e"/></linearGradient></defs>
<rect x="1804.5" y="1172.5" width="77" height="39" rx="4" fill="url(#btng)" stroke="#6e6e6e" stroke-width="1" />
<rect x="1814" y="1180" width="29" height="25" rx="4" fill="none" stroke="#c4c4c4" stroke-width="2" />
<path d="M1860,1187 L1867,1180 L1874,1187 M1860,1197 L1867,1204 L1874,1197" fill="none" stroke="#b0b0b0" stroke-width="1.6" />
<rect x="1888.5" y="1172.5" width="153" height="39" rx="4" fill="url(#btng)" stroke="#6e6e6e" stroke-width="1" />
<text x="1953" y="1201" font-size="20" fill="#dcdcdc" text-anchor="middle" font-weight="bold" >正常</text>
<path d="M2020,1187 L2027,1180 L2034,1187 M2020,1197 L2027,1204 L2034,1197" fill="none" stroke="#b0b0b0" stroke-width="1.6" />
<defs><linearGradient id="opg" x1="0" y1="0" x2="1" y2="0"><stop offset="0" stop-color="#ffffff" stop-opacity="0"/><stop offset="1" stop-color="#c4c4c4" stop-opacity="1"/></linearGradient></defs>
<rect x="2054.0" y="1182" width="9.7" height="9" fill="#ffffff" />
<rect x="2054.0" y="1191" width="9.7" height="9" fill="#c8c8c8" />
<rect x="2063.7" y="1182" width="9.7" height="9" fill="#c8c8c8" />
<rect x="2063.7" y="1191" width="9.7" height="9" fill="#ffffff" />
<rect x="2073.4" y="1182" width="9.7" height="9" fill="#ffffff" />
<rect x="2073.4" y="1191" width="9.7" height="9" fill="#c8c8c8" />
<rect x="2083.1" y="1182" width="9.7" height="9" fill="#c8c8c8" />
<rect x="2083.1" y="1191" width="9.7" height="9" fill="#ffffff" />
<rect x="2092.8" y="1182" width="9.7" height="9" fill="#ffffff" />
<rect x="2092.8" y="1191" width="9.7" height="9" fill="#c8c8c8" />
<rect x="2102.5" y="1182" width="9.7" height="9" fill="#c8c8c8" />
<rect x="2102.5" y="1191" width="9.7" height="9" fill="#ffffff" />
<rect x="2112.2" y="1182" width="9.7" height="9" fill="#ffffff" />
<rect x="2112.2" y="1191" width="9.7" height="9" fill="#c8c8c8" />
<rect x="2121.9" y="1182" width="9.7" height="9" fill="#c8c8c8" />
<rect x="2121.9" y="1191" width="9.7" height="9" fill="#ffffff" />
<rect x="2131.6" y="1182" width="9.7" height="9" fill="#ffffff" />
<rect x="2131.6" y="1191" width="9.7" height="9" fill="#c8c8c8" />
<rect x="2141.3" y="1182" width="9.7" height="9" fill="#c8c8c8" />
<rect x="2141.3" y="1191" width="9.7" height="9" fill="#ffffff" />
<rect x="2151.0" y="1182" width="9.7" height="9" fill="#ffffff" />
<rect x="2151.0" y="1191" width="9.7" height="9" fill="#c8c8c8" />
<rect x="2160.7" y="1182" width="9.7" height="9" fill="#c8c8c8" />
<rect x="2160.7" y="1191" width="9.7" height="9" fill="#ffffff" />
<rect x="2170.4" y="1182" width="9.7" height="9" fill="#ffffff" />
<rect x="2170.4" y="1191" width="9.7" height="9" fill="#c8c8c8" />
<rect x="2180.1" y="1182" width="9.7" height="9" fill="#c8c8c8" />
<rect x="2180.1" y="1191" width="9.7" height="9" fill="#ffffff" />
<rect x="2189.8" y="1182" width="9.7" height="9" fill="#ffffff" />
<rect x="2189.8" y="1191" width="9.7" height="9" fill="#c8c8c8" />
<rect x="2054" y="1182" width="145" height="18" fill="url(#opg)" />
<rect x="2199" y="1172" width="7" height="40" fill="#5e5e5e" stroke="#8a8a8a" stroke-width="1"/>
<text x="2253" y="1201" font-size="23" fill="#dcdcdc" text-anchor="end" font-weight="normal" stroke="#dcdcdc" stroke-width="0.5">100</text>
<path d="M2259,1187 L2266,1180 L2273,1187 M2259,1197 L2266,1204 L2273,1197" fill="none" stroke="#b0b0b0" stroke-width="1.6" />
<rect x="1868" y="1228" width="18" height="18" rx="3" fill="#7a7a7a" stroke="none" stroke-width="2" />
<rect x="1873" y="1222" width="18" height="18" rx="3" fill="#b8b8b8" stroke="#b8b8b8" stroke-width="1" />
<rect x="1879" y="1220" width="15" height="15" rx="2" fill="none" stroke="#b8b8b8" stroke-width="2" stroke-dasharray="3,2"/>
<path d="M1918,1248 L1921,1230 L1925,1230 L1928,1248 Z" fill="#b8b8b8" stroke="none" stroke-width="2" />
<rect x="1919" y="1224" width="8" height="6" fill="none" stroke="#b8b8b8" stroke-width="1.6"/>
<path d="M1908,1224 L1918,1228 M1938,1224 L1928,1228 M1909,1232 L1918,1230 M1937,1232 L1928,1230" fill="none" stroke="#b8b8b8" stroke-width="1.6" />
<path d="M1950,1220 L1962,1220 L1958,1246 L1954,1246 Z" fill="none" stroke="#b8b8b8" stroke-width="2" />
<path d="M1953,1224 Q1956,1230 1959,1224" fill="#b8b8b8" stroke="none" stroke-width="2" />
<path d="M1958,1244 Q1962,1236 1968,1242 L1974,1244" fill="none" stroke="#b8b8b8" stroke-width="1.8" />
<rect x="1992" y="1232" width="21" height="16" rx="3" fill="#b8b8b8" stroke="none" stroke-width="2" />
<path d="M1996,1232 L1996,1227 Q1996,1220 2002.5,1220 Q2009,1220 2009,1227 L2009,1232" fill="none" stroke="#b8b8b8" stroke-width="2.4" />
<rect x="2028" y="1236" width="14" height="12" rx="2" fill="#b8b8b8" stroke="none" stroke-width="2" />
<path d="M2031,1236 L2031,1232 Q2031,1228 2035,1228 Q2039,1228 2039,1232 L2039,1236" fill="none" stroke="#b8b8b8" stroke-width="1.8" />
<rect x="2036" y="1220" width="7" height="7" fill="#8a8a8a" />
<rect x="2050" y="1220" width="7" height="7" fill="#8a8a8a" />
<rect x="2043" y="1227" width="7" height="7" fill="#b8b8b8" />
<rect x="2050" y="1234" width="7" height="7" fill="#8a8a8a" />
<rect x="2036" y="1234" width="7" height="7" fill="#8a8a8a" />
<rect x="2062" y="1215" width="70" height="38" fill="#4a4a4a" />
<rect x="2073" y="1220" width="22" height="22" rx="4" fill="#6a6a6a" stroke="none" stroke-width="2" />
<circle cx="2082" cy="1230" r="6" fill="#4a4a4a" stroke="none" stroke-width="2" />
<path d="M2088,1236 L2100,1248 M2100,1236 L2088,1248" fill="none" stroke="#6a6a6a" stroke-width="3" />
<path d="M2112,1229 L2119,1222 L2126,1229 M2112,1239 L2119,1246 L2126,1239" fill="none" stroke="#6e6e6e" stroke-width="1.6" />
<rect x="2137" y="1215" width="70" height="38" fill="#4a4a4a" />
<path d="M2147,1246 L2166,1220 L2147,1220 Z" fill="none" stroke="#6a6a6a" stroke-width="3" />
<path d="M2162,1236 L2174,1248 M2174,1236 L2162,1248" fill="none" stroke="#6a6a6a" stroke-width="3" />
<path d="M2186,1229 L2193,1222 L2200,1229 M2186,1239 L2193,1246 L2200,1239" fill="none" stroke="#6e6e6e" stroke-width="1.6" />
<rect x="2210.5" y="1215.5" width="71" height="37" rx="4" fill="#555555" stroke="#727272" stroke-width="1" />
<rect x="2227" y="1229" width="19" height="18" fill="#ffffff" stroke="#8a8a8a" stroke-width="1"/>
<rect x="2219" y="1221" width="17" height="18" fill="#3a8af0" stroke="#8ab0e0" stroke-width="1"/>
<path d="M2259,1229 L2266,1222 L2273,1229 M2259,1239 L2266,1246 L2273,1239" fill="none" stroke="#b0b0b0" stroke-width="1.6" />
<rect x="1809" y="1268" width="26" height="25" rx="3" fill="none" stroke="#b8b8b8" stroke-width="2" />
<line x1="1809" y1="1280.5" x2="1835" y2="1280.5" stroke="#b8b8b8" stroke-width="2" />
<rect x="1813" y="1273" width="3" height="2" fill="#b8b8b8" />
<rect x="1813" y="1276" width="3" height="2" fill="#b8b8b8" />
<rect x="1813" y="1285" width="3" height="2" fill="#b8b8b8" />
<rect x="1813" y="1289" width="3" height="2" fill="#b8b8b8" />
<path d="M1972,1266 L1990,1266 Q1994,1266 1994,1270 L1994,1280 M1982,1293 L1972,1293 Q1968,1293 1968,1289 L1968,1270 Q1968,1266 1972,1266" fill="none" stroke="#b8b8b8" stroke-width="2" />
<path d="M1968,1284 L1976,1293 L1968,1293 Z" fill="#b8b8b8" stroke="none" stroke-width="2" />
<circle cx="1993" cy="1292" r="7.5" fill="#9a9a9a" stroke="#4d4d4d" stroke-width="1.5" />
<path d="M1988,1292 L1998,1292 M1993,1287 L1993,1297" fill="none" stroke="#4d4d4d" stroke-width="2" />
<path d="M2012,1266 L2030,1266 Q2034,1266 2034,1270 L2034,1280 M2022,1293 L2012,1293 Q2008,1293 2008,1289 L2008,1270 Q2008,1266 2012,1266" fill="none" stroke="#b8b8b8" stroke-width="2" />
<path d="M2008,1284 L2016,1293 L2008,1293 Z" fill="#b8b8b8" stroke="none" stroke-width="2" />
<circle cx="2033" cy="1292" r="7.5" fill="#9a9a9a" stroke="#4d4d4d" stroke-width="1.5" />
<path d="M2028,1292 L2038,1292 M2033,1287 L2033,1297" fill="none" stroke="#4d4d4d" stroke-width="2" />
<path d="M2020,1275 L2026,1272 L2032,1275 L2032,1282 L2026,1285 L2020,1282 Z M2020,1275 L2026,1278 L2032,1275 M2026,1278 L2026,1285" fill="none" stroke="#b8b8b8" stroke-width="1.6" />
<path d="M2047,1266 L2057,1266 L2060,1270 L2079,1270 L2079,1290 L2047,1290 Z" fill="#b8b8b8" stroke="none" stroke-width="2" />
<circle cx="2073" cy="1292" r="7.5" fill="#9a9a9a" stroke="#4d4d4d" stroke-width="1.5" />
<path d="M2068,1292 L2078,1292 M2073,1287 L2073,1297" fill="none" stroke="#4d4d4d" stroke-width="2" />
<rect x="2087" y="1280" width="14" height="14" rx="2" fill="none" stroke="#6a6a6a" stroke-width="2" />
<rect x="2101" y="1266" width="16" height="16" rx="2" fill="none" stroke="#6a6a6a" stroke-width="2" />
<rect x="2105" y="1270" width="8" height="8" fill="#6a6a6a" />
<path d="M2094,1288 L2102,1288" fill="none" stroke="#6a6a6a" stroke-width="2" />
<rect x="2126" y="1280" width="16" height="16" rx="2" fill="none" stroke="#b8b8b8" stroke-width="2" />
<rect x="2140" y="1266" width="18" height="16" rx="2" fill="none" stroke="#b8b8b8" stroke-width="2" />
<path d="M2146,1274 L2133,1288 M2133,1280 L2133,1288 L2141,1288" fill="none" stroke="#b8b8b8" stroke-width="2" />
<rect x="2168" y="1266" width="28" height="28" rx="4" fill="#b8b8b8" stroke="none" stroke-width="2" />
<circle cx="2182" cy="1280" r="8" fill="#3a3a3a" stroke="none" stroke-width="2" />
<rect x="2206" y="1268" width="30" height="26" rx="3" fill="none" stroke="#6a6a6a" stroke-width="2" />
<rect x="2216" y="1274" width="24" height="22" rx="4" fill="#6a6a6a" stroke="none" stroke-width="2" />
<circle cx="2228" cy="1285" r="5" fill="#4d4d4d" stroke="none" stroke-width="2" />
<path d="M2212,1281 L2220,1281 M2215,1278 L2212,1281 L2215,1284" fill="none" stroke="#6a6a6a" stroke-width="2" />
<path d="M2250,1272 L2274,1272 M2257,1272 L2257,1268 L2267,1268 L2267,1272 M2252,1272 L2254,1294 L2270,1294 L2272,1272 M2259,1276 L2259,1290 M2262,1276 L2262,1290 M2265,1276 L2265,1290" fill="none" stroke="#b8b8b8" stroke-width="2" />
<rect x="1802" y="1305" width="480" height="193" fill="#404040" />
<rect x="1804" y="1308" width="452" height="130" fill="#3c3c3c" />
<rect x="1880" y="1308" width="376" height="64" fill="#5f6b88" />
<rect x="1842" y="1308" width="2" height="130" fill="#262626" />
<rect x="1878" y="1308" width="2" height="130" fill="#262626" />
<rect x="1804" y="1372" width="452" height="2" fill="#262626" />
<rect x="1804" y="1438" width="452" height="2" fill="#262626" />
<path d="M1809,1344 Q1811,1331 1822,1331 Q1833,1331 1835,1344" fill="none" stroke="#bdbdbd" stroke-width="2.2" stroke-linecap="round"/>
<circle cx="1822" cy="1341" r="6" fill="#bdbdbd" stroke="none" stroke-width="2" />
<path d="M1809,1408 Q1811,1395 1822,1395 Q1833,1395 1835,1408" fill="none" stroke="#bdbdbd" stroke-width="2.2" stroke-linecap="round"/>
<circle cx="1822" cy="1405" r="6" fill="#bdbdbd" stroke="none" stroke-width="2" />
<path d="M1850,1350 L1868,1331 Q1870,1329 1872,1331 Q1874,1333 1872,1335 L1854,1354 Z" fill="#b8b8b8" stroke="none" stroke-width="2" />
<path d="M1850,1350 L1848,1356 L1854,1354 Z" fill="#b8b8b8" stroke="none" stroke-width="2" />
<line x1="1847" y1="1357" x2="1872" y2="1357" stroke="#b8b8b8" stroke-width="2" />
<rect x="1889" y="1311" width="74" height="58" fill="#dfe4ee" />
<rect x="1893" y="1315" width="66" height="50" fill="#1c1c1c" />
<defs><pattern id="chk10" x="1895" y="1317" width="20" height="20" patternUnits="userSpaceOnUse"><rect width="20" height="20" fill="#ffffff"/><rect width="10" height="10" fill="#cdcdcd"/><rect x="10" y="10" width="10" height="10" fill="#cdcdcd"/></pattern></defs>
<rect x="1895" y="1317" width="62" height="46" fill="url(#chk10)" />
<text x="1977" y="1336" font-size="21" fill="#e4e4e4" text-anchor="start" font-weight="normal" stroke="#e4e4e4" stroke-width="0.4">100 %</text>
<text x="2046" y="1336" font-size="20" fill="#e4e4e4" text-anchor="start" font-weight="bold" >正常</text>
<text x="1977" y="1362" font-size="20" fill="#e4e4e4" text-anchor="start" font-weight="normal" stroke="#e4e4e4" stroke-width="0.3">图层 1</text>
<rect x="1852" y="1394" width="20" height="20" rx="3" fill="none" stroke="#2a2a2a" stroke-width="2" />
<rect x="1890" y="1380" width="70" height="52" fill="#1f1f1f" />
<rect x="1893" y="1382" width="65" height="50" fill="#ffffff" />
<rect x="1984" y="1380" width="35" height="34" fill="#ffffff" />
<path d="M1994,1386 L2006,1386 Q2010,1386 2010,1390 L2010,1404 Q2010,1408 2006,1408 L1998,1408 Q1994,1406 1992,1402 L1992,1388 Q1992,1386 1994,1386 Z" fill="none" stroke="#2a2a2a" stroke-width="2.2" />
<text x="2027" y="1427" font-size="20" fill="#e4e4e4" text-anchor="start" font-weight="bold" >纸张</text>
</svg>
</body></html>
